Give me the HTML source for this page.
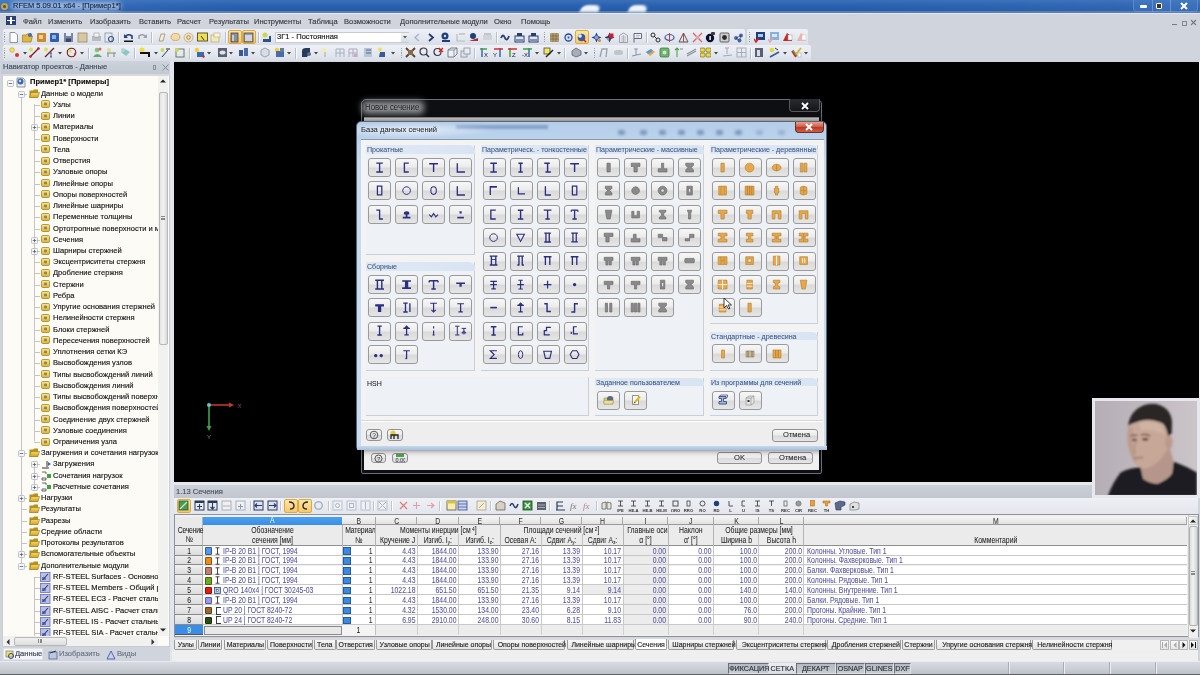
<!DOCTYPE html><html><head><meta charset="utf-8"><style>
*{margin:0;padding:0;box-sizing:border-box}
html,body{width:1200px;height:675px;overflow:hidden;background:#d0d4dd;font-family:"Liberation Sans",sans-serif;font-size:7.35px;color:#000}
div,span,svg{position:absolute}
.t{white-space:nowrap;line-height:1}
.btn{border:1px solid #8f9296;border-radius:3px;background:linear-gradient(#f7f7f7 0%,#ececec 45%,#dadada 55%,#e6e6e6 100%)}
.grp{background:#edf1f7;border-right:1px solid #c9d3e2;border-bottom:1px solid #c9d3e2}
.gh{background:linear-gradient(90deg,#dfe8f5,#d7e2f2);border-top-right-radius:5px;color:#3a4f7a}
</style></head><body><div style="left:0;top:0;width:1200px;height:675px;overflow:hidden;will-change:transform">
<svg style="left:0;top:0" width="0" height="0"><defs><linearGradient id="fg" x1="0" y1="0" x2="0" y2="1"><stop offset="0" stop-color="#f4d86a"/><stop offset="1" stop-color="#d0a42a"/></linearGradient><linearGradient id="fg2" x1="0" y1="0" x2="0" y2="1"><stop offset="0" stop-color="#fbe890"/><stop offset="1" stop-color="#dcb43c"/></linearGradient></defs></svg>
<div style="left:0px;top:0px;width:1200px;height:12px;background:linear-gradient(180deg,#3b70b8 0%,#2a62b0 45%,#2158a8 100%)"></div>
<div style="left:0px;top:0px;width:1200px;height:12px;background:linear-gradient(90deg,rgba(90,140,210,.35) 0%,rgba(0,0,0,0) 20%,rgba(0,0,0,0) 70%,rgba(80,130,200,.25) 100%)"></div>
<div style="left:0px;top:11px;width:1200px;height:2px;background:#5d7fb0"></div>
<div style="left:581px;top:5px;width:19px;height:7px;background:#eef4fb;filter:blur(1px);border-radius:5px 6px 0 0;transform:skewX(-25deg)"></div>
<div style="left:629px;top:5px;width:18px;height:7px;background:#eef4fb;filter:blur(1px);border-radius:5px 6px 0 0;transform:skewX(-20deg)"></div>
<svg style="left:0px;top:2px;" width="9" height="9" viewBox="0 0 9 9"><circle cx="4.5" cy="4.5" r="3.5" fill="#c9a14a"/><circle cx="4.5" cy="4.5" r="1.5" fill="#4c5a2a"/></svg>
<div style="left:11px;top:2px;width:110px;height:8px;background:rgba(175,200,235,.85);filter:blur(2.5px);border-radius:4px"></div>
<span class="t" style="left:13px;top:2.31px;color:#1c2436;font-size:7.95px;transform:scaleX(0.945);transform-origin:0 0;-webkit-text-stroke:.14px">RFEM 5.09.01 x64 - [Пример1*]</span>
<div style="left:1133px;top:0px;width:65px;height:12px;border:1px solid rgba(120,160,215,.5);border-top:none;border-radius:0 0 4px 4px;background:rgba(80,130,200,.3)"></div>
<div style="left:1152px;top:0px;width:1px;height:12px;background:rgba(150,180,220,.5)"></div>
<div style="left:1170px;top:0px;width:1px;height:12px;background:rgba(150,180,220,.5)"></div>
<div style="left:1140px;top:5px;width:7px;height:2.5px;background:#fff;border-radius:1px"></div>
<div style="left:1156px;top:2.5px;width:6px;height:6px;border:1.6px solid #fff;background:#333;border-radius:1px"></div>
<svg style="left:1180px;top:2px;" width="8" height="8" viewBox="0 0 8 8"><path d="M1 1L7 7M7 1L1 7" stroke="#fff" stroke-width="2"/></svg>
<div style="left:0px;top:13px;width:1200px;height:48px;background:#d0d4dd"></div>
<div style="left:0px;top:13px;width:1200px;height:1px;background:#e4e7ec"></div>
<svg style="left:6px;top:16px;" width="10" height="9" viewBox="0 0 10 9"><rect x="0" y="0" width="10" height="9" fill="#2a3f78"/><rect x="1" y="4" width="8" height="1" fill="#fff"/><rect x="4" y="1" width="2" height="7" fill="#fff"/></svg>
<span class="t" style="left:23px;top:18.28px;color:#383838;font-size:8.00px;transform:scaleX(0.945);transform-origin:0 0;-webkit-text-stroke:.14px">Файл</span>
<span class="t" style="left:48px;top:18.28px;color:#383838;font-size:8.00px;transform:scaleX(0.945);transform-origin:0 0;-webkit-text-stroke:.14px">Изменить</span>
<span class="t" style="left:90px;top:18.28px;color:#383838;font-size:8.00px;transform:scaleX(0.945);transform-origin:0 0;-webkit-text-stroke:.14px">Изобразить</span>
<span class="t" style="left:139px;top:18.28px;color:#383838;font-size:8.00px;transform:scaleX(0.945);transform-origin:0 0;-webkit-text-stroke:.14px">Вставить</span>
<span class="t" style="left:177px;top:18.28px;color:#383838;font-size:8.00px;transform:scaleX(0.945);transform-origin:0 0;-webkit-text-stroke:.14px">Расчет</span>
<span class="t" style="left:209px;top:18.28px;color:#383838;font-size:8.00px;transform:scaleX(0.945);transform-origin:0 0;-webkit-text-stroke:.14px">Результаты</span>
<span class="t" style="left:254px;top:18.28px;color:#383838;font-size:8.00px;transform:scaleX(0.945);transform-origin:0 0;-webkit-text-stroke:.14px">Инструменты</span>
<span class="t" style="left:308px;top:18.28px;color:#383838;font-size:8.00px;transform:scaleX(0.945);transform-origin:0 0;-webkit-text-stroke:.14px">Таблица</span>
<span class="t" style="left:344px;top:18.28px;color:#383838;font-size:8.00px;transform:scaleX(0.945);transform-origin:0 0;-webkit-text-stroke:.14px">Возможности</span>
<span class="t" style="left:400px;top:18.28px;color:#383838;font-size:8.00px;transform:scaleX(0.945);transform-origin:0 0;-webkit-text-stroke:.14px">Дополнительные модули</span>
<span class="t" style="left:494px;top:18.28px;color:#383838;font-size:8.00px;transform:scaleX(0.945);transform-origin:0 0;-webkit-text-stroke:.14px">Окно</span>
<span class="t" style="left:521px;top:18.28px;color:#383838;font-size:8.00px;transform:scaleX(0.945);transform-origin:0 0;-webkit-text-stroke:.14px">Помощь</span>
<div style="left:1172px;top:24px;width:4.5px;height:1.3px;background:#7a7a7a"></div>
<div style="left:1181.5px;top:21px;width:5.5px;height:4.5px;border:1px solid #888;border-top-width:1.6px"></div>
<svg style="left:1190px;top:19px;" width="7" height="7" viewBox="0 0 7 7"><path d="M1 1L6 6M6 1L1 6" stroke="#7a7a7a" stroke-width="1.1"/></svg>
<div style="left:3px;top:29px;width:742px;height:16px;background:linear-gradient(#eef0f5,#e3e7ee 60%,#d9dde6);border-radius:2px"></div>
<div style="left:747px;top:29px;width:61px;height:16px;background:linear-gradient(#eef0f5,#e3e7ee 60%,#d9dde6);border-radius:2px"></div>
<div style="left:3px;top:45px;width:808px;height:16px;background:linear-gradient(#eef0f5,#e3e7ee 60%,#d9dde6);border-radius:2px"></div>
<div style="left:4px;top:32.0px;width:1.2px;height:1.2px;background:#9aa3b3"></div>
<div style="left:4px;top:34.2px;width:1.2px;height:1.2px;background:#9aa3b3"></div>
<div style="left:4px;top:36.4px;width:1.2px;height:1.2px;background:#9aa3b3"></div>
<div style="left:4px;top:38.6px;width:1.2px;height:1.2px;background:#9aa3b3"></div>
<div style="left:4px;top:40.8px;width:1.2px;height:1.2px;background:#9aa3b3"></div>
<div style="left:4px;top:48.0px;width:1.2px;height:1.2px;background:#9aa3b3"></div>
<div style="left:4px;top:50.2px;width:1.2px;height:1.2px;background:#9aa3b3"></div>
<div style="left:4px;top:52.4px;width:1.2px;height:1.2px;background:#9aa3b3"></div>
<div style="left:4px;top:54.6px;width:1.2px;height:1.2px;background:#9aa3b3"></div>
<div style="left:4px;top:56.8px;width:1.2px;height:1.2px;background:#9aa3b3"></div>
<div style="left:749px;top:32.0px;width:1.2px;height:1.2px;background:#9aa3b3"></div>
<div style="left:749px;top:34.2px;width:1.2px;height:1.2px;background:#9aa3b3"></div>
<div style="left:749px;top:36.4px;width:1.2px;height:1.2px;background:#9aa3b3"></div>
<div style="left:749px;top:38.6px;width:1.2px;height:1.2px;background:#9aa3b3"></div>
<div style="left:749px;top:40.8px;width:1.2px;height:1.2px;background:#9aa3b3"></div>
<svg style="left:8px;top:31.5px;" width="11" height="11" viewBox="0 0 11 11"><path d="M2 .5H7L9.5 3V10.5H2Z" fill="#fdfdfd" stroke="#8b95a3"/></svg>
<svg style="left:22px;top:31.5px;" width="11" height="11" viewBox="0 0 11 11"><path d="M.5 3H4L5 2H9V4H10.5L9 10H.5Z" fill="#e0b540" stroke="#9b7b20" stroke-width=".7"/><circle cx="8" cy="3" r="2" fill="#3d6db5"/></svg>
<svg style="left:35.5px;top:31.5px;" width="11" height="11" viewBox="0 0 11 11"><rect x="1" y="1" width="9" height="9" rx="1" fill="#c88b2f"/><rect x="3" y="3" width="4" height="4" fill="#f4d08a"/></svg>
<svg style="left:49px;top:31.5px;" width="11" height="11" viewBox="0 0 11 11"><rect x="1" y="1" width="9" height="9" rx="1" fill="#2f5fae"/><rect x="3" y="3" width="4" height="4" fill="#8fb2e6"/></svg>
<svg style="left:62.5px;top:31.5px;" width="11" height="11" viewBox="0 0 11 11"><rect x="1" y="1" width="9" height="9" fill="#7a86a8"/><rect x="3" y="1" width="5" height="3" fill="#e8ecf2"/><rect x="3" y="6.5" width="5" height="3.5" fill="#3b4668"/></svg>
<svg style="left:76.5px;top:31.5px;" width="11" height="11" viewBox="0 0 11 11"><rect x="1" y="1" width="9" height="9" fill="#d8c7a0" stroke="#9a8a68" stroke-width=".8"/></svg>
<svg style="left:90.5px;top:31.5px;" width="11" height="11" viewBox="0 0 11 11"><rect x="1" y="4" width="9" height="5" fill="#b8bcc4"/><rect x="3" y="1" width="5" height="4" fill="#f4f4f4" stroke="#888" stroke-width=".5"/></svg>
<svg style="left:104px;top:31.5px;" width="11" height="11" viewBox="0 0 11 11"><rect x="1" y="1" width="7" height="9" fill="#e6e9ee" stroke="#8a93a3" stroke-width=".8"/><circle cx="7" cy="7" r="2.5" fill="none" stroke="#3a5a8a" stroke-width="1.2"/></svg>
<svg style="left:122.5px;top:31.5px;" width="11" height="11" viewBox="0 0 11 11"><path d="M2 5Q5 1 9 4V7" fill="none" stroke="#1e3f80" stroke-width="1.6"/><path d="M1 2V6H5Z" fill="#1e3f80"/><rect x="1" y="8.5" width="9" height="1.5" fill="#111"/></svg>
<svg style="left:136.5px;top:31.5px;" width="11" height="11" viewBox="0 0 11 11"><path d="M9 5Q6 1 2 4V7" fill="none" stroke="#9aa2b0" stroke-width="1.6"/><path d="M10 2V6H6Z" fill="#9aa2b0"/></svg>
<svg style="left:155.5px;top:31.5px;" width="11" height="11" viewBox="0 0 11 11"><path d="M3 9L5 2H9L7 9Z" fill="#f2ecd8" stroke="#9c8f70" stroke-width=".8"/></svg>
<svg style="left:169.5px;top:31.5px;" width="11" height="11" viewBox="0 0 11 11"><ellipse cx="5.5" cy="5" rx="4.5" ry="3.5" fill="#f3d9a8" stroke="#d49a50" stroke-width=".8"/></svg>
<svg style="left:183px;top:31.5px;" width="11" height="11" viewBox="0 0 11 11"><circle cx="5.5" cy="5.5" r="4.5" fill="#efe2c4" stroke="#c9a870" stroke-width=".8"/><circle cx="5.5" cy="5.5" r="1.8" fill="none" stroke="#b08850"/></svg>
<svg style="left:197px;top:31.5px;" width="11" height="11" viewBox="0 0 11 11"><rect x=".5" y="1" width="10" height="8" fill="#f0e04a" stroke="#4a4a2a" stroke-width=".9"/><path d="M4 4L7 8" stroke="#333"/></svg>
<svg style="left:210px;top:31.5px;" width="11" height="11" viewBox="0 0 11 11"><rect x="1" y="3" width="8" height="7" fill="#f2e8b8" stroke="#b8a878" stroke-width=".7"/><rect x="4" y="1" width="6" height="4" fill="#f8f4e0" stroke="#b8a878" stroke-width=".6"/></svg>
<div style="left:227.5px;top:30.0px;width:14px;height:14px;background:linear-gradient(#fde6a8,#f7c86a);border:1px solid #e0a840;border-radius:2px"></div>
<svg style="left:229px;top:31.5px;" width="11" height="11" viewBox="0 0 11 11"><rect x="2" y="1" width="7" height="9" fill="#8a8f98" stroke="#444" stroke-width=".8"/><rect x="3" y="3" width="2" height="6" fill="#c8ccd2"/></svg>
<div style="left:241.5px;top:30.0px;width:14px;height:14px;background:linear-gradient(#fde6a8,#f7c86a);border:1px solid #e0a840;border-radius:2px"></div>
<svg style="left:243px;top:31.5px;" width="11" height="11" viewBox="0 0 11 11"><rect x="1" y="1" width="9" height="9" fill="#9a9fa8" stroke="#444" stroke-width=".8"/><rect x="2" y="3" width="7" height="6" fill="#d2d5da"/></svg>
<svg style="left:261px;top:31.5px;" width="11" height="11" viewBox="0 0 11 11"><circle cx="4" cy="3" r="2.5" fill="#c8d848"/><rect x="2" y="7" width="8" height="3" fill="#2e4f8a"/><rect x="8" y="4" width="2" height="4" fill="#2e4f8a"/></svg>
<svg style="left:412px;top:31.5px;" width="11" height="11" viewBox="0 0 11 11"><path d="M7 2L3 5.5L7 9" fill="none" stroke="#a9b4c8" stroke-width="1.5"/></svg>
<svg style="left:426px;top:31.5px;" width="11" height="11" viewBox="0 0 11 11"><path d="M3 2L7 5.5L3 9" fill="none" stroke="#223a7a" stroke-width="1.8"/></svg>
<svg style="left:440px;top:31.5px;" width="11" height="11" viewBox="0 0 11 11"><circle cx="5" cy="4" r="3.5" fill="#1f3f7a"/><rect x="2" y="8" width="8" height="2" fill="#1f3f7a"/><circle cx="5" cy="4" r="1.2" fill="#d8e4f0"/></svg>
<svg style="left:454.5px;top:31.5px;" width="11" height="11" viewBox="0 0 11 11"><path d="M2 2V9H10" fill="none" stroke="#b8bcc4" stroke-width="1.2"/><rect x="4" y="1" width="6" height="2" fill="#c8ccd2"/></svg>
<svg style="left:468px;top:31.5px;" width="11" height="11" viewBox="0 0 11 11"><circle cx="5" cy="4" r="3" fill="#1f3f7a"/><path d="M1 9L10 6V9Z" fill="#b03030"/></svg>
<svg style="left:482px;top:31.5px;" width="11" height="11" viewBox="0 0 11 11"><rect x="1" y="3" width="9" height="5" fill="#d0d3d9"/><rect x="2" y="1" width="7" height="2" fill="#c0c4cc"/></svg>
<svg style="left:500px;top:31.5px;" width="11" height="11" viewBox="0 0 11 11"><path d="M1 6Q3 1 5 6Q7 10 9 4" fill="none" stroke="#2a3f70" stroke-width="1.8"/></svg>
<svg style="left:514px;top:31.5px;" width="11" height="11" viewBox="0 0 11 11"><rect x="1" y="4" width="9" height="6" fill="#dfe4ee" stroke="#2a3f70" stroke-width="1"/><rect x="3" y="1" width="5" height="3" fill="#2a3f70"/><path d="M2 8H9" stroke="#2a3f70"/></svg>
<svg style="left:528px;top:31.5px;" width="11" height="11" viewBox="0 0 11 11"><rect x="1" y="4" width="9" height="6" fill="#dfe4ee" stroke="#2a3f70" stroke-width="1"/><rect x="3" y="1" width="5" height="3" fill="#2a3f70"/><path d="M2 8H9" stroke="#2a3f70"/></svg>
<svg style="left:549px;top:31.5px;" width="11" height="11" viewBox="0 0 11 11"><rect x="1" y="1" width="9" height="9" fill="#b89f70"/><path d="M1 4H10M1 7H10M4 1V10M7 1V10" stroke="#6a5a40" stroke-width=".6"/></svg>
<svg style="left:562.5px;top:31.5px;" width="11" height="11" viewBox="0 0 11 11"><circle cx="5.5" cy="5.5" r="3.5" fill="#d8e0f0" stroke="#2a4a9a" stroke-width="1.3"/><circle cx="5.5" cy="5.5" r="1" fill="#2a4a9a"/></svg>
<div style="left:574.5px;top:30.0px;width:14px;height:14px;background:linear-gradient(#fde6a8,#f7c86a);border:1px solid #e0a840;border-radius:2px"></div>
<svg style="left:576px;top:31.5px;" width="11" height="11" viewBox="0 0 11 11"><circle cx="5.5" cy="5.5" r="3.8" fill="#3a5aa0"/><circle cx="4" cy="4" r="1.8" fill="#e8f0ff"/><path d="M7 7L10 10" stroke="#b03030" stroke-width="1.5"/></svg>
<svg style="left:590.5px;top:31.5px;" width="11" height="11" viewBox="0 0 11 11"><path d="M5.5 .5L7 4L10.5 5.5L7 7L5.5 10.5L4 7L.5 5.5L4 4Z" fill="#1f3a7a"/><circle cx="5.5" cy="5.5" r="2" fill="#7aa0e0"/><circle cx="8.5" cy="8.5" r="1.5" fill="#e08030"/></svg>
<svg style="left:604px;top:31.5px;" width="11" height="11" viewBox="0 0 11 11"><path d="M5.5 .5L7 4L10.5 5.5L7 7L5.5 10.5L4 7L.5 5.5L4 4Z" fill="#2a2f5a"/><rect x="5" y="1.5" width="4.5" height="4.5" fill="#c81e2e"/><circle cx="4" cy="7" r="1.3" fill="#8aa0d0"/></svg>
<svg style="left:617.5px;top:31.5px;" width="11" height="11" viewBox="0 0 11 11"><path d="M1.5 10.5V3.5L5.5 1L9.5 3.5V10.5Z" fill="#e8eaee" stroke="#8a909a" stroke-width=".8"/><path d="M3 5H8M3 7H8M3 9H8M5.5 3V10" stroke="#9aa0aa" stroke-width=".6"/></svg>
<svg style="left:631.5px;top:31.5px;" width="11" height="11" viewBox="0 0 11 11"><path d="M2 10.5V1.5H9.5V6.5H2" fill="#eef0f2" stroke="#606a78" stroke-width="1"/><path d="M4 3.5H8M4 5H7" stroke="#9aa0aa" stroke-width=".6"/></svg>
<svg style="left:650px;top:31.5px;" width="11" height="11" viewBox="0 0 11 11"><circle cx="3" cy="3" r="2" fill="none" stroke="#2a2a2a"/><circle cx="8" cy="8" r="2" fill="none" stroke="#2a2a2a"/><path d="M4 4L7 7" stroke="#2a2a2a"/></svg>
<svg style="left:663.5px;top:31.5px;" width="11" height="11" viewBox="0 0 11 11"><ellipse cx="5.5" cy="5.5" rx="4.5" ry="3" fill="none" stroke="#3a5aa0" stroke-width="1.2"/><path d="M5.5 1V10" stroke="#c04040"/></svg>
<svg style="left:677.5px;top:31.5px;" width="11" height="11" viewBox="0 0 11 11"><path d="M5.5 1L10 10H1Z" fill="none" stroke="#555" stroke-width="1"/><path d="M5.5 1V10" stroke="#c04040"/></svg>
<svg style="left:691.5px;top:31.5px;" width="11" height="11" viewBox="0 0 11 11"><path d="M1 1L10 10M10 1L1 10" stroke="#e06060" stroke-width="1.3"/><rect x="4" y="4" width="3" height="3" fill="#e8a0a0"/></svg>
<svg style="left:705px;top:31.5px;" width="11" height="11" viewBox="0 0 11 11"><circle cx="5" cy="6" r="4.2" fill="#0a1030"/><rect x="4.4" y="4" width="1.4" height="4" fill="#fff"/><rect x="6" y="0" width="4" height="3" rx="1" fill="#3a3a3a"/></svg>
<svg style="left:719px;top:31.5px;" width="11" height="11" viewBox="0 0 11 11"><rect x="1" y="1" width="9" height="9" rx="1" fill="#d0d0d0" stroke="#606060"/><circle cx="5.5" cy="5.5" r="2.4" fill="#2a2a2a"/></svg>
<svg style="left:733px;top:31.5px;" width="11" height="11" viewBox="0 0 11 11"><circle cx="3" cy="6" r="2" fill="#4a6aa8"/><circle cx="8" cy="3.5" r="2" fill="#4a6aa8"/><circle cx="6.5" cy="8.5" r="2" fill="#4a6aa8"/><path d="M3 6L8 3.5L6.5 8.5Z" stroke="#2a3a6a" fill="none" stroke-width=".6"/></svg>
<svg style="left:754px;top:31.5px;" width="11" height="11" viewBox="0 0 11 11"><rect x="2" y="0" width="9" height="8" fill="#1d3f80"/><rect x="4" y="2" width="5" height="3" fill="#a8c8f0"/><path d="M0 7L2 10L5 6" stroke="#d02020" fill="none" stroke-width="1.5"/></svg>
<svg style="left:768px;top:31.5px;" width="11" height="11" viewBox="0 0 11 11"><rect x="2" y="0" width="9" height="8" fill="#8ab0e0"/><rect x="4" y="2" width="5" height="3" fill="#d8e8f8"/><path d="M0 7L2 10L5 6" stroke="#e8a0a0" fill="none" stroke-width="1.3"/></svg>
<svg style="left:782px;top:31.5px;" width="11" height="11" viewBox="0 0 11 11"><path d="M1 9L5 1L10 5V9Z" fill="#c82828"/><rect x="6" y="3" width="4" height="5" fill="#fff" stroke="#999" stroke-width=".5"/></svg>
<svg style="left:795.5px;top:31.5px;" width="11" height="11" viewBox="0 0 11 11"><path d="M1 9L5 1L10 5V9Z" fill="#f0b0b0"/><rect x="6" y="3" width="4" height="5" fill="#fafafa" stroke="#ccc" stroke-width=".5"/></svg>
<div style="left:118px;top:32px;width:1px;height:11px;background:#b9c0cc;border-right:1px solid #fafbfd;width:2px"></div>
<div style="left:150.5px;top:32px;width:1px;height:11px;background:#b9c0cc;border-right:1px solid #fafbfd;width:2px"></div>
<div style="left:225px;top:32px;width:1px;height:11px;background:#b9c0cc;border-right:1px solid #fafbfd;width:2px"></div>
<div style="left:257.5px;top:32px;width:1px;height:11px;background:#b9c0cc;border-right:1px solid #fafbfd;width:2px"></div>
<div style="left:495.5px;top:32px;width:1px;height:11px;background:#b9c0cc;border-right:1px solid #fafbfd;width:2px"></div>
<div style="left:645.5px;top:32px;width:1px;height:11px;background:#b9c0cc;border-right:1px solid #fafbfd;width:2px"></div>
<div style="left:544px;top:32.0px;width:1.2px;height:1.2px;background:#9aa3b3"></div>
<div style="left:544px;top:34.2px;width:1.2px;height:1.2px;background:#9aa3b3"></div>
<div style="left:544px;top:36.4px;width:1.2px;height:1.2px;background:#9aa3b3"></div>
<div style="left:544px;top:38.6px;width:1.2px;height:1.2px;background:#9aa3b3"></div>
<div style="left:544px;top:40.8px;width:1.2px;height:1.2px;background:#9aa3b3"></div>
<div style="left:275px;top:31.5px;width:134px;height:11px;background:#fff;border:1px solid #c5cad3"></div>
<div style="left:401px;top:32.5px;width:7.5px;height:9px;background:linear-gradient(#eef0f4,#d8dce4)"></div>
<svg style="left:403px;top:36px;" width="5" height="3" viewBox="0 0 5 3"><path d="M0 0H4L2 2.5Z" fill="#555"/></svg>
<span class="t" style="left:277px;top:33.18px;color:#111;font-size:8.00px;transform:scaleX(0.945);transform-origin:0 0;-webkit-text-stroke:.14px">3Г1 - Постоянная</span>
<svg style="left:9px;top:47px;" width="11" height="11" viewBox="0 0 11 11"><circle cx="3" cy="3" r="2.3" fill="#f0e060" stroke="#c0a020" stroke-width=".6"/><circle cx="8" cy="8" r="2" fill="#e03030"/></svg>
<svg style="left:29px;top:47px;" width="11" height="11" viewBox="0 0 11 11"><path d="M1 10L10 1" stroke="#7a1a1a" stroke-width="1.2"/><circle cx="2" cy="2.5" r="2" fill="#d8e060"/><circle cx="1.5" cy="9.5" r="1.3" fill="#d02020"/><circle cx="9.5" cy="1.5" r="1.3" fill="#d02020"/></svg>
<svg style="left:44px;top:47px;" width="11" height="11" viewBox="0 0 11 11"><path d="M1 10L10 1" stroke="#7a1a1a" stroke-width="1.2"/><circle cx="2" cy="2.5" r="2" fill="#d8e060"/><path d="M7 6V10M6 6H8M6 10H8" stroke="#223a7a" stroke-width=".8"/></svg>
<svg style="left:66px;top:47px;" width="11" height="11" viewBox="0 0 11 11"><circle cx="5.5" cy="5.5" r="4.3" fill="none" stroke="#7a1a1a" stroke-width="1.1"/><circle cx="4" cy="4" r="1.8" fill="#d8e060"/><circle cx="9" cy="7" r="1" fill="#d02020"/></svg>
<svg style="left:92px;top:47px;" width="11" height="11" viewBox="0 0 11 11"><circle cx="5" cy="3" r="2.3" fill="#80c080"/><path d="M1 10Q5 4 10 10Z" fill="#60a870"/><circle cx="8" cy="2" r="1.5" fill="#e06060"/></svg>
<svg style="left:105.5px;top:47px;" width="11" height="11" viewBox="0 0 11 11"><circle cx="3" cy="3" r="2" fill="#d8e090"/><path d="M1 6H10M2 6V10M8 6V10" stroke="#7a8a7a" stroke-width="1"/></svg>
<svg style="left:120px;top:47px;" width="11" height="11" viewBox="0 0 11 11"><path d="M1 5L5 2L10 5L6 9Z" fill="#8cc8c0"/><circle cx="3" cy="3" r="2" fill="#a8d8d0"/></svg>
<svg style="left:139px;top:47px;" width="11" height="11" viewBox="0 0 11 11"><circle cx="3" cy="3" r="2.5" fill="#e8e040"/><path d="M1 6H10V10" fill="none" stroke="#111" stroke-width="2"/></svg>
<svg style="left:160px;top:47px;" width="11" height="11" viewBox="0 0 11 11"><circle cx="2.5" cy="3" r="2" fill="#c8d860"/><path d="M2 10L8 3" stroke="#223a5a" stroke-width="1"/><rect x="6" y="1" width="4" height="2" fill="#888"/></svg>
<svg style="left:174px;top:47px;" width="11" height="11" viewBox="0 0 11 11"><rect x="2" y="2" width="8" height="8" fill="none" stroke="#6a7a5a" stroke-width="1"/><circle cx="3" cy="3" r="2" fill="#c8d860"/></svg>
<svg style="left:194px;top:47px;" width="11" height="11" viewBox="0 0 11 11"><circle cx="3" cy="3" r="2.3" fill="#f0d040"/><rect x="3" y="5" width="7" height="5" fill="#3a6ab0"/><circle cx="9.5" cy="9.5" r="1.2" fill="#d02020"/></svg>
<svg style="left:216.5px;top:47px;" width="11" height="11" viewBox="0 0 11 11"><rect x="1" y="1" width="9" height="9" fill="#5a6070"/><ellipse cx="5.5" cy="5.5" rx="3" ry="2" fill="#e0e4ea"/></svg>
<svg style="left:238px;top:47px;" width="11" height="11" viewBox="0 0 11 11"><rect x="1" y="3" width="4" height="6" fill="#3a5a90"/><rect x="6" y="1" width="4" height="8" fill="#4a6aa8"/></svg>
<svg style="left:259px;top:47px;" width="11" height="11" viewBox="0 0 11 11"><path d="M2 3L6 1L10 3V8L6 10L2 8Z" fill="#d8dce4" stroke="#8a909a" stroke-width=".8"/></svg>
<svg style="left:274px;top:47px;" width="11" height="11" viewBox="0 0 11 11"><circle cx="3" cy="3" r="2.3" fill="#f0d040"/><rect x="2" y="4" width="8" height="6" fill="#4a6aa8"/><rect x="6" y="1" width="4" height="4" fill="#6a7a9a"/></svg>
<svg style="left:300.5px;top:47px;" width="11" height="11" viewBox="0 0 11 11"><path d="M1 4Q1 1 5 1H9V5L6 10H1Z" fill="#2a3a5a"/><circle cx="8" cy="7" r="2" fill="#5a6a8a"/></svg>
<svg style="left:320px;top:47px;" width="11" height="11" viewBox="0 0 11 11"><circle cx="4" cy="3" r="2" fill="#f0f0a0"/><path d="M5 5V10" stroke="#c8a8a8" stroke-width="1.2"/></svg>
<svg style="left:335px;top:47px;" width="11" height="11" viewBox="0 0 11 11"><path d="M1 10V2H9V10M1 6H9M5 2V10" fill="none" stroke="#a8b0c0" stroke-width="1"/></svg>
<svg style="left:348px;top:47px;" width="11" height="11" viewBox="0 0 11 11"><path d="M1 10V2H9V10M1 6H9M5 2V10" fill="none" stroke="#b0a8c0" stroke-width="1"/><rect x="6" y="7" width="3" height="3" fill="#c8a8d0"/></svg>
<svg style="left:363px;top:47px;" width="11" height="11" viewBox="0 0 11 11"><rect x="1" y="1" width="8" height="9" fill="#b8c4d8"/><path d="M3 3H8M3 6H8" stroke="#5a6a8a"/></svg>
<svg style="left:377px;top:47px;" width="11" height="11" viewBox="0 0 11 11"><circle cx="3" cy="2.5" r="2" fill="#e8e060"/><path d="M3 5H8V10H2Z" fill="#3a5a9a"/></svg>
<svg style="left:405px;top:47px;" width="11" height="11" viewBox="0 0 11 11"><path d="M1 1L10 10M10 1L1 10" stroke="#5a4030" stroke-width="1.8"/><rect x="3" y="3" width="5" height="5" fill="#8a6a4a"/></svg>
<svg style="left:419px;top:47px;" width="11" height="11" viewBox="0 0 11 11"><circle cx="4.5" cy="4.5" r="3.5" fill="#e8eaf0" stroke="#3a3a4a" stroke-width="1.2"/><path d="M7 7L10 10" stroke="#3a3a4a" stroke-width="1.6"/></svg>
<svg style="left:433px;top:47px;" width="11" height="11" viewBox="0 0 11 11"><circle cx="4.5" cy="5" r="3.5" fill="#e8eaf0" stroke="#3a3a4a" stroke-width="1.2"/><path d="M6 1L10 5M10 1L6 5" stroke="#d02020" stroke-width="1.2"/></svg>
<svg style="left:447px;top:47px;" width="11" height="11" viewBox="0 0 11 11"><path d="M1 3L4 1H10V7L7 10H1Z" fill="#eef0f4" stroke="#6a7080" stroke-width=".9"/><path d="M1 3H7V10M7 3L10 1" fill="none" stroke="#6a7080" stroke-width=".7"/></svg>
<svg style="left:460px;top:47px;" width="11" height="11" viewBox="0 0 11 11"><rect x="1" y="4" width="6" height="6" fill="#e0e4ea" stroke="#8a909a" stroke-width=".8"/><rect x="4" y="1" width="6" height="6" fill="#e8ecf2" stroke="#8a909a" stroke-width=".8"/></svg>
<svg style="left:479px;top:47px;" width="11" height="11" viewBox="0 0 11 11"><path d="M3 1V10" stroke="#3a6ab0" stroke-width="1.5"/><path d="M1 2H8" stroke="#40a040" stroke-width="1.5"/><text x="5" y="10" font-size="6" fill="#223">X</text></svg>
<svg style="left:493px;top:47px;" width="11" height="11" viewBox="0 0 11 11"><path d="M7 1V10" stroke="#3a6ab0" stroke-width="1.5"/><path d="M1 2H10" stroke="#d03030" stroke-width="1.5"/><text x="0" y="10" font-size="6" fill="#223">Y</text></svg>
<svg style="left:507px;top:47px;" width="11" height="11" viewBox="0 0 11 11"><path d="M3 1V10" stroke="#40a040" stroke-width="1.5"/><path d="M1 2H10" stroke="#d03030" stroke-width="1.5"/><text x="5" y="10" font-size="6" fill="#223">Z</text></svg>
<svg style="left:522px;top:47px;" width="11" height="11" viewBox="0 0 11 11"><path d="M7 1V10" stroke="#3a6ab0" stroke-width="1.5"/><path d="M1 2H10" stroke="#40a040" stroke-width="1.5"/><text x="0" y="10" font-size="6" fill="#223">-X</text></svg>
<svg style="left:543px;top:47px;" width="11" height="11" viewBox="0 0 11 11"><rect x="1" y="1" width="6" height="6" fill="#f0e860" stroke="#333" stroke-width=".7"/><path d="M3 10L10 3" stroke="#222" stroke-width="1.5"/></svg>
<svg style="left:570.5px;top:47px;" width="11" height="11" viewBox="0 0 11 11"><path d="M1 4L5 1L10 4V8L5 10L1 8Z" fill="#a8aeb8" stroke="#5a606a" stroke-width=".8"/></svg>
<svg style="left:599px;top:47px;" width="11" height="11" viewBox="0 0 11 11"><path d="M1 10L3 2H8L7 10" fill="none" stroke="#9aa0aa" stroke-width="1.3"/></svg>
<svg style="left:612.5px;top:47px;" width="11" height="11" viewBox="0 0 11 11"><rect x="1" y="3" width="9" height="5" rx="2.5" fill="#c0c4cc"/></svg>
<svg style="left:630.5px;top:47px;" width="11" height="11" viewBox="0 0 11 11"><path d="M1 9L10 7M5 2V8M3 2H7" stroke="#8a9ab0" stroke-width="1.1" fill="none"/></svg>
<svg style="left:644.5px;top:47px;" width="11" height="11" viewBox="0 0 11 11"><path d="M1 5L6 2L10 5L5 9Z" fill="#f0a040"/><path d="M1 5L6 2L8 4L3 7Z" fill="#40a0e0"/></svg>
<svg style="left:659px;top:47px;" width="11" height="11" viewBox="0 0 11 11"><rect x="1" y="1" width="9" height="9" rx="1.5" fill="#70b070" stroke="#3a7a3a" stroke-width=".8"/><circle cx="5.5" cy="5.5" r="2" fill="#c8e8c8"/></svg>
<svg style="left:672.5px;top:47px;" width="11" height="11" viewBox="0 0 11 11"><path d="M4 1V10M2 3L4 1L6 3" stroke="#50a050" fill="none" stroke-width="1.1"/><path d="M7 2L10 2" stroke="#888"/></svg>
<svg style="left:686px;top:47px;" width="11" height="11" viewBox="0 0 11 11"><path d="M1 9L10 4M1 7L10 2" stroke="#8a9098" stroke-width="1.1"/></svg>
<svg style="left:700px;top:47px;" width="11" height="11" viewBox="0 0 11 11"><rect x="0" y="1" width="5" height="4" rx="1" fill="#e8d850" stroke="#6a6020" stroke-width=".6"/><rect x="6" y="1" width="5" height="4" rx="1" fill="#e8d850" stroke="#6a6020" stroke-width=".6"/><rect x="0" y="6" width="5" height="4" rx="1" fill="#e8d850" stroke="#6a6020" stroke-width=".6"/><rect x="6" y="6" width="5" height="4" rx="1" fill="#e8d850" stroke="#6a6020" stroke-width=".6"/></svg>
<svg style="left:722px;top:47px;" width="11" height="11" viewBox="0 0 11 11"><path d="M5 1V7M3 1H7M1 9L10 8" stroke="#a0a8b8" stroke-width="1" fill="none"/></svg>
<svg style="left:735.5px;top:47px;" width="11" height="11" viewBox="0 0 11 11"><rect x="1" y="1" width="9" height="9" fill="none" stroke="#a8aeb8"/><path d="M1 5.5H10M5.5 1V10" stroke="#a8aeb8"/></svg>
<svg style="left:754px;top:47px;" width="11" height="11" viewBox="0 0 11 11"><rect x="1" y="1" width="8" height="9" fill="#5a6070"/><rect x="3" y="3" width="3" height="6" fill="#d8dce4"/></svg>
<svg style="left:769px;top:47px;" width="11" height="11" viewBox="0 0 11 11"><circle cx="3" cy="3" r="2.3" fill="#e0d840"/><path d="M1 10L10 5" stroke="#3a5aa0" stroke-width="1.8"/><path d="M6 1L9 3" stroke="#333"/></svg>
<svg style="left:791px;top:47px;" width="11" height="11" viewBox="0 0 11 11"><path d="M1 4L5 10" stroke="#d03030" stroke-width="2"/><path d="M2 3L6 9" stroke="#40a040" stroke-width="1.2"/><path d="M5 7L10 1" stroke="#d8b020" stroke-width="1.6"/><rect x="7" y="6" width="3" height="4" fill="#fff" stroke="#999" stroke-width=".5"/></svg>
<svg style="left:23px;top:52px;" width="5" height="3" viewBox="0 0 5 3"><path d="M0 0H4L2 2.5Z" fill="#444"/></svg>
<svg style="left:58px;top:52px;" width="5" height="3" viewBox="0 0 5 3"><path d="M0 0H4L2 2.5Z" fill="#444"/></svg>
<svg style="left:80px;top:52px;" width="5" height="3" viewBox="0 0 5 3"><path d="M0 0H4L2 2.5Z" fill="#444"/></svg>
<svg style="left:153.6px;top:52px;" width="5" height="3" viewBox="0 0 5 3"><path d="M0 0H4L2 2.5Z" fill="#444"/></svg>
<svg style="left:207px;top:52px;" width="5" height="3" viewBox="0 0 5 3"><path d="M0 0H4L2 2.5Z" fill="#444"/></svg>
<svg style="left:229px;top:52px;" width="5" height="3" viewBox="0 0 5 3"><path d="M0 0H4L2 2.5Z" fill="#444"/></svg>
<svg style="left:251px;top:52px;" width="5" height="3" viewBox="0 0 5 3"><path d="M0 0H4L2 2.5Z" fill="#444"/></svg>
<svg style="left:287px;top:52px;" width="5" height="3" viewBox="0 0 5 3"><path d="M0 0H4L2 2.5Z" fill="#444"/></svg>
<svg style="left:313.6px;top:52px;" width="5" height="3" viewBox="0 0 5 3"><path d="M0 0H4L2 2.5Z" fill="#444"/></svg>
<svg style="left:390.5px;top:52px;" width="5" height="3" viewBox="0 0 5 3"><path d="M0 0H4L2 2.5Z" fill="#444"/></svg>
<svg style="left:535px;top:52px;" width="5" height="3" viewBox="0 0 5 3"><path d="M0 0H4L2 2.5Z" fill="#444"/></svg>
<svg style="left:557px;top:52px;" width="5" height="3" viewBox="0 0 5 3"><path d="M0 0H4L2 2.5Z" fill="#444"/></svg>
<svg style="left:583.6px;top:52px;" width="5" height="3" viewBox="0 0 5 3"><path d="M0 0H4L2 2.5Z" fill="#444"/></svg>
<svg style="left:714px;top:52px;" width="5" height="3" viewBox="0 0 5 3"><path d="M0 0H4L2 2.5Z" fill="#444"/></svg>
<svg style="left:783px;top:52px;" width="5" height="3" viewBox="0 0 5 3"><path d="M0 0H4L2 2.5Z" fill="#444"/></svg>
<svg style="left:804px;top:52px;" width="5" height="3" viewBox="0 0 5 3"><path d="M0 0H4L2 2.5Z" fill="#444"/></svg>
<div style="left:87.5px;top:47.5px;width:1px;height:11px;background:#b9c0cc;border-right:1px solid #fafbfd;width:2px"></div>
<div style="left:134px;top:47.5px;width:1px;height:11px;background:#b9c0cc;border-right:1px solid #fafbfd;width:2px"></div>
<div style="left:189px;top:47.5px;width:1px;height:11px;background:#b9c0cc;border-right:1px solid #fafbfd;width:2px"></div>
<div style="left:295px;top:47.5px;width:1px;height:11px;background:#b9c0cc;border-right:1px solid #fafbfd;width:2px"></div>
<div style="left:474px;top:47.5px;width:1px;height:11px;background:#b9c0cc;border-right:1px solid #fafbfd;width:2px"></div>
<div style="left:564px;top:47.5px;width:1px;height:11px;background:#b9c0cc;border-right:1px solid #fafbfd;width:2px"></div>
<div style="left:627px;top:47.5px;width:1px;height:11px;background:#b9c0cc;border-right:1px solid #fafbfd;width:2px"></div>
<div style="left:750px;top:47.5px;width:1px;height:11px;background:#b9c0cc;border-right:1px solid #fafbfd;width:2px"></div>
<div style="left:400.6px;top:48.0px;width:1.2px;height:1.2px;background:#9aa3b3"></div>
<div style="left:400.6px;top:50.2px;width:1.2px;height:1.2px;background:#9aa3b3"></div>
<div style="left:400.6px;top:52.4px;width:1.2px;height:1.2px;background:#9aa3b3"></div>
<div style="left:400.6px;top:54.6px;width:1.2px;height:1.2px;background:#9aa3b3"></div>
<div style="left:400.6px;top:56.8px;width:1.2px;height:1.2px;background:#9aa3b3"></div>
<div style="left:594px;top:48.0px;width:1.2px;height:1.2px;background:#9aa3b3"></div>
<div style="left:594px;top:50.2px;width:1.2px;height:1.2px;background:#9aa3b3"></div>
<div style="left:594px;top:52.4px;width:1.2px;height:1.2px;background:#9aa3b3"></div>
<div style="left:594px;top:54.6px;width:1.2px;height:1.2px;background:#9aa3b3"></div>
<div style="left:594px;top:56.8px;width:1.2px;height:1.2px;background:#9aa3b3"></div>
<div style="left:0px;top:61px;width:172px;height:600px;background:#d0d4dd"></div>
<div style="left:1px;top:61px;width:168px;height:12.5px;background:linear-gradient(#cdd3dc,#c2c9d3)"></div>
<span class="t" style="left:3px;top:63.28px;color:#3b4658;font-size:8.00px;transform:scaleX(0.945);transform-origin:0 0;-webkit-text-stroke:.14px">Навигатор проектов - Данные</span>
<div style="left:152.5px;top:65px;width:3.5px;height:4.5px;border:1px solid #8a929e;border-bottom-width:1.5px"></div>
<svg style="left:161.5px;top:63.5px;" width="7" height="7" viewBox="0 0 7 7"><path d="M.5 .5L6.5 6.5M6.5 .5L.5 6.5" stroke="#7a828e" stroke-width=".9"/></svg>
<div style="left:2px;top:74px;width:168px;height:573px;background:#fcfbf6;border:1px solid #c9ccd2;border-top:2px solid #d8d9dc"></div>
<div style="left:158px;top:76px;width:10px;height:560px;background:#f1f1ef"></div>
<svg style="left:160px;top:79px;" width="6" height="4" viewBox="0 0 6 4"><path d="M0 3.5L3 .5L6 3.5Z" fill="#222"/></svg>
<div style="left:158.5px;top:92px;width:9.5px;height:253px;background:linear-gradient(90deg,#e4e4e4,#f2f2f2 50%,#d8d8d8);border:1px solid #b8b8b8;border-radius:2px"></div>
<div style="left:161px;top:216.0px;width:4px;height:0.8px;background:#8a8a8a"></div>
<div style="left:161px;top:217.6px;width:4px;height:0.8px;background:#8a8a8a"></div>
<div style="left:161px;top:219.2px;width:4px;height:0.8px;background:#8a8a8a"></div>
<svg style="left:160px;top:628px;" width="6" height="4" viewBox="0 0 6 4"><path d="M0 .5L3 3.5L6 .5Z" fill="#222"/></svg>
<div style="left:3px;top:636px;width:155px;height:10px;background:#f1f1ef"></div>
<svg style="left:6px;top:638.5px;" width="4" height="6" viewBox="0 0 4 6"><path d="M3.5 0L.5 3L3.5 6Z" fill="#333"/></svg>
<div style="left:14px;top:636.5px;width:53px;height:9px;background:linear-gradient(#f2f2f2,#dcdcdc);border:1px solid #b8b8b8;border-radius:2px"></div>
<div style="left:38.0px;top:639px;width:0.8px;height:4px;background:#8a8a8a"></div>
<div style="left:39.6px;top:639px;width:0.8px;height:4px;background:#8a8a8a"></div>
<div style="left:41.2px;top:639px;width:0.8px;height:4px;background:#8a8a8a"></div>
<svg style="left:151px;top:638.5px;" width="4" height="6" viewBox="0 0 4 6"><path d="M.5 0L3.5 3L.5 6Z" fill="#333"/></svg>
<div style="left:3px;top:76px;width:155px;height:560px;overflow:hidden">
<div style="left:18px;top:17px;width:1px;height:472px;background:#c4c4c4"></div>
<div style="left:30.5px;top:28px;width:1px;height:337px;background:#c4c4c4"></div>
<div style="left:30.5px;top:388px;width:1px;height:23px;background:#c4c4c4"></div>
<div style="left:30.5px;top:501px;width:1px;height:70px;background:#c4c4c4"></div>
<svg style="left:3.5px;top:3.5px" width="7" height="7" viewBox="0 0 7 7"><rect x=".5" y=".5" width="6" height="6" rx="1" fill="#f4f5f8" stroke="#b0b6c0" stroke-width=".8"/><path d="M1.8 3.5H5.2" stroke="#5a5a5a" stroke-width=".8"/></svg>
<svg style="left:13px;top:1.0px" width="10" height="11" viewBox="0 0 10 11"><path d="M1 1H7L9 3V10H1Z" fill="#e8ecf2" stroke="#7a8290" stroke-width=".8"/><circle cx="4.5" cy="4.5" r="3" fill="#3a6ab0"/><circle cx="4" cy="4" r="1.2" fill="#c8d8f0"/></svg>
<span class="t" style="left:26.5px;top:2.48px;color:#111;font-weight:bold;font-size:8.00px;transform:scaleX(0.945);transform-origin:0 0;-webkit-text-stroke:.14px">Пример1* [Примеры]</span>
<div style="left:18.3px;top:17.735px;width:6.199999999999999px;height:1px;background:#c4c4c4"></div>
<svg style="left:15.3px;top:14.735px" width="7" height="7" viewBox="0 0 7 7"><rect x=".5" y=".5" width="6" height="6" rx="1" fill="#f4f5f8" stroke="#b0b6c0" stroke-width=".8"/><path d="M1.8 3.5H5.2" stroke="#5a5a5a" stroke-width=".8"/></svg>
<svg style="left:25.5px;top:12.735px" width="11" height="9" viewBox="0 0 11 9"><path d="M.5 1.5H4L5 .5H9V8.5H.5Z" fill="#b8901c"/><path d="M2 3.5H10.5L9 8.5H.5Z" fill="url(#fg)" stroke="#9a7410" stroke-width=".6"/></svg>
<span class="t" style="left:38.2px;top:13.71px;color:#111;font-size:8.00px;transform:scaleX(0.945);transform-origin:0 0;-webkit-text-stroke:.14px">Данные о модели</span>
<div style="left:30.5px;top:28.97px;width:6.5px;height:1px;background:#c4c4c4"></div>
<svg style="left:38px;top:24.47px" width="9" height="8" viewBox="0 0 9 8"><rect x=".5" y=".5" width="8" height="7" rx="1.2" fill="url(#fg2)" stroke="#a88420" stroke-width=".8"/><rect x="3" y="2.6" width="3" height="2.6" fill="#4a4a4a" opacity=".55"/></svg>
<span class="t" style="left:50px;top:24.95px;color:#111;font-size:8.00px;transform:scaleX(0.945);transform-origin:0 0;-webkit-text-stroke:.14px">Узлы</span>
<div style="left:30.5px;top:40.205px;width:6.5px;height:1px;background:#c4c4c4"></div>
<svg style="left:38px;top:35.705px" width="9" height="8" viewBox="0 0 9 8"><rect x=".5" y=".5" width="8" height="7" rx="1.2" fill="url(#fg2)" stroke="#a88420" stroke-width=".8"/><rect x="3" y="2.6" width="3" height="2.6" fill="#4a4a4a" opacity=".55"/></svg>
<span class="t" style="left:50px;top:36.18px;color:#111;font-size:8.00px;transform:scaleX(0.945);transform-origin:0 0;-webkit-text-stroke:.14px">Линии</span>
<div style="left:30.5px;top:51.44px;width:6.5px;height:1px;background:#c4c4c4"></div>
<svg style="left:27.5px;top:48.44px" width="7" height="7" viewBox="0 0 7 7"><rect x=".5" y=".5" width="6" height="6" rx="1" fill="#f4f5f8" stroke="#b0b6c0" stroke-width=".8"/><path d="M1.8 3.5H5.2" stroke="#5a5a5a" stroke-width=".8"/><path d="M3.5 1.8V5.2" stroke="#5a5a5a" stroke-width=".8"/></svg>
<svg style="left:38px;top:46.94px" width="9" height="8" viewBox="0 0 9 8"><rect x=".5" y=".5" width="8" height="7" rx="1.2" fill="url(#fg2)" stroke="#a88420" stroke-width=".8"/><rect x="3" y="2.6" width="3" height="2.6" fill="#4a4a4a" opacity=".55"/></svg>
<span class="t" style="left:50px;top:47.42px;color:#111;font-size:8.00px;transform:scaleX(0.945);transform-origin:0 0;-webkit-text-stroke:.14px">Материалы</span>
<div style="left:30.5px;top:62.67500000000001px;width:6.5px;height:1px;background:#c4c4c4"></div>
<svg style="left:38px;top:58.17500000000001px" width="9" height="8" viewBox="0 0 9 8"><rect x=".5" y=".5" width="8" height="7" rx="1.2" fill="url(#fg2)" stroke="#a88420" stroke-width=".8"/><rect x="3" y="2.6" width="3" height="2.6" fill="#4a4a4a" opacity=".55"/></svg>
<span class="t" style="left:50px;top:58.65px;color:#111;font-size:8.00px;transform:scaleX(0.945);transform-origin:0 0;-webkit-text-stroke:.14px">Поверхности</span>
<div style="left:30.5px;top:73.91px;width:6.5px;height:1px;background:#c4c4c4"></div>
<svg style="left:38px;top:69.41px" width="9" height="8" viewBox="0 0 9 8"><rect x=".5" y=".5" width="8" height="7" rx="1.2" fill="url(#fg2)" stroke="#a88420" stroke-width=".8"/><rect x="3" y="2.6" width="3" height="2.6" fill="#4a4a4a" opacity=".55"/></svg>
<span class="t" style="left:50px;top:69.89px;color:#111;font-size:8.00px;transform:scaleX(0.945);transform-origin:0 0;-webkit-text-stroke:.14px">Тела</span>
<div style="left:30.5px;top:85.14499999999998px;width:6.5px;height:1px;background:#c4c4c4"></div>
<svg style="left:38px;top:80.64499999999998px" width="9" height="8" viewBox="0 0 9 8"><rect x=".5" y=".5" width="8" height="7" rx="1.2" fill="url(#fg2)" stroke="#a88420" stroke-width=".8"/><rect x="3" y="2.6" width="3" height="2.6" fill="#4a4a4a" opacity=".55"/></svg>
<span class="t" style="left:50px;top:81.12px;color:#111;font-size:8.00px;transform:scaleX(0.945);transform-origin:0 0;-webkit-text-stroke:.14px">Отверстия</span>
<div style="left:30.5px;top:96.38px;width:6.5px;height:1px;background:#c4c4c4"></div>
<svg style="left:38px;top:91.88px" width="9" height="8" viewBox="0 0 9 8"><rect x=".5" y=".5" width="8" height="7" rx="1.2" fill="url(#fg2)" stroke="#a88420" stroke-width=".8"/><rect x="3" y="2.6" width="3" height="2.6" fill="#4a4a4a" opacity=".55"/></svg>
<span class="t" style="left:50px;top:92.36px;color:#111;font-size:8.00px;transform:scaleX(0.945);transform-origin:0 0;-webkit-text-stroke:.14px">Узловые опоры</span>
<div style="left:30.5px;top:107.61500000000001px;width:6.5px;height:1px;background:#c4c4c4"></div>
<svg style="left:38px;top:103.11500000000001px" width="9" height="8" viewBox="0 0 9 8"><rect x=".5" y=".5" width="8" height="7" rx="1.2" fill="url(#fg2)" stroke="#a88420" stroke-width=".8"/><rect x="3" y="2.6" width="3" height="2.6" fill="#4a4a4a" opacity=".55"/></svg>
<span class="t" style="left:50px;top:103.59px;color:#111;font-size:8.00px;transform:scaleX(0.945);transform-origin:0 0;-webkit-text-stroke:.14px">Линейные опоры</span>
<div style="left:30.5px;top:118.85px;width:6.5px;height:1px;background:#c4c4c4"></div>
<svg style="left:38px;top:114.35px" width="9" height="8" viewBox="0 0 9 8"><rect x=".5" y=".5" width="8" height="7" rx="1.2" fill="url(#fg2)" stroke="#a88420" stroke-width=".8"/><rect x="3" y="2.6" width="3" height="2.6" fill="#4a4a4a" opacity=".55"/></svg>
<span class="t" style="left:50px;top:114.83px;color:#111;font-size:8.00px;transform:scaleX(0.945);transform-origin:0 0;-webkit-text-stroke:.14px">Опоры поверхностей</span>
<div style="left:30.5px;top:130.08499999999998px;width:6.5px;height:1px;background:#c4c4c4"></div>
<svg style="left:38px;top:125.58499999999998px" width="9" height="8" viewBox="0 0 9 8"><rect x=".5" y=".5" width="8" height="7" rx="1.2" fill="url(#fg2)" stroke="#a88420" stroke-width=".8"/><rect x="3" y="2.6" width="3" height="2.6" fill="#4a4a4a" opacity=".55"/></svg>
<span class="t" style="left:50px;top:126.06px;color:#111;font-size:8.00px;transform:scaleX(0.945);transform-origin:0 0;-webkit-text-stroke:.14px">Линейные шарниры</span>
<div style="left:30.5px;top:141.32px;width:6.5px;height:1px;background:#c4c4c4"></div>
<svg style="left:38px;top:136.82px" width="9" height="8" viewBox="0 0 9 8"><rect x=".5" y=".5" width="8" height="7" rx="1.2" fill="url(#fg2)" stroke="#a88420" stroke-width=".8"/><rect x="3" y="2.6" width="3" height="2.6" fill="#4a4a4a" opacity=".55"/></svg>
<span class="t" style="left:50px;top:137.30px;color:#111;font-size:8.00px;transform:scaleX(0.945);transform-origin:0 0;-webkit-text-stroke:.14px">Переменные толщины</span>
<div style="left:30.5px;top:152.555px;width:6.5px;height:1px;background:#c4c4c4"></div>
<svg style="left:38px;top:148.055px" width="9" height="8" viewBox="0 0 9 8"><rect x=".5" y=".5" width="8" height="7" rx="1.2" fill="url(#fg2)" stroke="#a88420" stroke-width=".8"/><rect x="3" y="2.6" width="3" height="2.6" fill="#4a4a4a" opacity=".55"/></svg>
<span class="t" style="left:50px;top:148.53px;color:#111;font-size:8.00px;transform:scaleX(0.945);transform-origin:0 0;-webkit-text-stroke:.14px">Ортотропные поверхности и м</span>
<div style="left:30.5px;top:163.79px;width:6.5px;height:1px;background:#c4c4c4"></div>
<svg style="left:27.5px;top:160.79px" width="7" height="7" viewBox="0 0 7 7"><rect x=".5" y=".5" width="6" height="6" rx="1" fill="#f4f5f8" stroke="#b0b6c0" stroke-width=".8"/><path d="M1.8 3.5H5.2" stroke="#5a5a5a" stroke-width=".8"/><path d="M3.5 1.8V5.2" stroke="#5a5a5a" stroke-width=".8"/></svg>
<svg style="left:38px;top:159.29px" width="9" height="8" viewBox="0 0 9 8"><rect x=".5" y=".5" width="8" height="7" rx="1.2" fill="url(#fg2)" stroke="#a88420" stroke-width=".8"/><rect x="3" y="2.6" width="3" height="2.6" fill="#4a4a4a" opacity=".55"/></svg>
<span class="t" style="left:50px;top:159.77px;color:#111;font-size:8.00px;transform:scaleX(0.945);transform-origin:0 0;-webkit-text-stroke:.14px">Сечения</span>
<div style="left:30.5px;top:175.02499999999998px;width:6.5px;height:1px;background:#c4c4c4"></div>
<svg style="left:27.5px;top:172.02499999999998px" width="7" height="7" viewBox="0 0 7 7"><rect x=".5" y=".5" width="6" height="6" rx="1" fill="#f4f5f8" stroke="#b0b6c0" stroke-width=".8"/><path d="M1.8 3.5H5.2" stroke="#5a5a5a" stroke-width=".8"/><path d="M3.5 1.8V5.2" stroke="#5a5a5a" stroke-width=".8"/></svg>
<svg style="left:38px;top:170.52499999999998px" width="9" height="8" viewBox="0 0 9 8"><rect x=".5" y=".5" width="8" height="7" rx="1.2" fill="url(#fg2)" stroke="#a88420" stroke-width=".8"/><rect x="3" y="2.6" width="3" height="2.6" fill="#4a4a4a" opacity=".55"/></svg>
<span class="t" style="left:50px;top:171.00px;color:#111;font-size:8.00px;transform:scaleX(0.945);transform-origin:0 0;-webkit-text-stroke:.14px">Шарниры стержней</span>
<div style="left:30.5px;top:186.26px;width:6.5px;height:1px;background:#c4c4c4"></div>
<svg style="left:38px;top:181.76px" width="9" height="8" viewBox="0 0 9 8"><rect x=".5" y=".5" width="8" height="7" rx="1.2" fill="url(#fg2)" stroke="#a88420" stroke-width=".8"/><rect x="3" y="2.6" width="3" height="2.6" fill="#4a4a4a" opacity=".55"/></svg>
<span class="t" style="left:50px;top:182.24px;color:#111;font-size:8.00px;transform:scaleX(0.945);transform-origin:0 0;-webkit-text-stroke:.14px">Эксцентриситеты стержня</span>
<div style="left:30.5px;top:197.495px;width:6.5px;height:1px;background:#c4c4c4"></div>
<svg style="left:38px;top:192.995px" width="9" height="8" viewBox="0 0 9 8"><rect x=".5" y=".5" width="8" height="7" rx="1.2" fill="url(#fg2)" stroke="#a88420" stroke-width=".8"/><rect x="3" y="2.6" width="3" height="2.6" fill="#4a4a4a" opacity=".55"/></svg>
<span class="t" style="left:50px;top:193.47px;color:#111;font-size:8.00px;transform:scaleX(0.945);transform-origin:0 0;-webkit-text-stroke:.14px">Дробление стержня</span>
<div style="left:30.5px;top:208.73000000000002px;width:6.5px;height:1px;background:#c4c4c4"></div>
<svg style="left:38px;top:204.23000000000002px" width="9" height="8" viewBox="0 0 9 8"><rect x=".5" y=".5" width="8" height="7" rx="1.2" fill="url(#fg2)" stroke="#a88420" stroke-width=".8"/><rect x="3" y="2.6" width="3" height="2.6" fill="#4a4a4a" opacity=".55"/></svg>
<span class="t" style="left:50px;top:204.71px;color:#111;font-size:8.00px;transform:scaleX(0.945);transform-origin:0 0;-webkit-text-stroke:.14px">Стержни</span>
<div style="left:30.5px;top:219.96499999999997px;width:6.5px;height:1px;background:#c4c4c4"></div>
<svg style="left:38px;top:215.46499999999997px" width="9" height="8" viewBox="0 0 9 8"><rect x=".5" y=".5" width="8" height="7" rx="1.2" fill="url(#fg2)" stroke="#a88420" stroke-width=".8"/><rect x="3" y="2.6" width="3" height="2.6" fill="#4a4a4a" opacity=".55"/></svg>
<span class="t" style="left:50px;top:215.94px;color:#111;font-size:8.00px;transform:scaleX(0.945);transform-origin:0 0;-webkit-text-stroke:.14px">Ребра</span>
<div style="left:30.5px;top:231.2px;width:6.5px;height:1px;background:#c4c4c4"></div>
<svg style="left:38px;top:226.7px" width="9" height="8" viewBox="0 0 9 8"><rect x=".5" y=".5" width="8" height="7" rx="1.2" fill="url(#fg2)" stroke="#a88420" stroke-width=".8"/><rect x="3" y="2.6" width="3" height="2.6" fill="#4a4a4a" opacity=".55"/></svg>
<span class="t" style="left:50px;top:227.18px;color:#111;font-size:8.00px;transform:scaleX(0.945);transform-origin:0 0;-webkit-text-stroke:.14px">Упругие основания стержней</span>
<div style="left:30.5px;top:242.435px;width:6.5px;height:1px;background:#c4c4c4"></div>
<svg style="left:38px;top:237.935px" width="9" height="8" viewBox="0 0 9 8"><rect x=".5" y=".5" width="8" height="7" rx="1.2" fill="url(#fg2)" stroke="#a88420" stroke-width=".8"/><rect x="3" y="2.6" width="3" height="2.6" fill="#4a4a4a" opacity=".55"/></svg>
<span class="t" style="left:50px;top:238.41px;color:#111;font-size:8.00px;transform:scaleX(0.945);transform-origin:0 0;-webkit-text-stroke:.14px">Нелинейности стержня</span>
<div style="left:30.5px;top:253.66999999999996px;width:6.5px;height:1px;background:#c4c4c4"></div>
<svg style="left:38px;top:249.16999999999996px" width="9" height="8" viewBox="0 0 9 8"><rect x=".5" y=".5" width="8" height="7" rx="1.2" fill="url(#fg2)" stroke="#a88420" stroke-width=".8"/><rect x="3" y="2.6" width="3" height="2.6" fill="#4a4a4a" opacity=".55"/></svg>
<span class="t" style="left:50px;top:249.65px;color:#111;font-size:8.00px;transform:scaleX(0.945);transform-origin:0 0;-webkit-text-stroke:.14px">Блоки стержней</span>
<div style="left:30.5px;top:264.905px;width:6.5px;height:1px;background:#c4c4c4"></div>
<svg style="left:38px;top:260.405px" width="9" height="8" viewBox="0 0 9 8"><rect x=".5" y=".5" width="8" height="7" rx="1.2" fill="url(#fg2)" stroke="#a88420" stroke-width=".8"/><rect x="3" y="2.6" width="3" height="2.6" fill="#4a4a4a" opacity=".55"/></svg>
<span class="t" style="left:50px;top:260.88px;color:#111;font-size:8.00px;transform:scaleX(0.945);transform-origin:0 0;-webkit-text-stroke:.14px">Пересечения поверхностей</span>
<div style="left:30.5px;top:276.14px;width:6.5px;height:1px;background:#c4c4c4"></div>
<svg style="left:38px;top:271.64px" width="9" height="8" viewBox="0 0 9 8"><rect x=".5" y=".5" width="8" height="7" rx="1.2" fill="url(#fg2)" stroke="#a88420" stroke-width=".8"/><rect x="3" y="2.6" width="3" height="2.6" fill="#4a4a4a" opacity=".55"/></svg>
<span class="t" style="left:50px;top:272.12px;color:#111;font-size:8.00px;transform:scaleX(0.945);transform-origin:0 0;-webkit-text-stroke:.14px">Уплотнения сетки КЭ</span>
<div style="left:30.5px;top:287.375px;width:6.5px;height:1px;background:#c4c4c4"></div>
<svg style="left:38px;top:282.875px" width="9" height="8" viewBox="0 0 9 8"><rect x=".5" y=".5" width="8" height="7" rx="1.2" fill="url(#fg2)" stroke="#a88420" stroke-width=".8"/><rect x="3" y="2.6" width="3" height="2.6" fill="#4a4a4a" opacity=".55"/></svg>
<span class="t" style="left:50px;top:283.35px;color:#111;font-size:8.00px;transform:scaleX(0.945);transform-origin:0 0;-webkit-text-stroke:.14px">Высвобождения узлов</span>
<div style="left:30.5px;top:298.61px;width:6.5px;height:1px;background:#c4c4c4"></div>
<svg style="left:38px;top:294.11px" width="9" height="8" viewBox="0 0 9 8"><rect x=".5" y=".5" width="8" height="7" rx="1.2" fill="url(#fg2)" stroke="#a88420" stroke-width=".8"/><rect x="3" y="2.6" width="3" height="2.6" fill="#4a4a4a" opacity=".55"/></svg>
<span class="t" style="left:50px;top:294.59px;color:#111;font-size:8.00px;transform:scaleX(0.945);transform-origin:0 0;-webkit-text-stroke:.14px">Типы высвобождений линий</span>
<div style="left:30.5px;top:309.84499999999997px;width:6.5px;height:1px;background:#c4c4c4"></div>
<svg style="left:38px;top:305.34499999999997px" width="9" height="8" viewBox="0 0 9 8"><rect x=".5" y=".5" width="8" height="7" rx="1.2" fill="url(#fg2)" stroke="#a88420" stroke-width=".8"/><rect x="3" y="2.6" width="3" height="2.6" fill="#4a4a4a" opacity=".55"/></svg>
<span class="t" style="left:50px;top:305.82px;color:#111;font-size:8.00px;transform:scaleX(0.945);transform-origin:0 0;-webkit-text-stroke:.14px">Высвобождения линий</span>
<div style="left:30.5px;top:321.08px;width:6.5px;height:1px;background:#c4c4c4"></div>
<svg style="left:38px;top:316.58px" width="9" height="8" viewBox="0 0 9 8"><rect x=".5" y=".5" width="8" height="7" rx="1.2" fill="url(#fg2)" stroke="#a88420" stroke-width=".8"/><rect x="3" y="2.6" width="3" height="2.6" fill="#4a4a4a" opacity=".55"/></svg>
<span class="t" style="left:50px;top:317.06px;color:#111;font-size:8.00px;transform:scaleX(0.945);transform-origin:0 0;-webkit-text-stroke:.14px">Типы высвобождений поверхн</span>
<div style="left:30.5px;top:332.315px;width:6.5px;height:1px;background:#c4c4c4"></div>
<svg style="left:38px;top:327.815px" width="9" height="8" viewBox="0 0 9 8"><rect x=".5" y=".5" width="8" height="7" rx="1.2" fill="url(#fg2)" stroke="#a88420" stroke-width=".8"/><rect x="3" y="2.6" width="3" height="2.6" fill="#4a4a4a" opacity=".55"/></svg>
<span class="t" style="left:50px;top:328.29px;color:#111;font-size:8.00px;transform:scaleX(0.945);transform-origin:0 0;-webkit-text-stroke:.14px">Высвобождения поверхностей</span>
<div style="left:30.5px;top:343.54999999999995px;width:6.5px;height:1px;background:#c4c4c4"></div>
<svg style="left:38px;top:339.04999999999995px" width="9" height="8" viewBox="0 0 9 8"><rect x=".5" y=".5" width="8" height="7" rx="1.2" fill="url(#fg2)" stroke="#a88420" stroke-width=".8"/><rect x="3" y="2.6" width="3" height="2.6" fill="#4a4a4a" opacity=".55"/></svg>
<span class="t" style="left:50px;top:339.53px;color:#111;font-size:8.00px;transform:scaleX(0.945);transform-origin:0 0;-webkit-text-stroke:.14px">Соединение двух стержней</span>
<div style="left:30.5px;top:354.78499999999997px;width:6.5px;height:1px;background:#c4c4c4"></div>
<svg style="left:38px;top:350.28499999999997px" width="9" height="8" viewBox="0 0 9 8"><rect x=".5" y=".5" width="8" height="7" rx="1.2" fill="url(#fg2)" stroke="#a88420" stroke-width=".8"/><rect x="3" y="2.6" width="3" height="2.6" fill="#4a4a4a" opacity=".55"/></svg>
<span class="t" style="left:50px;top:350.76px;color:#111;font-size:8.00px;transform:scaleX(0.945);transform-origin:0 0;-webkit-text-stroke:.14px">Узловые соединения</span>
<div style="left:30.5px;top:366.02px;width:6.5px;height:1px;background:#c4c4c4"></div>
<svg style="left:38px;top:361.52px" width="9" height="8" viewBox="0 0 9 8"><rect x=".5" y=".5" width="8" height="7" rx="1.2" fill="url(#fg2)" stroke="#a88420" stroke-width=".8"/><rect x="3" y="2.6" width="3" height="2.6" fill="#4a4a4a" opacity=".55"/></svg>
<span class="t" style="left:50px;top:362.00px;color:#111;font-size:8.00px;transform:scaleX(0.945);transform-origin:0 0;-webkit-text-stroke:.14px">Ограничения узла</span>
<div style="left:18.3px;top:377.255px;width:6.199999999999999px;height:1px;background:#c4c4c4"></div>
<svg style="left:15.3px;top:374.255px" width="7" height="7" viewBox="0 0 7 7"><rect x=".5" y=".5" width="6" height="6" rx="1" fill="#f4f5f8" stroke="#b0b6c0" stroke-width=".8"/><path d="M1.8 3.5H5.2" stroke="#5a5a5a" stroke-width=".8"/></svg>
<svg style="left:25.5px;top:372.255px" width="11" height="9" viewBox="0 0 11 9"><path d="M.5 1.5H4L5 .5H9V8.5H.5Z" fill="#b8901c"/><path d="M2 3.5H10.5L9 8.5H.5Z" fill="url(#fg)" stroke="#9a7410" stroke-width=".6"/></svg>
<span class="t" style="left:38.2px;top:373.23px;color:#111;font-size:8.00px;transform:scaleX(0.945);transform-origin:0 0;-webkit-text-stroke:.14px">Загружения и сочетания нагрузок</span>
<div style="left:30.5px;top:388.49px;width:6.5px;height:1px;background:#c4c4c4"></div>
<svg style="left:27.5px;top:385.49px" width="7" height="7" viewBox="0 0 7 7"><rect x=".5" y=".5" width="6" height="6" rx="1" fill="#f4f5f8" stroke="#b0b6c0" stroke-width=".8"/><path d="M1.8 3.5H5.2" stroke="#5a5a5a" stroke-width=".8"/><path d="M3.5 1.8V5.2" stroke="#5a5a5a" stroke-width=".8"/></svg>
<svg style="left:38px;top:383.49px" width="12" height="10" viewBox="0 0 12 10"><path d="M1 9H8M6 2V8" stroke="#333" stroke-width="1"/><path d="M7 3L10 5L7 7" fill="#3a6ab0"/></svg>
<span class="t" style="left:50px;top:384.47px;color:#111;font-size:8.00px;transform:scaleX(0.945);transform-origin:0 0;-webkit-text-stroke:.14px">Загружения</span>
<div style="left:30.5px;top:399.72499999999997px;width:6.5px;height:1px;background:#c4c4c4"></div>
<svg style="left:27.5px;top:396.72499999999997px" width="7" height="7" viewBox="0 0 7 7"><rect x=".5" y=".5" width="6" height="6" rx="1" fill="#f4f5f8" stroke="#b0b6c0" stroke-width=".8"/><path d="M1.8 3.5H5.2" stroke="#5a5a5a" stroke-width=".8"/><path d="M3.5 1.8V5.2" stroke="#5a5a5a" stroke-width=".8"/></svg>
<svg style="left:38px;top:394.72499999999997px" width="12" height="10" viewBox="0 0 12 10"><path d="M1 1H5V3M1 7H5V9H1Z" fill="none" stroke="#444" stroke-width=".8"/><rect x="6" y="3" width="4" height="4" fill="#40a040"/></svg>
<span class="t" style="left:50px;top:395.70px;color:#111;font-size:8.00px;transform:scaleX(0.945);transform-origin:0 0;-webkit-text-stroke:.14px">Сочетания нагрузок</span>
<div style="left:30.5px;top:410.96px;width:6.5px;height:1px;background:#c4c4c4"></div>
<svg style="left:27.5px;top:407.96px" width="7" height="7" viewBox="0 0 7 7"><rect x=".5" y=".5" width="6" height="6" rx="1" fill="#f4f5f8" stroke="#b0b6c0" stroke-width=".8"/><path d="M1.8 3.5H5.2" stroke="#5a5a5a" stroke-width=".8"/><path d="M3.5 1.8V5.2" stroke="#5a5a5a" stroke-width=".8"/></svg>
<svg style="left:38px;top:405.96px" width="12" height="10" viewBox="0 0 12 10"><path d="M1 1H5V3M1 7H5V9H1Z" fill="none" stroke="#444" stroke-width=".8"/><rect x="6" y="3" width="4" height="4" fill="#40a040"/></svg>
<span class="t" style="left:50px;top:406.94px;color:#111;font-size:8.00px;transform:scaleX(0.945);transform-origin:0 0;-webkit-text-stroke:.14px">Расчетные сочетания</span>
<div style="left:18.3px;top:422.195px;width:6.199999999999999px;height:1px;background:#c4c4c4"></div>
<svg style="left:15.3px;top:419.195px" width="7" height="7" viewBox="0 0 7 7"><rect x=".5" y=".5" width="6" height="6" rx="1" fill="#f4f5f8" stroke="#b0b6c0" stroke-width=".8"/><path d="M1.8 3.5H5.2" stroke="#5a5a5a" stroke-width=".8"/><path d="M3.5 1.8V5.2" stroke="#5a5a5a" stroke-width=".8"/></svg>
<svg style="left:25.5px;top:417.195px" width="11" height="9" viewBox="0 0 11 9"><path d="M.5 1.5H4L5 .5H9V8.5H.5Z" fill="#b8901c"/><path d="M2 3.5H10.5L9 8.5H.5Z" fill="url(#fg)" stroke="#9a7410" stroke-width=".6"/></svg>
<span class="t" style="left:38.2px;top:418.17px;color:#111;font-size:8.00px;transform:scaleX(0.945);transform-origin:0 0;-webkit-text-stroke:.14px">Нагрузки</span>
<div style="left:18.3px;top:433.42999999999995px;width:6.199999999999999px;height:1px;background:#c4c4c4"></div>
<svg style="left:25.5px;top:428.42999999999995px" width="11" height="9" viewBox="0 0 11 9"><path d="M.5 1.5H4L5 .5H9V8.5H.5Z" fill="#b8901c"/><path d="M2 3.5H10.5L9 8.5H.5Z" fill="url(#fg)" stroke="#9a7410" stroke-width=".6"/></svg>
<span class="t" style="left:38.2px;top:429.41px;color:#111;font-size:8.00px;transform:scaleX(0.945);transform-origin:0 0;-webkit-text-stroke:.14px">Результаты</span>
<div style="left:18.3px;top:444.66499999999996px;width:6.199999999999999px;height:1px;background:#c4c4c4"></div>
<svg style="left:25.5px;top:439.66499999999996px" width="11" height="9" viewBox="0 0 11 9"><path d="M.5 1.5H4L5 .5H9V8.5H.5Z" fill="#b8901c"/><path d="M2 3.5H10.5L9 8.5H.5Z" fill="url(#fg)" stroke="#9a7410" stroke-width=".6"/></svg>
<span class="t" style="left:38.2px;top:440.64px;color:#111;font-size:8.00px;transform:scaleX(0.945);transform-origin:0 0;-webkit-text-stroke:.14px">Разрезы</span>
<div style="left:18.3px;top:455.9px;width:6.199999999999999px;height:1px;background:#c4c4c4"></div>
<svg style="left:25.5px;top:450.9px" width="11" height="9" viewBox="0 0 11 9"><path d="M.5 1.5H4L5 .5H9V8.5H.5Z" fill="#b8901c"/><path d="M2 3.5H10.5L9 8.5H.5Z" fill="url(#fg)" stroke="#9a7410" stroke-width=".6"/></svg>
<span class="t" style="left:38.2px;top:451.88px;color:#111;font-size:8.00px;transform:scaleX(0.945);transform-origin:0 0;-webkit-text-stroke:.14px">Средние области</span>
<div style="left:18.3px;top:467.135px;width:6.199999999999999px;height:1px;background:#c4c4c4"></div>
<svg style="left:25.5px;top:462.135px" width="11" height="9" viewBox="0 0 11 9"><path d="M.5 1.5H4L5 .5H9V8.5H.5Z" fill="#b8901c"/><path d="M2 3.5H10.5L9 8.5H.5Z" fill="url(#fg)" stroke="#9a7410" stroke-width=".6"/></svg>
<span class="t" style="left:38.2px;top:463.11px;color:#111;font-size:8.00px;transform:scaleX(0.945);transform-origin:0 0;-webkit-text-stroke:.14px">Протоколы результатов</span>
<div style="left:18.3px;top:478.37px;width:6.199999999999999px;height:1px;background:#c4c4c4"></div>
<svg style="left:15.3px;top:475.37px" width="7" height="7" viewBox="0 0 7 7"><rect x=".5" y=".5" width="6" height="6" rx="1" fill="#f4f5f8" stroke="#b0b6c0" stroke-width=".8"/><path d="M1.8 3.5H5.2" stroke="#5a5a5a" stroke-width=".8"/><path d="M3.5 1.8V5.2" stroke="#5a5a5a" stroke-width=".8"/></svg>
<svg style="left:25.5px;top:473.37px" width="11" height="9" viewBox="0 0 11 9"><path d="M.5 1.5H4L5 .5H9V8.5H.5Z" fill="#b8901c"/><path d="M2 3.5H10.5L9 8.5H.5Z" fill="url(#fg)" stroke="#9a7410" stroke-width=".6"/></svg>
<span class="t" style="left:38.2px;top:474.35px;color:#111;font-size:8.00px;transform:scaleX(0.945);transform-origin:0 0;-webkit-text-stroke:.14px">Вспомогательные объекты</span>
<div style="left:18.3px;top:489.605px;width:6.199999999999999px;height:1px;background:#c4c4c4"></div>
<svg style="left:15.3px;top:486.605px" width="7" height="7" viewBox="0 0 7 7"><rect x=".5" y=".5" width="6" height="6" rx="1" fill="#f4f5f8" stroke="#b0b6c0" stroke-width=".8"/><path d="M1.8 3.5H5.2" stroke="#5a5a5a" stroke-width=".8"/></svg>
<svg style="left:25.5px;top:484.605px" width="11" height="9" viewBox="0 0 11 9"><path d="M.5 1.5H4L5 .5H9V8.5H.5Z" fill="#b8901c"/><path d="M2 3.5H10.5L9 8.5H.5Z" fill="url(#fg)" stroke="#9a7410" stroke-width=".6"/></svg>
<span class="t" style="left:38.2px;top:485.58px;color:#111;font-size:8.00px;transform:scaleX(0.945);transform-origin:0 0;-webkit-text-stroke:.14px">Дополнительные модули</span>
<div style="left:30.5px;top:500.8399999999999px;width:6.5px;height:1px;background:#c4c4c4"></div>
<svg style="left:37px;top:495.8399999999999px" width="11" height="10" viewBox="0 0 11 10"><rect x=".5" y=".5" width="9.5" height="9" fill="#b8c0e8" stroke="#6a70a8" stroke-width=".8"/><path d="M2.5 8L8 2" stroke="#2a3a7a" stroke-width="1.1"/><rect x="2" y="5" width="4" height="3" fill="#3a4a8a" opacity=".6"/></svg>
<span class="t" style="left:50px;top:496.82px;color:#111;font-size:8.00px;transform:scaleX(0.945);transform-origin:0 0;-webkit-text-stroke:.14px">RF-STEEL Surfaces - Основной</span>
<div style="left:30.5px;top:512.075px;width:6.5px;height:1px;background:#c4c4c4"></div>
<svg style="left:37px;top:507.07500000000005px" width="11" height="10" viewBox="0 0 11 10"><rect x=".5" y=".5" width="9.5" height="9" fill="#b8c0e8" stroke="#6a70a8" stroke-width=".8"/><path d="M2.5 8L8 2" stroke="#2a3a7a" stroke-width="1.1"/><rect x="2" y="5" width="4" height="3" fill="#3a4a8a" opacity=".6"/></svg>
<span class="t" style="left:50px;top:508.05px;color:#111;font-size:8.00px;transform:scaleX(0.945);transform-origin:0 0;-webkit-text-stroke:.14px">RF-STEEL Members - Общий ра</span>
<div style="left:30.5px;top:523.31px;width:6.5px;height:1px;background:#c4c4c4"></div>
<svg style="left:37px;top:518.31px" width="11" height="10" viewBox="0 0 11 10"><rect x=".5" y=".5" width="9.5" height="9" fill="#b8c0e8" stroke="#6a70a8" stroke-width=".8"/><path d="M2.5 8L8 2" stroke="#2a3a7a" stroke-width="1.1"/><rect x="2" y="5" width="4" height="3" fill="#3a4a8a" opacity=".6"/></svg>
<span class="t" style="left:50px;top:519.29px;color:#111;font-size:8.00px;transform:scaleX(0.945);transform-origin:0 0;-webkit-text-stroke:.14px">RF-STEEL EC3 - Расчет стальнь</span>
<div style="left:30.5px;top:534.545px;width:6.5px;height:1px;background:#c4c4c4"></div>
<svg style="left:37px;top:529.545px" width="11" height="10" viewBox="0 0 11 10"><rect x=".5" y=".5" width="9.5" height="9" fill="#b8c0e8" stroke="#6a70a8" stroke-width=".8"/><path d="M2.5 8L8 2" stroke="#2a3a7a" stroke-width="1.1"/><rect x="2" y="5" width="4" height="3" fill="#3a4a8a" opacity=".6"/></svg>
<span class="t" style="left:50px;top:530.52px;color:#111;font-size:8.00px;transform:scaleX(0.945);transform-origin:0 0;-webkit-text-stroke:.14px">RF-STEEL AISC - Расчет стальн</span>
<div style="left:30.5px;top:545.78px;width:6.5px;height:1px;background:#c4c4c4"></div>
<svg style="left:37px;top:540.78px" width="11" height="10" viewBox="0 0 11 10"><rect x=".5" y=".5" width="9.5" height="9" fill="#b8c0e8" stroke="#6a70a8" stroke-width=".8"/><path d="M2.5 8L8 2" stroke="#2a3a7a" stroke-width="1.1"/><rect x="2" y="5" width="4" height="3" fill="#3a4a8a" opacity=".6"/></svg>
<span class="t" style="left:50px;top:541.76px;color:#111;font-size:8.00px;transform:scaleX(0.945);transform-origin:0 0;-webkit-text-stroke:.14px">RF-STEEL IS - Расчет стальных</span>
<div style="left:30.5px;top:557.015px;width:6.5px;height:1px;background:#c4c4c4"></div>
<svg style="left:37px;top:552.015px" width="11" height="10" viewBox="0 0 11 10"><rect x=".5" y=".5" width="9.5" height="9" fill="#b8c0e8" stroke="#6a70a8" stroke-width=".8"/><path d="M2.5 8L8 2" stroke="#2a3a7a" stroke-width="1.1"/><rect x="2" y="5" width="4" height="3" fill="#3a4a8a" opacity=".6"/></svg>
<span class="t" style="left:50px;top:552.99px;color:#111;font-size:8.00px;transform:scaleX(0.945);transform-origin:0 0;-webkit-text-stroke:.14px">RF-STEEL SIA - Расчет стальны</span>
</div>
<div style="left:0px;top:647px;width:172px;height:14px;background:#d0d4dd"></div>
<div style="left:3px;top:648px;width:40px;height:12px;background:#f4f6f9;border:1px solid #dfe3ea;border-radius:1px"></div>
<svg style="left:5px;top:649.5px;" width="10" height="10" viewBox="0 0 10 10"><rect x="1" y="1" width="7" height="6" fill="#f0e070" stroke="#666" stroke-width=".6"/><circle cx="6" cy="6" r="2.5" fill="none" stroke="#2a4a8a" stroke-width="1"/></svg>
<span class="t" style="left:15px;top:650.48px;color:#3a3f50;font-size:8.00px;transform:scaleX(0.945);transform-origin:0 0;-webkit-text-stroke:.14px">Данные</span>
<svg style="left:48px;top:649.5px;" width="10" height="10" viewBox="0 0 10 10"><rect x="1" y="2" width="8" height="7" fill="#b8c8e0" stroke="#4a5a8a" stroke-width=".7"/><path d="M2 3L8 1" stroke="#333"/></svg>
<span class="t" style="left:59px;top:650.48px;color:#6a7080;font-size:8.00px;transform:scaleX(0.945);transform-origin:0 0;-webkit-text-stroke:.14px">Изобразить</span>
<svg style="left:106px;top:649.5px;" width="10" height="10" viewBox="0 0 10 10"><path d="M1 9L5 1L9 9Z" fill="#c8d0f0" stroke="#3a4aa0" stroke-width=".8"/></svg>
<span class="t" style="left:117px;top:650.48px;color:#6a7080;font-size:8.00px;transform:scaleX(0.945);transform-origin:0 0;-webkit-text-stroke:.14px">Виды</span>
<div style="left:170px;top:61px;width:4px;height:600px;background:#e2e5eb"></div>
<div style="left:174px;top:62px;width:1025px;height:420px;background:#000"></div>
<div style="left:1199px;top:61px;width:1px;height:421px;background:#f4f5f8"></div>
<svg style="left:200px;top:397px;" width="50" height="45" viewBox="0 0 50 45"><path d="M9 8H32" stroke="#c0392b" stroke-width="1.6"/><path d="M29 5.5L34 8L29 10.5Z" fill="#c0392b"/><path d="M9 8V32" stroke="#3fa34d" stroke-width="1.6"/><path d="M6.5 29L9 34L11.5 29Z" fill="#3fa34d"/><circle cx="9" cy="8" r="2" fill="#5cc8c8"/><text x="37.5" y="11" font-size="6" fill="#a04060" font-family="Liberation Sans">X</text><text x="7" y="42" font-size="6" fill="#889" font-family="Liberation Sans">Y</text></svg>
<div style="left:361px;top:98.5px;width:461px;height:375px;background:#0d0f13;border:1px solid #6a6e76;border-radius:5px 5px 2px 2px"></div>
<div style="left:362px;top:101px;width:62px;height:13px;background:#8c8e90;filter:blur(3px);border-radius:4px"></div>
<span class="t" style="left:365px;top:103.65px;color:#1e1e1e;font-size:8.27px;text-shadow:0 0 2px #b0b0b0;transform:scaleX(0.945);transform-origin:0 0;-webkit-text-stroke:.06px">Новое сечение</span>
<div style="left:789px;top:99px;width:31px;height:12.5px;background:linear-gradient(#2a2c32,#14161a);border:1px solid #55585e;border-top:none;border-radius:0 0 4px 4px"></div>
<svg style="left:801px;top:101.5px;" width="8" height="8" viewBox="0 0 8 8"><path d="M1 1L7 7M7 1L1 7" stroke="#fff" stroke-width="1.8"/></svg>
<div style="left:364px;top:116.5px;width:455px;height:4px;background:#d4d4d4;border-top:1px solid #888"></div>
<div style="left:364px;top:450px;width:455px;height:19.5px;background:#f0f0f0"></div>
<div class="btn" style="left:370.5px;top:452.5px;width:15.5px;height:10.5px"></div>
<div class="btn" style="left:392px;top:452.5px;width:16px;height:10.5px"></div>
<svg style="left:374px;top:453.5px;" width="9" height="9" viewBox="0 0 9 9"><circle cx="4.5" cy="4.5" r="3.5" fill="none" stroke="#555" stroke-width="1"/><text x="3" y="7" font-size="6" fill="#333" font-family="Liberation Sans">?</text></svg>
<svg style="left:395px;top:453.5px;" width="10" height="9" viewBox="0 0 10 9"><rect x="1" y="0" width="8" height="3" fill="#50a050"/><text x="0.5" y="8" font-size="5.5" fill="#223" font-family="Liberation Sans">0.00</text></svg>
<div class="btn" style="left:716.5px;top:452px;width:45px;height:11.5px"></div>
<div class="btn" style="left:768px;top:452px;width:45px;height:11.5px"></div>
<span class="t" style="left:734px;top:453.78px;color:#222;font-size:8.00px;transform:scaleX(0.945);transform-origin:0 0;-webkit-text-stroke:.06px">OK</span>
<span class="t" style="left:779px;top:453.78px;color:#222;font-size:8.00px;transform:scaleX(0.945);transform-origin:0 0;-webkit-text-stroke:.06px">Отмена</span>
<div style="left:356px;top:121px;width:471px;height:329px;background:linear-gradient(#b4cdea,#c6daf0 12%,#c9dcf1);border:1px solid #5c6670;border-radius:5px 5px 3px 3px;box-shadow:0 0 6px rgba(0,0,0,.6)"></div>
<div style="left:456px;top:125px;width:92px;height:3.5px;background:#7a98c0;filter:blur(1.2px);opacity:.8"></div>
<div style="left:618px;top:129.5px;width:7px;height:5px;background:#6a84a8;filter:blur(1.5px);border-radius:2px;opacity:0.75"></div>
<div style="left:640px;top:129.5px;width:7px;height:5px;background:#6a84a8;filter:blur(1.5px);border-radius:2px;opacity:0.75"></div>
<div style="left:659px;top:129.5px;width:7px;height:5px;background:#6a84a8;filter:blur(1.5px);border-radius:2px;opacity:0.75"></div>
<div style="left:678px;top:129.5px;width:7px;height:5px;background:#6a84a8;filter:blur(1.5px);border-radius:2px;opacity:0.75"></div>
<div style="left:697px;top:129.5px;width:7px;height:5px;background:#6a84a8;filter:blur(1.5px);border-radius:2px;opacity:0.75"></div>
<div style="left:716px;top:129.5px;width:7px;height:5px;background:#6a84a8;filter:blur(1.5px);border-radius:2px;opacity:0.75"></div>
<div style="left:735px;top:129.5px;width:7px;height:5px;background:#6a84a8;filter:blur(1.5px);border-radius:2px;opacity:0.75"></div>
<div style="left:756px;top:129.5px;width:7px;height:5px;background:#6a84a8;filter:blur(1.5px);border-radius:2px;opacity:0.4"></div>
<div style="left:778px;top:129.5px;width:7px;height:5px;background:#6a84a8;filter:blur(1.5px);border-radius:2px;opacity:0.4"></div>
<div style="left:357px;top:122px;width:140px;height:16px;background:radial-gradient(ellipse at 40% 50%,rgba(255,255,255,.6),rgba(255,255,255,0) 70%)"></div>
<span class="t" style="left:361px;top:126.16px;color:#1b1b1b;font-size:8.05px;text-shadow:0 0 2px #fff;transform:scaleX(0.945);transform-origin:0 0;-webkit-text-stroke:.06px">База данных сечений</span>
<div style="left:794.5px;top:121.5px;width:29px;height:11px;background:linear-gradient(#e8a090 0%,#d0604a 45%,#b83a28 55%,#d06040 100%);border:1px solid #6a3030;border-top:none;border-radius:0 0 4px 4px"></div>
<svg style="left:805px;top:123px;" width="8" height="8" viewBox="0 0 8 8"><path d="M1 1L7 7M7 1L1 7" stroke="#fff" stroke-width="1.9"/></svg>
<div style="left:360.5px;top:138.5px;width:463px;height:308px;background:#f3f3f3;border-top:1px solid #8a98a8"></div>
<div style="left:361px;top:420px;width:462px;height:1px;background:#d6d6d6;border-bottom:1px solid #fff;height:2px"></div>
<div style="left:361px;top:422px;width:462px;height:24.5px;background:#eeeeee"></div>
<div style="left:356.5px;top:446px;width:470px;height:4px;background:linear-gradient(#c6d8ee,#a8c0de)"></div>
<div class="btn" style="left:366px;top:428.5px;width:16px;height:12.5px"></div>
<div class="btn" style="left:387.3px;top:428.5px;width:15.5px;height:12.5px"></div>
<svg style="left:369px;top:430px;" width="10" height="10" viewBox="0 0 10 10"><circle cx="5" cy="5" r="3.8" fill="none" stroke="#555" stroke-width="1"/><text x="3.2" y="7.6" font-size="6.5" fill="#333" font-family="Liberation Sans">?</text></svg>
<svg style="left:389px;top:430px;" width="11" height="10" viewBox="0 0 11 10"><circle cx="4" cy="3" r="2.5" fill="#e8c840"/><path d="M2 9V5H9V9M5 5V9" stroke="#222" stroke-width="1.3" fill="none"/></svg>
<div class="btn" style="left:772px;top:429px;width:45.5px;height:12.5px"></div>
<span class="t" style="left:782.5px;top:431.28px;color:#222;font-size:8.00px;transform:scaleX(0.945);transform-origin:0 0;-webkit-text-stroke:.06px">Отмена</span>
<div style="left:366px;top:145px;width:108.5px;height:109.5px;background:#eef1f6;border-right:1px solid #c8d0dc;border-bottom:1px solid #c8d0dc"></div>
<div style="left:366px;top:145px;width:108.5px;height:8.5px;background:linear-gradient(90deg,#dfe8f5,#d9e4f3);border-top-right-radius:6px"></div>
<span class="t" style="left:367px;top:146.23px;color:#3d5580;font-size:7.51px;transform:scaleX(0.945);transform-origin:0 0;-webkit-text-stroke:.06px">Прокатные</span>
<div style="left:366px;top:262px;width:108.5px;height:109px;background:#eef1f6;border-right:1px solid #c8d0dc;border-bottom:1px solid #c8d0dc"></div>
<div style="left:366px;top:262px;width:108.5px;height:8.5px;background:linear-gradient(90deg,#dfe8f5,#d9e4f3);border-top-right-radius:6px"></div>
<span class="t" style="left:367px;top:263.23px;color:#3d5580;font-size:7.51px;transform:scaleX(0.945);transform-origin:0 0;-webkit-text-stroke:.06px">Сборные</span>
<div style="left:480.5px;top:145px;width:108.5px;height:226px;background:#eef1f6;border-right:1px solid #c8d0dc;border-bottom:1px solid #c8d0dc"></div>
<div style="left:480.5px;top:145px;width:108.5px;height:8.5px;background:linear-gradient(90deg,#dfe8f5,#d9e4f3);border-top-right-radius:6px"></div>
<span class="t" style="left:481.5px;top:146.23px;color:#3d5580;font-size:7.51px;transform:scaleX(0.945);transform-origin:0 0;-webkit-text-stroke:.06px">Параметрическ. - тонкостенные</span>
<div style="left:595px;top:145px;width:108.5px;height:226px;background:#eef1f6;border-right:1px solid #c8d0dc;border-bottom:1px solid #c8d0dc"></div>
<div style="left:595px;top:145px;width:108.5px;height:8.5px;background:linear-gradient(90deg,#dfe8f5,#d9e4f3);border-top-right-radius:6px"></div>
<span class="t" style="left:596px;top:146.23px;color:#3d5580;font-size:7.51px;transform:scaleX(0.945);transform-origin:0 0;-webkit-text-stroke:.06px">Параметрические - массивные</span>
<div style="left:709.5px;top:145px;width:108.5px;height:179px;background:#eef1f6;border-right:1px solid #c8d0dc;border-bottom:1px solid #c8d0dc"></div>
<div style="left:709.5px;top:145px;width:108.5px;height:8.5px;background:linear-gradient(90deg,#dfe8f5,#d9e4f3);border-top-right-radius:6px"></div>
<span class="t" style="left:710.5px;top:146.23px;color:#3d5580;font-size:7.51px;transform:scaleX(0.945);transform-origin:0 0;-webkit-text-stroke:.06px">Параметрические - деревянные</span>
<div style="left:709.5px;top:331.5px;width:108.5px;height:39.5px;background:#eef1f6;border-right:1px solid #c8d0dc;border-bottom:1px solid #c8d0dc"></div>
<div style="left:709.5px;top:331.5px;width:108.5px;height:8.5px;background:linear-gradient(90deg,#dfe8f5,#d9e4f3);border-top-right-radius:6px"></div>
<span class="t" style="left:710.5px;top:332.73px;color:#3d5580;font-size:7.51px;transform:scaleX(0.945);transform-origin:0 0;-webkit-text-stroke:.06px">Стандартные - древесина</span>
<div style="left:366px;top:377px;width:222.5px;height:39px;background:#eef1f6;border-right:1px solid #c8d0dc;border-bottom:1px solid #c8d0dc"></div>
<span class="t" style="left:367px;top:379.98px;color:#222;font-size:7.40px;transform:scaleX(0.945);transform-origin:0 0;-webkit-text-stroke:.06px">HSH</span>
<div style="left:595px;top:377.5px;width:108.5px;height:38.5px;background:#eef1f6;border-right:1px solid #c8d0dc;border-bottom:1px solid #c8d0dc"></div>
<div style="left:595px;top:377.5px;width:108.5px;height:8.5px;background:linear-gradient(90deg,#dfe8f5,#d9e4f3);border-top-right-radius:6px"></div>
<span class="t" style="left:596px;top:378.73px;color:#3d5580;font-size:7.51px;transform:scaleX(0.945);transform-origin:0 0;-webkit-text-stroke:.06px">Заданное пользователем</span>
<div style="left:709.5px;top:377.5px;width:108.5px;height:38.5px;background:#eef1f6;border-right:1px solid #c8d0dc;border-bottom:1px solid #c8d0dc"></div>
<div style="left:709.5px;top:377.5px;width:108.5px;height:8.5px;background:linear-gradient(90deg,#dfe8f5,#d9e4f3);border-top-right-radius:6px"></div>
<span class="t" style="left:710.5px;top:378.73px;color:#3d5580;font-size:7.51px;transform:scaleX(0.945);transform-origin:0 0;-webkit-text-stroke:.06px">Из программы для сечений</span>
<div class="btn" style="left:368px;top:158.0px;width:23px;height:19px;border-color:#9a9a9a"></div>
<svg style="left:372.90px;top:160.80px" width="13.2" height="13.2" viewBox="0 0 12 12"><path d="M3 2H9M6 2V10M3 10H9" fill="none" stroke="#2a2e80" stroke-width="1.20"/></svg>
<div class="btn" style="left:395px;top:158.0px;width:23px;height:19px;border-color:#9a9a9a"></div>
<svg style="left:399.90px;top:160.80px" width="13.2" height="13.2" viewBox="0 0 12 12"><path d="M8 2H4V10H8" fill="none" stroke="#2a2e80" stroke-width="1.20"/></svg>
<div class="btn" style="left:422px;top:158.0px;width:23px;height:19px;border-color:#9a9a9a"></div>
<svg style="left:426.90px;top:160.80px" width="13.2" height="13.2" viewBox="0 0 12 12"><path d="M2 2.5H10M6 2.5V10" fill="none" stroke="#2a2e80" stroke-width="1.28"/></svg>
<div class="btn" style="left:449px;top:158.0px;width:23px;height:19px;border-color:#9a9a9a"></div>
<svg style="left:453.90px;top:160.80px" width="13.2" height="13.2" viewBox="0 0 12 12"><path d="M3 2V10H10" fill="none" stroke="#2a2e80" stroke-width="1.20"/></svg>
<div class="btn" style="left:368px;top:181.375px;width:23px;height:19px;border-color:#9a9a9a"></div>
<svg style="left:372.90px;top:184.18px" width="13.2" height="13.2" viewBox="0 0 12 12"><path d="M4 2H8V10H4Z" fill="none" stroke="#2a2e80" stroke-width="1.12"/></svg>
<div class="btn" style="left:395px;top:181.375px;width:23px;height:19px;border-color:#9a9a9a"></div>
<svg style="left:399.90px;top:184.18px" width="13.2" height="13.2" viewBox="0 0 12 12"><path d="M6 2.5A3.5 3.5 0 1 1 5.99 2.5Z" fill="none" stroke="#2a2e80" stroke-width="0.88"/></svg>
<div class="btn" style="left:422px;top:181.375px;width:23px;height:19px;border-color:#9a9a9a"></div>
<svg style="left:426.90px;top:184.18px" width="13.2" height="13.2" viewBox="0 0 12 12"><path d="M6 2.5Q8.5 2.5 8.5 6Q8.5 9.5 6 9.5Q3.5 9.5 3.5 6Q3.5 2.5 6 2.5Z" fill="none" stroke="#2a2e80" stroke-width="0.96"/></svg>
<div class="btn" style="left:449px;top:181.375px;width:23px;height:19px;border-color:#9a9a9a"></div>
<svg style="left:453.90px;top:184.18px" width="13.2" height="13.2" viewBox="0 0 12 12"><path d="M3 2V10H10" fill="none" stroke="#2a2e80" stroke-width="1.20"/></svg>
<div class="btn" style="left:368px;top:204.75px;width:23px;height:19px;border-color:#9a9a9a"></div>
<svg style="left:372.90px;top:207.55px" width="13.2" height="13.2" viewBox="0 0 12 12"><path d="M3 2H6V10H9" fill="none" stroke="#2a2e80" stroke-width="1.20"/></svg>
<div class="btn" style="left:395px;top:204.75px;width:23px;height:19px;border-color:#9a9a9a"></div>
<svg style="left:399.90px;top:207.55px" width="13.2" height="13.2" viewBox="0 0 12 12"><path d="M3.5 5Q3.5 3 6 3Q8.5 3 8.5 5V6H6.8V8H9.5V9.5H2.5V8H5.2V6H3.5Z" fill="#2a2e80"/></svg>
<div class="btn" style="left:422px;top:204.75px;width:23px;height:19px;border-color:#9a9a9a"></div>
<svg style="left:426.90px;top:207.55px" width="13.2" height="13.2" viewBox="0 0 12 12"><path d="M2 6L4 8L6 5L8 8L10 6" fill="none" stroke="#2a2e80" stroke-width="1.04"/></svg>
<div class="btn" style="left:449px;top:204.75px;width:23px;height:19px;border-color:#9a9a9a"></div>
<svg style="left:453.90px;top:207.55px" width="13.2" height="13.2" viewBox="0 0 12 12"><path d="M5 3H7V5H5Z" fill="#2a2e80"/><path d="M3 8H9V9.5H3Z" fill="#2a2e80"/></svg>
<div class="btn" style="left:368px;top:274.875px;width:23px;height:19px;border-color:#9a9a9a"></div>
<svg style="left:372.90px;top:277.68px" width="13.2" height="13.2" viewBox="0 0 12 12"><path d="M2 2H10M4 2V10M8 2V10M2 10H10" fill="none" stroke="#2a2e80" stroke-width="1.28"/></svg>
<div class="btn" style="left:395px;top:274.875px;width:23px;height:19px;border-color:#9a9a9a"></div>
<svg style="left:399.90px;top:277.68px" width="13.2" height="13.2" viewBox="0 0 12 12"><path d="M2 2H10V3.5H7.5V8.5H10V10H2V8.5H4.5V3.5H2Z" fill="#2a2e80"/></svg>
<div class="btn" style="left:422px;top:274.875px;width:23px;height:19px;border-color:#9a9a9a"></div>
<svg style="left:426.90px;top:277.68px" width="13.2" height="13.2" viewBox="0 0 12 12"><path d="M2 2.5H10M2 2.5V4M10 2.5V4M6 2.5V10M4 10H8" fill="none" stroke="#2a2e80" stroke-width="1.28"/></svg>
<div class="btn" style="left:449px;top:274.875px;width:23px;height:19px;border-color:#9a9a9a"></div>
<svg style="left:453.90px;top:277.68px" width="13.2" height="13.2" viewBox="0 0 12 12"><path d="M2 4H10V5.5H7V8H5V5.5H2Z" fill="#2a2e80"/></svg>
<div class="btn" style="left:368px;top:298.25px;width:23px;height:19px;border-color:#9a9a9a"></div>
<svg style="left:372.90px;top:301.05px" width="13.2" height="13.2" viewBox="0 0 12 12"><path d="M2 3H10V5H7.5V10H4.5V5H2Z" fill="#2a2e80"/></svg>
<div class="btn" style="left:395px;top:298.25px;width:23px;height:19px;border-color:#9a9a9a"></div>
<svg style="left:399.90px;top:301.05px" width="13.2" height="13.2" viewBox="0 0 12 12"><path d="M3 2H7M5 2V10M3 10H7M9 2V10" fill="none" stroke="#2a2e80" stroke-width="1.20"/></svg>
<div class="btn" style="left:422px;top:298.25px;width:23px;height:19px;border-color:#9a9a9a"></div>
<svg style="left:426.90px;top:301.05px" width="13.2" height="13.2" viewBox="0 0 12 12"><path d="M3 2H9M6 2V10M4 8L6 10L8 8" fill="none" stroke="#2a2e80" stroke-width="1.04"/></svg>
<div class="btn" style="left:449px;top:298.25px;width:23px;height:19px;border-color:#9a9a9a"></div>
<svg style="left:453.90px;top:301.05px" width="13.2" height="13.2" viewBox="0 0 12 12"><path d="M3 2.5H9M6 2.5V10M4 10H8" fill="none" stroke="#2a2e80" stroke-width="1.12"/></svg>
<div class="btn" style="left:368px;top:321.625px;width:23px;height:19px;border-color:#9a9a9a"></div>
<svg style="left:372.90px;top:324.43px" width="13.2" height="13.2" viewBox="0 0 12 12"><path d="M4 2H8M6 2V10M4 10H8" fill="none" stroke="#2a2e80" stroke-width="1.20"/></svg>
<div class="btn" style="left:395px;top:321.625px;width:23px;height:19px;border-color:#9a9a9a"></div>
<svg style="left:399.90px;top:324.43px" width="13.2" height="13.2" viewBox="0 0 12 12"><path d="M3 4H9M6 2V10M4 10H8M4 4L6 2L8 4" fill="none" stroke="#2a2e80" stroke-width="1.12"/></svg>
<div class="btn" style="left:422px;top:321.625px;width:23px;height:19px;border-color:#9a9a9a"></div>
<svg style="left:426.90px;top:324.43px" width="13.2" height="13.2" viewBox="0 0 12 12"><path d="M6 2V4M6 6V10M5 10H7" fill="none" stroke="#2a2e80" stroke-width="1.04"/></svg>
<div class="btn" style="left:449px;top:321.625px;width:23px;height:19px;border-color:#9a9a9a"></div>
<svg style="left:453.90px;top:324.43px" width="13.2" height="13.2" viewBox="0 0 12 12"><path d="M1 2H5M3 2V10M1 10H5M7 4H11M9 4V8M7 8H11" fill="none" stroke="#2a2e80" stroke-width="0.88"/><path d="M9 6.5A1.3 1.3 0 1 1 8.99 6.5" fill="none" stroke="#2a2e80" stroke-width="0.72"/></svg>
<div class="btn" style="left:368px;top:345.0px;width:23px;height:19px;border-color:#9a9a9a"></div>
<svg style="left:372.90px;top:347.80px" width="13.2" height="13.2" viewBox="0 0 12 12"><path d="M2.5 5.5A1.5 1.5 0 1 1 2.49 5.5Z" fill="#2a2e80"/><path d="M7.5 5.5A1.5 1.5 0 1 1 7.49 5.5Z" fill="#2a2e80"/></svg>
<div class="btn" style="left:395px;top:345.0px;width:23px;height:19px;border-color:#9a9a9a"></div>
<svg style="left:399.90px;top:347.80px" width="13.2" height="13.2" viewBox="0 0 12 12"><path d="M3 2.5H9M6 2.5V10M5 9L6 10" fill="none" stroke="#2a2e80" stroke-width="1.12"/></svg>
<div class="btn" style="left:482.5px;top:158.0px;width:23px;height:19px;border-color:#9a9a9a"></div>
<svg style="left:487.40px;top:160.80px" width="13.2" height="13.2" viewBox="0 0 12 12"><path d="M3 2H9M6 2V10M3 10H9" fill="none" stroke="#2a2e80" stroke-width="1.28"/></svg>
<div class="btn" style="left:509.5px;top:158.0px;width:23px;height:19px;border-color:#9a9a9a"></div>
<svg style="left:514.40px;top:160.80px" width="13.2" height="13.2" viewBox="0 0 12 12"><path d="M4 2H8M6 2V10M4 10H8" fill="none" stroke="#2a2e80" stroke-width="1.28"/></svg>
<div class="btn" style="left:536.5px;top:158.0px;width:23px;height:19px;border-color:#9a9a9a"></div>
<svg style="left:541.40px;top:160.80px" width="13.2" height="13.2" viewBox="0 0 12 12"><path d="M3 2H8M6 2V10M4 10H9" fill="none" stroke="#2a2e80" stroke-width="1.28"/></svg>
<div class="btn" style="left:563.5px;top:158.0px;width:23px;height:19px;border-color:#9a9a9a"></div>
<svg style="left:568.40px;top:160.80px" width="13.2" height="13.2" viewBox="0 0 12 12"><path d="M2 2.5H10M6 2.5V10" fill="none" stroke="#2a2e80" stroke-width="1.28"/></svg>
<div class="btn" style="left:482.5px;top:181.375px;width:23px;height:19px;border-color:#9a9a9a"></div>
<svg style="left:487.40px;top:184.18px" width="13.2" height="13.2" viewBox="0 0 12 12"><path d="M3 10V2.5H9" fill="none" stroke="#2a2e80" stroke-width="1.20"/><path d="M3 2.5H9" fill="none" stroke="#2a2e80" stroke-width="1.20"/></svg>
<div class="btn" style="left:509.5px;top:181.375px;width:23px;height:19px;border-color:#9a9a9a"></div>
<svg style="left:514.40px;top:184.18px" width="13.2" height="13.2" viewBox="0 0 12 12"><path d="M4 3V9H10" fill="none" stroke="#2a2e80" stroke-width="1.12"/></svg>
<div class="btn" style="left:536.5px;top:181.375px;width:23px;height:19px;border-color:#9a9a9a"></div>
<svg style="left:541.40px;top:184.18px" width="13.2" height="13.2" viewBox="0 0 12 12"><path d="M4 2V10H9" fill="none" stroke="#2a2e80" stroke-width="1.20"/></svg>
<div class="btn" style="left:563.5px;top:181.375px;width:23px;height:19px;border-color:#9a9a9a"></div>
<svg style="left:568.40px;top:184.18px" width="13.2" height="13.2" viewBox="0 0 12 12"><path d="M4 2H8V10H4Z" fill="none" stroke="#2a2e80" stroke-width="1.12"/></svg>
<div class="btn" style="left:482.5px;top:204.75px;width:23px;height:19px;border-color:#9a9a9a"></div>
<svg style="left:487.40px;top:207.55px" width="13.2" height="13.2" viewBox="0 0 12 12"><path d="M8 2H3.5V10H8" fill="none" stroke="#2a2e80" stroke-width="1.20"/></svg>
<div class="btn" style="left:509.5px;top:204.75px;width:23px;height:19px;border-color:#9a9a9a"></div>
<svg style="left:514.40px;top:207.55px" width="13.2" height="13.2" viewBox="0 0 12 12"><path d="M3.5 2H8.5M6 2V10M3.5 10H8.5" fill="none" stroke="#2a2e80" stroke-width="1.28"/></svg>
<div class="btn" style="left:536.5px;top:204.75px;width:23px;height:19px;border-color:#9a9a9a"></div>
<svg style="left:541.40px;top:207.55px" width="13.2" height="13.2" viewBox="0 0 12 12"><path d="M2.5 2H9.5M6 2V10M4 10H8" fill="none" stroke="#2a2e80" stroke-width="1.20"/></svg>
<div class="btn" style="left:563.5px;top:204.75px;width:23px;height:19px;border-color:#9a9a9a"></div>
<svg style="left:568.40px;top:207.55px" width="13.2" height="13.2" viewBox="0 0 12 12"><path d="M3 2H9M6 2V10M4 10H8M3 2V3.5M9 2V3.5" fill="none" stroke="#2a2e80" stroke-width="1.20"/></svg>
<div class="btn" style="left:482.5px;top:228.125px;width:23px;height:19px;border-color:#9a9a9a"></div>
<svg style="left:487.40px;top:230.93px" width="13.2" height="13.2" viewBox="0 0 12 12"><path d="M6 2.5A3.5 3.5 0 1 1 5.99 2.5Z" fill="none" stroke="#2a2e80" stroke-width="0.88"/></svg>
<div class="btn" style="left:509.5px;top:228.125px;width:23px;height:19px;border-color:#9a9a9a"></div>
<svg style="left:514.40px;top:230.93px" width="13.2" height="13.2" viewBox="0 0 12 12"><path d="M2.5 3H9.5L6 9.5Z" fill="none" stroke="#2a2e80" stroke-width="0.96"/></svg>
<div class="btn" style="left:536.5px;top:228.125px;width:23px;height:19px;border-color:#9a9a9a"></div>
<svg style="left:541.40px;top:230.93px" width="13.2" height="13.2" viewBox="0 0 12 12"><path d="M3 2H9M3 10H9M4.5 2V10M7.5 2V10" fill="none" stroke="#2a2e80" stroke-width="1.20"/></svg>
<div class="btn" style="left:563.5px;top:228.125px;width:23px;height:19px;border-color:#9a9a9a"></div>
<svg style="left:568.40px;top:230.93px" width="13.2" height="13.2" viewBox="0 0 12 12"><path d="M3 2H9M3 10H9M4.5 2V10M7.5 2V10" fill="none" stroke="#2a2e80" stroke-width="1.12"/></svg>
<div class="btn" style="left:482.5px;top:251.5px;width:23px;height:19px;border-color:#9a9a9a"></div>
<svg style="left:487.40px;top:254.30px" width="13.2" height="13.2" viewBox="0 0 12 12"><path d="M2.5 2H9.5M2.5 10H9.5M4 2V10M8 2V10" fill="none" stroke="#2a2e80" stroke-width="1.20"/><path d="M4 5H8" fill="none" stroke="#2a2e80" stroke-width="0.80"/></svg>
<div class="btn" style="left:509.5px;top:251.5px;width:23px;height:19px;border-color:#9a9a9a"></div>
<svg style="left:514.40px;top:254.30px" width="13.2" height="13.2" viewBox="0 0 12 12"><path d="M3 2H9M4.5 2V10M7.5 2V10M3 10H5M7 10H9" fill="none" stroke="#2a2e80" stroke-width="1.20"/></svg>
<div class="btn" style="left:536.5px;top:251.5px;width:23px;height:19px;border-color:#9a9a9a"></div>
<svg style="left:541.40px;top:254.30px" width="13.2" height="13.2" viewBox="0 0 12 12"><path d="M2.5 2.5H9.5M4 2.5V10M8 2.5V10" fill="none" stroke="#2a2e80" stroke-width="1.20"/></svg>
<div class="btn" style="left:563.5px;top:251.5px;width:23px;height:19px;border-color:#9a9a9a"></div>
<svg style="left:568.40px;top:254.30px" width="13.2" height="13.2" viewBox="0 0 12 12"><path d="M2.5 2.5H9.5M4 2.5V10M8 2.5V10" fill="none" stroke="#2a2e80" stroke-width="1.20"/></svg>
<div class="btn" style="left:482.5px;top:274.875px;width:23px;height:19px;border-color:#9a9a9a"></div>
<svg style="left:487.40px;top:277.68px" width="13.2" height="13.2" viewBox="0 0 12 12"><path d="M3 3H9M6 3V10M3 6H9M4 10H8" fill="none" stroke="#2a2e80" stroke-width="1.12"/></svg>
<div class="btn" style="left:509.5px;top:274.875px;width:23px;height:19px;border-color:#9a9a9a"></div>
<svg style="left:514.40px;top:277.68px" width="13.2" height="13.2" viewBox="0 0 12 12"><path d="M3 6H9M6 2V10M4 2H8M4 10H8" fill="none" stroke="#2a2e80" stroke-width="1.04"/></svg>
<div class="btn" style="left:536.5px;top:274.875px;width:23px;height:19px;border-color:#9a9a9a"></div>
<svg style="left:541.40px;top:277.68px" width="13.2" height="13.2" viewBox="0 0 12 12"><path d="M2.5 6H9.5M6 2.5V9.5" fill="none" stroke="#2a2e80" stroke-width="1.12"/></svg>
<div class="btn" style="left:563.5px;top:274.875px;width:23px;height:19px;border-color:#9a9a9a"></div>
<svg style="left:568.40px;top:277.68px" width="13.2" height="13.2" viewBox="0 0 12 12"><path d="M6 4.5A1.5 1.5 0 1 1 5.99 4.5Z" fill="#2a2e80"/></svg>
<div class="btn" style="left:482.5px;top:298.25px;width:23px;height:19px;border-color:#9a9a9a"></div>
<svg style="left:487.40px;top:301.05px" width="13.2" height="13.2" viewBox="0 0 12 12"><path d="M3 6H9" fill="none" stroke="#2a2e80" stroke-width="1.44"/></svg>
<div class="btn" style="left:509.5px;top:298.25px;width:23px;height:19px;border-color:#9a9a9a"></div>
<svg style="left:514.40px;top:301.05px" width="13.2" height="13.2" viewBox="0 0 12 12"><path d="M3 4H9M6 2V10M4 10H8M4 4L6 2L8 4" fill="none" stroke="#2a2e80" stroke-width="1.12"/></svg>
<div class="btn" style="left:536.5px;top:298.25px;width:23px;height:19px;border-color:#9a9a9a"></div>
<svg style="left:541.40px;top:301.05px" width="13.2" height="13.2" viewBox="0 0 12 12"><path d="M3 2.5H5.5V9.5H9" fill="none" stroke="#2a2e80" stroke-width="1.28"/></svg>
<div class="btn" style="left:563.5px;top:298.25px;width:23px;height:19px;border-color:#9a9a9a"></div>
<svg style="left:568.40px;top:301.05px" width="13.2" height="13.2" viewBox="0 0 12 12"><path d="M3 10H6V2.5H9" fill="none" stroke="#2a2e80" stroke-width="1.28"/></svg>
<div class="btn" style="left:482.5px;top:321.625px;width:23px;height:19px;border-color:#9a9a9a"></div>
<svg style="left:487.40px;top:324.43px" width="13.2" height="13.2" viewBox="0 0 12 12"><path d="M3.5 2.5H8.5M6 2.5V10M4 10H8" fill="none" stroke="#2a2e80" stroke-width="1.28"/></svg>
<div class="btn" style="left:509.5px;top:321.625px;width:23px;height:19px;border-color:#9a9a9a"></div>
<svg style="left:514.40px;top:324.43px" width="13.2" height="13.2" viewBox="0 0 12 12"><path d="M8 2.5H4V10H8V8" fill="none" stroke="#2a2e80" stroke-width="1.12"/></svg>
<div class="btn" style="left:536.5px;top:321.625px;width:23px;height:19px;border-color:#9a9a9a"></div>
<svg style="left:541.40px;top:324.43px" width="13.2" height="13.2" viewBox="0 0 12 12"><path d="M9 3H5V6H3V10H8" fill="none" stroke="#2a2e80" stroke-width="1.12"/></svg>
<div class="btn" style="left:563.5px;top:321.625px;width:23px;height:19px;border-color:#9a9a9a"></div>
<svg style="left:568.40px;top:324.43px" width="13.2" height="13.2" viewBox="0 0 12 12"><path d="M8 2.5H5V9H9M3 7V9" fill="none" stroke="#2a2e80" stroke-width="1.12"/></svg>
<div class="btn" style="left:482.5px;top:345.0px;width:23px;height:19px;border-color:#9a9a9a"></div>
<svg style="left:487.40px;top:347.80px" width="13.2" height="13.2" viewBox="0 0 12 12"><path d="M9 2.5H3L6.5 6L3 9.5H9" fill="none" stroke="#2a2e80" stroke-width="1.04"/></svg>
<div class="btn" style="left:509.5px;top:345.0px;width:23px;height:19px;border-color:#9a9a9a"></div>
<svg style="left:514.40px;top:347.80px" width="13.2" height="13.2" viewBox="0 0 12 12"><path d="M6 2.5Q8 2.5 8 6Q8 9.5 6 9.5Q4 9.5 4 6Q4 2.5 6 2.5Z" fill="none" stroke="#2a2e80" stroke-width="0.88"/></svg>
<div class="btn" style="left:536.5px;top:345.0px;width:23px;height:19px;border-color:#9a9a9a"></div>
<svg style="left:541.40px;top:347.80px" width="13.2" height="13.2" viewBox="0 0 12 12"><path d="M2.5 3H9.5L8 9.5H4Z" fill="none" stroke="#2a2e80" stroke-width="1.04"/></svg>
<div class="btn" style="left:563.5px;top:345.0px;width:23px;height:19px;border-color:#9a9a9a"></div>
<svg style="left:568.40px;top:347.80px" width="13.2" height="13.2" viewBox="0 0 12 12"><path d="M4 2.5H8L10 6L8 9.5H4L2 6Z" fill="none" stroke="#2a2e80" stroke-width="0.96"/></svg>
<div class="btn" style="left:597px;top:158.0px;width:23px;height:19px;border-color:#9a9a9a"></div>
<svg style="left:601.90px;top:160.80px" width="13.2" height="13.2" viewBox="0 0 12 12"><path d="M4.5 2H7.5V10H4.5Z" fill="#8a8a8a" stroke="#6a6a6a" stroke-width=".6"/></svg>
<div class="btn" style="left:624px;top:158.0px;width:23px;height:19px;border-color:#9a9a9a"></div>
<svg style="left:628.90px;top:160.80px" width="13.2" height="13.2" viewBox="0 0 12 12"><path d="M2 2H10V5H7.5V10H4.5V5H2Z" fill="#8a8a8a" stroke="#6a6a6a" stroke-width=".6"/></svg>
<div class="btn" style="left:651px;top:158.0px;width:23px;height:19px;border-color:#9a9a9a"></div>
<svg style="left:655.90px;top:160.80px" width="13.2" height="13.2" viewBox="0 0 12 12"><path d="M5 2H7V7H10V10H2V7H5Z" fill="#8a8a8a" stroke="#6a6a6a" stroke-width=".6"/></svg>
<div class="btn" style="left:678px;top:158.0px;width:23px;height:19px;border-color:#9a9a9a"></div>
<svg style="left:682.90px;top:160.80px" width="13.2" height="13.2" viewBox="0 0 12 12"><path d="M2.5 2H9.5V4L7.5 6L9.5 8V10H2.5V8L4.5 6L2.5 4Z" fill="#8a8a8a" stroke="#6a6a6a" stroke-width=".6"/></svg>
<div class="btn" style="left:597px;top:181.375px;width:23px;height:19px;border-color:#9a9a9a"></div>
<svg style="left:601.90px;top:184.18px" width="13.2" height="13.2" viewBox="0 0 12 12"><path d="M3 2H9V4L7 6L9 8V10H3V8L5 6L3 4Z" fill="#8a8a8a" stroke="#6a6a6a" stroke-width=".6"/></svg>
<div class="btn" style="left:624px;top:181.375px;width:23px;height:19px;border-color:#9a9a9a"></div>
<svg style="left:628.90px;top:184.18px" width="13.2" height="13.2" viewBox="0 0 12 12"><path d="M6 2.5A3.5 3.5 0 1 1 5.99 2.5Z" fill="#8a8a8a" stroke="#6a6a6a" stroke-width=".6"/></svg>
<div class="btn" style="left:651px;top:181.375px;width:23px;height:19px;border-color:#9a9a9a"></div>
<svg style="left:655.90px;top:184.18px" width="13.2" height="13.2" viewBox="0 0 12 12"><path d="M6 2A4 4 0 1 1 5.99 2ZM6 4.5A1.5 1.5 0 1 0 6.01 4.5Z" fill="#8a8a8a" stroke="#6a6a6a" stroke-width=".6"/></svg>
<div class="btn" style="left:678px;top:181.375px;width:23px;height:19px;border-color:#9a9a9a"></div>
<svg style="left:682.90px;top:184.18px" width="13.2" height="13.2" viewBox="0 0 12 12"><path d="M3.5 2H8.5V10H3.5ZM5 4V8H7V4Z" fill="#8a8a8a" stroke="#6a6a6a" stroke-width=".6"/></svg>
<div class="btn" style="left:597px;top:204.75px;width:23px;height:19px;border-color:#9a9a9a"></div>
<svg style="left:601.90px;top:207.55px" width="13.2" height="13.2" viewBox="0 0 12 12"><path d="M3 2H9L7.5 10H4.5Z" fill="#8a8a8a" stroke="#6a6a6a" stroke-width=".6"/></svg>
<div class="btn" style="left:624px;top:204.75px;width:23px;height:19px;border-color:#9a9a9a"></div>
<svg style="left:628.90px;top:207.55px" width="13.2" height="13.2" viewBox="0 0 12 12"><path d="M2.5 3H4.5V7H7.5V3H9.5V9H2.5Z" fill="#8a8a8a" stroke="#6a6a6a" stroke-width=".6"/></svg>
<div class="btn" style="left:651px;top:204.75px;width:23px;height:19px;border-color:#9a9a9a"></div>
<svg style="left:655.90px;top:207.55px" width="13.2" height="13.2" viewBox="0 0 12 12"><path d="M3 2H9V3.5L7 5V7L9 8.5V10H3V8.5L5 7V5L3 3.5Z" fill="#8a8a8a" stroke="#6a6a6a" stroke-width=".6"/></svg>
<div class="btn" style="left:678px;top:204.75px;width:23px;height:19px;border-color:#9a9a9a"></div>
<svg style="left:682.90px;top:207.55px" width="13.2" height="13.2" viewBox="0 0 12 12"><path d="M4 2H8L7 5V10H5V5Z" fill="#8a8a8a" stroke="#6a6a6a" stroke-width=".6"/></svg>
<div class="btn" style="left:597px;top:228.125px;width:23px;height:19px;border-color:#9a9a9a"></div>
<svg style="left:601.90px;top:230.93px" width="13.2" height="13.2" viewBox="0 0 12 12"><path d="M2 2H10V5H6.5V10H3.5V5H2Z" fill="#8a8a8a" stroke="#6a6a6a" stroke-width=".6"/></svg>
<div class="btn" style="left:624px;top:228.125px;width:23px;height:19px;border-color:#9a9a9a"></div>
<svg style="left:628.90px;top:230.93px" width="13.2" height="13.2" viewBox="0 0 12 12"><path d="M4 3H6.5V7H10V10H2V7H4Z" fill="#8a8a8a" stroke="#6a6a6a" stroke-width=".6"/></svg>
<div class="btn" style="left:651px;top:228.125px;width:23px;height:19px;border-color:#9a9a9a"></div>
<svg style="left:655.90px;top:230.93px" width="13.2" height="13.2" viewBox="0 0 12 12"><path d="M2 3H6V6H10V9H6V6H2Z" fill="#8a8a8a" stroke="#6a6a6a" stroke-width=".6"/></svg>
<div class="btn" style="left:678px;top:228.125px;width:23px;height:19px;border-color:#9a9a9a"></div>
<svg style="left:682.90px;top:230.93px" width="13.2" height="13.2" viewBox="0 0 12 12"><path d="M2 7H6V3H10V6H6V9H2Z" fill="#8a8a8a" stroke="#6a6a6a" stroke-width=".6"/></svg>
<div class="btn" style="left:597px;top:251.5px;width:23px;height:19px;border-color:#9a9a9a"></div>
<svg style="left:601.90px;top:254.30px" width="13.2" height="13.2" viewBox="0 0 12 12"><path d="M2 3H10V6H8.5V10H6.5V6H5.5V10H3.5V6H2Z" fill="#8a8a8a" stroke="#6a6a6a" stroke-width=".6"/></svg>
<div class="btn" style="left:624px;top:251.5px;width:23px;height:19px;border-color:#9a9a9a"></div>
<svg style="left:628.90px;top:254.30px" width="13.2" height="13.2" viewBox="0 0 12 12"><path d="M2 3H10V6H8.5V10H6.5V6H5.5V10H3.5V6H2Z" fill="#8a8a8a" stroke="#6a6a6a" stroke-width=".6"/></svg>
<div class="btn" style="left:651px;top:251.5px;width:23px;height:19px;border-color:#9a9a9a"></div>
<svg style="left:655.90px;top:254.30px" width="13.2" height="13.2" viewBox="0 0 12 12"><path d="M2 3H10V6H8.5V10H6.5V6H5.5V10H3.5V6H2Z" fill="#8a8a8a" stroke="#6a6a6a" stroke-width=".6"/></svg>
<div class="btn" style="left:678px;top:251.5px;width:23px;height:19px;border-color:#9a9a9a"></div>
<svg style="left:682.90px;top:254.30px" width="13.2" height="13.2" viewBox="0 0 12 12"><path d="M2 4H10Q11 6 10 8H2Q1 6 2 4Z" fill="#8a8a8a" stroke="#6a6a6a" stroke-width=".6"/></svg>
<div class="btn" style="left:597px;top:274.875px;width:23px;height:19px;border-color:#9a9a9a"></div>
<svg style="left:601.90px;top:277.68px" width="13.2" height="13.2" viewBox="0 0 12 12"><path d="M2 3H10V6H7V10H5V6H2Z" fill="#8a8a8a" stroke="#6a6a6a" stroke-width=".6"/></svg>
<div class="btn" style="left:624px;top:274.875px;width:23px;height:19px;border-color:#9a9a9a"></div>
<svg style="left:628.90px;top:277.68px" width="13.2" height="13.2" viewBox="0 0 12 12"><path d="M2 3H10V6H7V10H5V6H2Z" fill="#8a8a8a" stroke="#6a6a6a" stroke-width=".6"/></svg>
<div class="btn" style="left:651px;top:274.875px;width:23px;height:19px;border-color:#9a9a9a"></div>
<svg style="left:655.90px;top:277.68px" width="13.2" height="13.2" viewBox="0 0 12 12"><path d="M4 2H8V10H4ZM5 4V8H7V4Z" fill="#8a8a8a" stroke="#6a6a6a" stroke-width=".6"/></svg>
<div class="btn" style="left:678px;top:274.875px;width:23px;height:19px;border-color:#9a9a9a"></div>
<svg style="left:682.90px;top:277.68px" width="13.2" height="13.2" viewBox="0 0 12 12"><path d="M2.5 2H9.5V4L7.5 6L9.5 8V10H2.5V8L4.5 6L2.5 4Z" fill="#8a8a8a" stroke="#6a6a6a" stroke-width=".6"/></svg>
<div class="btn" style="left:597px;top:298.25px;width:23px;height:19px;border-color:#9a9a9a"></div>
<svg style="left:601.90px;top:301.05px" width="13.2" height="13.2" viewBox="0 0 12 12"><path d="M3 2H5V10H3ZM7 2H9V10H7Z" fill="#8a8a8a" stroke="#6a6a6a" stroke-width=".6"/></svg>
<div class="btn" style="left:624px;top:298.25px;width:23px;height:19px;border-color:#9a9a9a"></div>
<svg style="left:628.90px;top:301.05px" width="13.2" height="13.2" viewBox="0 0 12 12"><path d="M2 2H4V10H2ZM5 2H7V10H5ZM8 2H10V10H8Z" fill="#8a8a8a" stroke="#6a6a6a" stroke-width=".6"/></svg>
<div class="btn" style="left:651px;top:298.25px;width:23px;height:19px;border-color:#9a9a9a"></div>
<svg style="left:655.90px;top:301.05px" width="13.2" height="13.2" viewBox="0 0 12 12"><path d="M2.5 2H9.5V4L7.5 6L9.5 8V10H2.5V8L4.5 6L2.5 4Z" fill="#8a8a8a" stroke="#6a6a6a" stroke-width=".6"/></svg>
<div class="btn" style="left:711.5px;top:158.0px;width:23px;height:19px;border-color:#9a9a9a"></div>
<svg style="left:716.40px;top:160.80px" width="13.2" height="13.2" viewBox="0 0 12 12"><path d="M4.5 2H7.5V10H4.5Z" fill="#eaa64a" stroke="#b0822e" stroke-width=".6"/></svg>
<div class="btn" style="left:738.5px;top:158.0px;width:23px;height:19px;border-color:#9a9a9a"></div>
<svg style="left:743.40px;top:160.80px" width="13.2" height="13.2" viewBox="0 0 12 12"><path d="M6 2A4 4 0 1 1 5.99 2Z" fill="#eaa64a" stroke="#b0822e" stroke-width=".6"/></svg>
<div class="btn" style="left:765.5px;top:158.0px;width:23px;height:19px;border-color:#9a9a9a"></div>
<svg style="left:770.40px;top:160.80px" width="13.2" height="13.2" viewBox="0 0 12 12"><path d="M6 3A4 3 0 1 1 5.99 3Z" fill="#eaa64a" stroke="#b0822e" stroke-width=".6"/><path d="M6 3V9" fill="none" stroke="#b0822e" stroke-width="0.64"/></svg>
<div class="btn" style="left:792.5px;top:158.0px;width:23px;height:19px;border-color:#9a9a9a"></div>
<svg style="left:797.40px;top:160.80px" width="13.2" height="13.2" viewBox="0 0 12 12"><path d="M3 2H5.5V10H3ZM6.5 2H9V10H6.5Z" fill="#eaa64a" stroke="#b0822e" stroke-width=".6"/></svg>
<div class="btn" style="left:711.5px;top:181.375px;width:23px;height:19px;border-color:#9a9a9a"></div>
<svg style="left:716.40px;top:184.18px" width="13.2" height="13.2" viewBox="0 0 12 12"><path d="M2.5 2H9.5V10H2.5Z" fill="#eaa64a" stroke="#b0822e" stroke-width=".6"/><path d="M4.5 2V10M7.5 2V10" fill="none" stroke="#b0822e" stroke-width="0.48"/></svg>
<div class="btn" style="left:738.5px;top:181.375px;width:23px;height:19px;border-color:#9a9a9a"></div>
<svg style="left:743.40px;top:184.18px" width="13.2" height="13.2" viewBox="0 0 12 12"><path d="M2 2H10V10H2Z" fill="#eaa64a" stroke="#b0822e" stroke-width=".6"/><path d="M4 2V10M6 2V10M8 2V10" fill="none" stroke="#a87020" stroke-width="0.64"/></svg>
<div class="btn" style="left:765.5px;top:181.375px;width:23px;height:19px;border-color:#9a9a9a"></div>
<svg style="left:770.40px;top:184.18px" width="13.2" height="13.2" viewBox="0 0 12 12"><path d="M4 4H5V2H7V4H8V8H7V10H5V8H4Z" fill="#eaa64a" stroke="#b0822e" stroke-width=".6"/></svg>
<div class="btn" style="left:792.5px;top:181.375px;width:23px;height:19px;border-color:#9a9a9a"></div>
<svg style="left:797.40px;top:184.18px" width="13.2" height="13.2" viewBox="0 0 12 12"><path d="M3 3Q6 1 9 3V9Q6 11 3 9Z" fill="#eaa64a" stroke="#b0822e" stroke-width=".6"/><path d="M6 2V10M3 6H9" fill="none" stroke="#b0822e" stroke-width="0.56"/></svg>
<div class="btn" style="left:711.5px;top:204.75px;width:23px;height:19px;border-color:#9a9a9a"></div>
<svg style="left:716.40px;top:207.55px" width="13.2" height="13.2" viewBox="0 0 12 12"><path d="M2 2H10V5H7.5V10H4.5V5H2Z" fill="#eaa64a" stroke="#b0822e" stroke-width=".6"/></svg>
<div class="btn" style="left:738.5px;top:204.75px;width:23px;height:19px;border-color:#9a9a9a"></div>
<svg style="left:743.40px;top:207.55px" width="13.2" height="13.2" viewBox="0 0 12 12"><path d="M3 2H9V5H7.5V10H4.5V5H3Z" fill="#eaa64a" stroke="#b0822e" stroke-width=".6"/></svg>
<div class="btn" style="left:765.5px;top:204.75px;width:23px;height:19px;border-color:#9a9a9a"></div>
<svg style="left:770.40px;top:207.55px" width="13.2" height="13.2" viewBox="0 0 12 12"><path d="M2 2.5H10V10H7.5V5H4.5V10H2Z" fill="#eaa64a" stroke="#b0822e" stroke-width=".6"/></svg>
<div class="btn" style="left:792.5px;top:204.75px;width:23px;height:19px;border-color:#9a9a9a"></div>
<svg style="left:797.40px;top:207.55px" width="13.2" height="13.2" viewBox="0 0 12 12"><path d="M2 2.5H10V10H7.5V5H4.5V10H2Z" fill="#eaa64a" stroke="#b0822e" stroke-width=".6"/></svg>
<div class="btn" style="left:711.5px;top:228.125px;width:23px;height:19px;border-color:#9a9a9a"></div>
<svg style="left:716.40px;top:230.93px" width="13.2" height="13.2" viewBox="0 0 12 12"><path d="M2 2H10V4.5H7.5V7.5H10V10H2V7.5H4.5V4.5H2Z" fill="#eaa64a" stroke="#b0822e" stroke-width=".6"/></svg>
<div class="btn" style="left:738.5px;top:228.125px;width:23px;height:19px;border-color:#9a9a9a"></div>
<svg style="left:743.40px;top:230.93px" width="13.2" height="13.2" viewBox="0 0 12 12"><path d="M3 2H9V4.5H7V7.5H9V10H3V7.5H5V4.5H3Z" fill="#eaa64a" stroke="#b0822e" stroke-width=".6"/></svg>
<div class="btn" style="left:765.5px;top:228.125px;width:23px;height:19px;border-color:#9a9a9a"></div>
<svg style="left:770.40px;top:230.93px" width="13.2" height="13.2" viewBox="0 0 12 12"><path d="M2 2H10V4.5H7.5V7.5H10V10H2V7.5H4.5V4.5H2Z" fill="#eaa64a" stroke="#b0822e" stroke-width=".6"/><path d="M6 4.5V7.5" fill="none" stroke="#b0822e" stroke-width="0.56"/></svg>
<div class="btn" style="left:792.5px;top:228.125px;width:23px;height:19px;border-color:#9a9a9a"></div>
<svg style="left:797.40px;top:230.93px" width="13.2" height="13.2" viewBox="0 0 12 12"><path d="M2 2H10V4.5H7.5V7.5H10V10H2V7.5H4.5V4.5H2Z" fill="#eaa64a" stroke="#b0822e" stroke-width=".6"/><path d="M6 2V10" fill="none" stroke="#b0822e" stroke-width="0.56"/></svg>
<div class="btn" style="left:711.5px;top:251.5px;width:23px;height:19px;border-color:#9a9a9a"></div>
<svg style="left:716.40px;top:254.30px" width="13.2" height="13.2" viewBox="0 0 12 12"><path d="M2 2.5H10V9.5H2Z" fill="#eaa64a" stroke="#b0822e" stroke-width=".6"/><path d="M4.5 2.5V9.5M7.5 2.5V9.5M4.5 6H7.5" fill="none" stroke="#b0822e" stroke-width="0.56"/></svg>
<div class="btn" style="left:738.5px;top:251.5px;width:23px;height:19px;border-color:#9a9a9a"></div>
<svg style="left:743.40px;top:254.30px" width="13.2" height="13.2" viewBox="0 0 12 12"><path d="M2.5 2.5H9.5V9.5H2.5ZM4.5 4.5V7.5H7.5V4.5Z" fill="#eaa64a" stroke="#b0822e" stroke-width=".6"/></svg>
<div class="btn" style="left:765.5px;top:251.5px;width:23px;height:19px;border-color:#9a9a9a"></div>
<svg style="left:770.40px;top:254.30px" width="13.2" height="13.2" viewBox="0 0 12 12"><path d="M3 2H9V10H3Z" fill="#eaa64a" stroke="#b0822e" stroke-width=".6"/><path d="M6 2V10" fill="none" stroke="#fff" stroke-width="0.96"/></svg>
<div class="btn" style="left:792.5px;top:251.5px;width:23px;height:19px;border-color:#9a9a9a"></div>
<svg style="left:797.40px;top:254.30px" width="13.2" height="13.2" viewBox="0 0 12 12"><path d="M2.5 2.5H9.5V9.5H2.5Z" fill="#eaa64a" stroke="#b0822e" stroke-width=".6"/><path d="M5 4V8M7 4V8" fill="none" stroke="#fff" stroke-width="0.80"/></svg>
<div class="btn" style="left:711.5px;top:274.875px;width:23px;height:19px;border-color:#9a9a9a"></div>
<svg style="left:716.40px;top:277.68px" width="13.2" height="13.2" viewBox="0 0 12 12"><path d="M2 2H10V10H2Z" fill="#eaa64a" stroke="#b0822e" stroke-width=".6"/><path d="M6 2V10M2 6H10" fill="none" stroke="#fff" stroke-width="0.80"/></svg>
<div class="btn" style="left:738.5px;top:274.875px;width:23px;height:19px;border-color:#9a9a9a"></div>
<svg style="left:743.40px;top:277.68px" width="13.2" height="13.2" viewBox="0 0 12 12"><path d="M3.5 2H8.5V10H3.5Z" fill="#eaa64a" stroke="#b0822e" stroke-width=".6"/><path d="M3.5 5H8.5M3.5 7.5H8.5" fill="none" stroke="#fff" stroke-width="0.72"/></svg>
<div class="btn" style="left:765.5px;top:274.875px;width:23px;height:19px;border-color:#9a9a9a"></div>
<svg style="left:770.40px;top:277.68px" width="13.2" height="13.2" viewBox="0 0 12 12"><path d="M3 2H9V4L7 5V7L9 8V10H3V8L5 7V5L3 4Z" fill="#eaa64a" stroke="#b0822e" stroke-width=".6"/></svg>
<div class="btn" style="left:792.5px;top:274.875px;width:23px;height:19px;border-color:#9a9a9a"></div>
<svg style="left:797.40px;top:277.68px" width="13.2" height="13.2" viewBox="0 0 12 12"><path d="M3 2H9L7.5 10H4.5Z" fill="#eaa64a" stroke="#b0822e" stroke-width=".6"/></svg>
<div class="btn" style="left:711.5px;top:298.25px;width:23px;height:19px;border-color:#9a9a9a"></div>
<svg style="left:716.40px;top:301.05px" width="13.2" height="13.2" viewBox="0 0 12 12"><path d="M3 3H9V10H3Z" fill="#eaa64a" stroke="#b0822e" stroke-width=".6"/><path d="M3 5.5H9M3 8H9" fill="none" stroke="#fff" stroke-width="0.64"/></svg>
<div class="btn" style="left:738.5px;top:298.25px;width:23px;height:19px;border-color:#9a9a9a"></div>
<svg style="left:743.40px;top:301.05px" width="13.2" height="13.2" viewBox="0 0 12 12"><path d="M4.5 2H7.5V10H4.5Z" fill="#eaa64a" stroke="#b0822e" stroke-width=".6"/></svg>
<svg style="left:723px;top:297px;" width="9" height="13" viewBox="0 0 9 13"><path d="M1 1V11L3.5 8.5L5.5 12L7 11.3L5 8H8.5Z" fill="#fff" stroke="#111" stroke-width=".8"/></svg>
<div class="btn" style="left:711.5px;top:344.4px;width:23px;height:18.5px;border-color:#9a9a9a"></div>
<svg style="left:717.0px;top:347.5px;" width="12" height="12" viewBox="0 0 12 12"><path d="M4.5 2H7.5V10H4.5Z" fill="#eaa64a" stroke="#b0822e" stroke-width=".6"/></svg>
<div class="btn" style="left:738.5px;top:344.4px;width:23px;height:18.5px;border-color:#9a9a9a"></div>
<svg style="left:744.0px;top:347.5px;" width="12" height="12" viewBox="0 0 12 12"><path d="M2 3H10V9H2Z" fill="#c8b898" stroke="#8a7a5a" stroke-width=".6"/><path d="M4 3V9M8 3V9" fill="none" stroke="#6a5a3a" stroke-width="0.72"/></svg>
<div class="btn" style="left:765.5px;top:344.4px;width:23px;height:18.5px;border-color:#9a9a9a"></div>
<svg style="left:771.0px;top:347.5px;" width="12" height="12" viewBox="0 0 12 12"><path d="M2 2H10V10H2Z" fill="#eaa64a" stroke="#b0822e" stroke-width=".6"/><path d="M4.7 2V10M7.3 2V10" fill="none" stroke="#a87020" stroke-width="0.64"/></svg>
<div class="btn" style="left:597px;top:390.5px;width:23px;height:19px;border-color:#9a9a9a"></div>
<svg style="left:602.5px;top:394px;" width="12" height="12" viewBox="0 0 12 12"><path d="M1 4H4.5L5.5 3H10V10H1Z" fill="#d8c880" stroke="#a09048" stroke-width=".6"/><circle cx="7" cy="5" r="3" fill="#5a6a7c"/><path d="M1 6.5H10.5L9.5 10H1Z" fill="#ece0a0" stroke="#a09048" stroke-width=".5"/></svg>
<div class="btn" style="left:624px;top:390.5px;width:23px;height:19px;border-color:#9a9a9a"></div>
<svg style="left:629.5px;top:394px;" width="12" height="12" viewBox="0 0 12 12"><path d="M2.5 1.5H8.5V10.5H2.5Z" fill="#f8f8f2" stroke="#6a6a6a" stroke-width=".7"/><path d="M4.5 8.5L10 2.5" stroke="#e0b818" stroke-width="2"/><path d="M4 9.5L5 8" stroke="#333" stroke-width=".8"/></svg>
<div class="btn" style="left:711.5px;top:390.5px;width:23px;height:19px;border-color:#9a9a9a"></div>
<svg style="left:717.0px;top:394px;" width="12" height="12" viewBox="0 0 12 12"><path d="M2 2.5H9V4.5H6.5V7.5H9.5V10H2V7.5H4.5V4.5H2Z" fill="#a8b6d8" stroke="#2a3a7a" stroke-width=".8"/><path d="M2 2.5L4 1H10.5V3L9 4.5" stroke="#2a3a7a" fill="none" stroke-width=".7"/></svg>
<div class="btn" style="left:738.5px;top:390.5px;width:23px;height:19px;border-color:#9a9a9a"></div>
<svg style="left:744.0px;top:394px;" width="12" height="12" viewBox="0 0 12 12"><path d="M2 4L5 2H10V9L7 11H2Z" fill="#e4e4e4" stroke="#8a8a8a" stroke-width=".6"/><path d="M7 4V11M2 4H7L10 2" stroke="#8a8a8a" fill="none" stroke-width=".6"/><rect x="3.5" y="6" width="2" height="2" fill="#333"/></svg>
<div style="left:174px;top:482px;width:1022px;height:3px;background:#e4e7ec"></div>
<div style="left:174px;top:485px;width:918px;height:12.5px;background:linear-gradient(#cbd0d8,#c2c7cf)"></div>
<span class="t" style="left:176px;top:488.28px;color:#444c5a;font-size:8.00px;transform:scaleX(0.945);transform-origin:0 0;-webkit-text-stroke:.14px">1.13 Сечения</span>
<div style="left:174px;top:497.5px;width:1024px;height:16px;background:linear-gradient(#eef0f4,#e3e6ec)"></div>
<div style="left:176.75px;top:499px;width:14px;height:13.5px;background:linear-gradient(#fde6a8,#f7c86a);border:1px solid #e0a840;border-radius:2px"></div>
<svg style="left:178.25px;top:500px;" width="11" height="11" viewBox="0 0 11 11"><rect x="1" y="1" width="9" height="9" fill="#4a9a50" stroke="#2a5a30" stroke-width=".8"/><path d="M2 9L9 2" stroke="#c8e8c8" stroke-width="1.2"/></svg>
<svg style="left:194px;top:500px;" width="11" height="11" viewBox="0 0 11 11"><rect x="1" y="1" width="9" height="9" fill="#e8ecf2" stroke="#2a3a5a" stroke-width="1"/><rect x="1" y="1" width="9" height="2" fill="#2a3a5a"/><path d="M5.5 4V9M3 6.5H8" stroke="#2a3a5a" stroke-width="1"/></svg>
<svg style="left:207px;top:500px;" width="11" height="11" viewBox="0 0 11 11"><rect x="1" y="1" width="9" height="9" fill="#e8ecf2" stroke="#2a3a5a" stroke-width="1"/><rect x="1" y="1" width="9" height="2" fill="#2a3a5a"/><path d="M5.5 3V9M3.5 7L5.5 9L7.5 7" stroke="#2a3a5a" fill="none" stroke-width="1.1"/></svg>
<svg style="left:220.5px;top:500px;" width="11" height="11" viewBox="0 0 11 11"><rect x="1" y="1" width="9" height="9" fill="#eef0f4" stroke="#a8b0bc" stroke-width="1"/><path d="M2 6H9" stroke="#c8a8a8"/></svg>
<svg style="left:234.5px;top:500px;" width="11" height="11" viewBox="0 0 11 11"><rect x="1" y="1" width="9" height="9" fill="#eef0f4" stroke="#a8b0bc" stroke-width="1"/><path d="M5.5 4V9M3 6.5H8" stroke="#8a9aaa"/></svg>
<svg style="left:253.25px;top:500px;" width="11" height="11" viewBox="0 0 11 11"><rect x="1" y="1" width="9" height="9" fill="#dde3ec" stroke="#2a3a5a" stroke-width="1"/><path d="M9 5.5H2M4 3.5L2 5.5L4 7.5" stroke="#2a3a7a" fill="none" stroke-width="1.2"/></svg>
<svg style="left:267px;top:500px;" width="11" height="11" viewBox="0 0 11 11"><rect x="1" y="1" width="9" height="9" fill="#dde3ec" stroke="#2a3a5a" stroke-width="1"/><path d="M2 5.5H9M7 3.5L9 5.5L7 7.5" stroke="#2a3a7a" fill="none" stroke-width="1.2"/></svg>
<div style="left:284.0px;top:499px;width:14px;height:13.5px;background:linear-gradient(#fde6a8,#f7c86a);border:1px solid #e0a840;border-radius:2px"></div>
<svg style="left:285.5px;top:500px;" width="11" height="11" viewBox="0 0 11 11"><path d="M3 2Q8 2 8 6Q8 9 4 9" stroke="#2a2a2a" fill="none" stroke-width="1.4"/></svg>
<div style="left:298.0px;top:499px;width:14px;height:13.5px;background:linear-gradient(#fde6a8,#f7c86a);border:1px solid #e0a840;border-radius:2px"></div>
<svg style="left:299.5px;top:500px;" width="11" height="11" viewBox="0 0 11 11"><path d="M8 2Q3 2 3 6Q3 9 7 9" stroke="#2a2a2a" fill="none" stroke-width="1.4"/></svg>
<svg style="left:313.25px;top:500px;" width="11" height="11" viewBox="0 0 11 11"><circle cx="5.5" cy="5.5" r="3.8" fill="none" stroke="#a8b4c8" stroke-width="1.5"/></svg>
<svg style="left:332px;top:500px;" width="11" height="11" viewBox="0 0 11 11"><rect x="1" y="1" width="9" height="9" fill="#eef0f4" stroke="#b8c0cc"/><circle cx="5.5" cy="5.5" r="2" fill="none" stroke="#a8b4c8"/></svg>
<svg style="left:345.5px;top:500px;" width="11" height="11" viewBox="0 0 11 11"><rect x="1" y="1" width="9" height="9" fill="#eef0f4" stroke="#b8c0cc"/><rect x="3.5" y="3.5" width="4" height="4" fill="none" stroke="#a8b4c8"/></svg>
<svg style="left:359.5px;top:500px;" width="11" height="11" viewBox="0 0 11 11"><rect x="1" y="1" width="9" height="9" fill="#eef0f4" stroke="#b8c0cc"/><path d="M5.5 2V9" stroke="#a8b4c8"/></svg>
<svg style="left:377px;top:500px;" width="11" height="11" viewBox="0 0 11 11"><rect x="1" y="1" width="9" height="9" fill="#eef0f4" stroke="#b8c0cc"/><path d="M2 2L9 9M9 2L2 9" stroke="#b0b8c4"/></svg>
<svg style="left:398.25px;top:500px;" width="11" height="11" viewBox="0 0 11 11"><path d="M2 2L9 9M9 2L2 9" stroke="#e08080" stroke-width="1.3"/></svg>
<svg style="left:410.75px;top:500px;" width="11" height="11" viewBox="0 0 11 11"><path d="M2 5.5H9M5.5 2V9" stroke="#e0a0a0" stroke-width="1.1"/></svg>
<svg style="left:424.5px;top:500px;" width="11" height="11" viewBox="0 0 11 11"><path d="M2 5.5H9M6 3L9 5.5L6 8" stroke="#e0a0a0" fill="none" stroke-width="1.1"/></svg>
<svg style="left:445.75px;top:500px;" width="11" height="11" viewBox="0 0 11 11"><rect x="1" y="1" width="9" height="9" fill="#f8f0b0" stroke="#555" stroke-width=".8"/><rect x="1" y="1" width="9" height="2.5" fill="#e0c030"/></svg>
<svg style="left:457px;top:500px;" width="11" height="11" viewBox="0 0 11 11"><rect x="1" y="1" width="9" height="9" fill="#c8d4f0" stroke="#3a4a8a" stroke-width=".8"/><path d="M1 4H10M1 7H10" stroke="#3a4a8a" stroke-width=".7"/></svg>
<svg style="left:475.5px;top:500px;" width="11" height="11" viewBox="0 0 11 11"><rect x="1" y="1" width="9" height="9" fill="#f0ecd8" stroke="#a8a090" stroke-width=".8"/><path d="M3 8L8 3" stroke="#c8b060"/></svg>
<svg style="left:494.5px;top:500px;" width="11" height="11" viewBox="0 0 11 11"><path d="M1 4L5 1L10 3V10H1Z" fill="#d8d0c0" stroke="#555" stroke-width=".7"/></svg>
<svg style="left:508.5px;top:500px;" width="11" height="11" viewBox="0 0 11 11"><path d="M1 6Q3 1 5 6Q7 10 9 4" fill="none" stroke="#2a3f70" stroke-width="1.6"/></svg>
<svg style="left:522px;top:500px;" width="11" height="11" viewBox="0 0 11 11"><rect x="1" y="1" width="9" height="9" fill="#3a9a40" stroke="#1a4a20" stroke-width=".8"/><path d="M3 3L8 8M8 3L3 8" stroke="#fff" stroke-width="1.2"/></svg>
<svg style="left:535.5px;top:500px;" width="11" height="11" viewBox="0 0 11 11"><rect x="1" y="2" width="9" height="8" fill="#5a6070"/><path d="M2 5H9M2 7.5H9" stroke="#c8ccd4" stroke-width=".7"/></svg>
<svg style="left:554.5px;top:500px;" width="11" height="11" viewBox="0 0 11 11"><path d="M2 10V2H8M2 6H8M1 10H10" stroke="#2a3a5a" fill="none" stroke-width="1.2"/></svg>
<svg style="left:568.5px;top:500px;" width="11" height="11" viewBox="0 0 11 11"><text x="1" y="9" font-size="9" font-style="italic" fill="#777" font-family="Liberation Serif">fx</text></svg>
<svg style="left:582px;top:500px;" width="11" height="11" viewBox="0 0 11 11"><text x="1" y="9" font-size="9" font-style="italic" fill="#c08080" font-family="Liberation Serif">fx</text></svg>
<svg style="left:600.5px;top:500px;" width="11" height="11" viewBox="0 0 11 11"><path d="M1 9V3L5 2V9ZM6 2L10 3V9H6Z" fill="#e8e4d8" stroke="#555" stroke-width=".7"/></svg>
<svg style="left:614.5px;top:499.5px;" width="11" height="12" viewBox="0 0 11 12"><path d="M3 1H8M5.5 1V6M3 6H8" stroke="#444" stroke-width=".9" fill="none"/><text x="5.5" y="11.5" font-size="4.2" text-anchor="middle" fill="#333" font-family="Liberation Sans" font-weight="bold">IPE</text></svg>
<svg style="left:628.25px;top:499.5px;" width="11" height="12" viewBox="0 0 11 12"><path d="M3 1H8M5.5 1V6M3 6H8" stroke="#444" stroke-width=".9" fill="none"/><text x="5.5" y="11.5" font-size="4.2" text-anchor="middle" fill="#333" font-family="Liberation Sans" font-weight="bold">HE-A</text></svg>
<svg style="left:642.0px;top:499.5px;" width="11" height="12" viewBox="0 0 11 12"><path d="M3 1H8M5.5 1V6M3 6H8" stroke="#444" stroke-width=".9" fill="none"/><text x="5.5" y="11.5" font-size="4.2" text-anchor="middle" fill="#333" font-family="Liberation Sans" font-weight="bold">HE-B</text></svg>
<svg style="left:655.75px;top:499.5px;" width="11" height="12" viewBox="0 0 11 12"><path d="M3 1H8M5.5 1V6M3 6H8" stroke="#444" stroke-width=".9" fill="none"/><text x="5.5" y="11.5" font-size="4.2" text-anchor="middle" fill="#333" font-family="Liberation Sans" font-weight="bold">HE-M</text></svg>
<svg style="left:669.5px;top:499.5px;" width="11" height="12" viewBox="0 0 11 12"><rect x="3" y="1" width="5" height="5" fill="none" stroke="#444" stroke-width=".9"/><text x="5.5" y="11.5" font-size="4.2" text-anchor="middle" fill="#333" font-family="Liberation Sans" font-weight="bold">QRO</text></svg>
<svg style="left:683.25px;top:499.5px;" width="11" height="12" viewBox="0 0 11 12"><rect x="4" y="1" width="3" height="5" fill="none" stroke="#444" stroke-width=".8"/><text x="5.5" y="11.5" font-size="4.2" text-anchor="middle" fill="#333" font-family="Liberation Sans" font-weight="bold">RRO</text></svg>
<svg style="left:697.0px;top:499.5px;" width="11" height="12" viewBox="0 0 11 12"><circle cx="5.5" cy="3.5" r="2.5" fill="none" stroke="#444" stroke-width=".9"/><text x="5.5" y="11.5" font-size="4.2" text-anchor="middle" fill="#333" font-family="Liberation Sans" font-weight="bold">RO</text></svg>
<svg style="left:710.75px;top:499.5px;" width="11" height="12" viewBox="0 0 11 12"><circle cx="5.5" cy="3.5" r="2.7" fill="#223a80"/><text x="5.5" y="11.5" font-size="4.2" text-anchor="middle" fill="#333" font-family="Liberation Sans" font-weight="bold">RD</text></svg>
<svg style="left:724.5px;top:499.5px;" width="11" height="12" viewBox="0 0 11 12"><path d="M4 1V6H8" stroke="#444" stroke-width=".9" fill="none"/><text x="5.5" y="11.5" font-size="4.2" text-anchor="middle" fill="#333" font-family="Liberation Sans" font-weight="bold">L</text></svg>
<svg style="left:738.25px;top:499.5px;" width="11" height="12" viewBox="0 0 11 12"><path d="M7 1H4V6H7" stroke="#444" stroke-width=".9" fill="none"/><text x="5.5" y="11.5" font-size="4.2" text-anchor="middle" fill="#333" font-family="Liberation Sans" font-weight="bold">U</text></svg>
<svg style="left:752.0px;top:499.5px;" width="11" height="12" viewBox="0 0 11 12"><path d="M3 1H8M5.5 1V6M3 6H8" stroke="#444" stroke-width=".9" fill="none"/><text x="5.5" y="11.5" font-size="4.2" text-anchor="middle" fill="#333" font-family="Liberation Sans" font-weight="bold">IS</text></svg>
<svg style="left:765.75px;top:499.5px;" width="11" height="12" viewBox="0 0 11 12"><path d="M3 1H8M5.5 1V6" stroke="#444" stroke-width=".9" fill="none"/><text x="5.5" y="11.5" font-size="4.2" text-anchor="middle" fill="#333" font-family="Liberation Sans" font-weight="bold">TS</text></svg>
<svg style="left:779.5px;top:499.5px;" width="11" height="12" viewBox="0 0 11 12"><rect x="4" y="1" width="3" height="5" fill="none" stroke="#666" stroke-width=".8"/><text x="5.5" y="11.5" font-size="4.2" text-anchor="middle" fill="#333" font-family="Liberation Sans" font-weight="bold">REC</text></svg>
<svg style="left:793.25px;top:499.5px;" width="11" height="12" viewBox="0 0 11 12"><circle cx="5.5" cy="3.5" r="2.6" fill="#9a9a9a" stroke="#666" stroke-width=".6"/><text x="5.5" y="11.5" font-size="4.2" text-anchor="middle" fill="#333" font-family="Liberation Sans" font-weight="bold">CIR</text></svg>
<svg style="left:807.0px;top:499.5px;" width="11" height="12" viewBox="0 0 11 12"><rect x="3.5" y="0.5" width="4" height="5.5" fill="#f0a030" stroke="#b07020" stroke-width=".6"/><text x="5.5" y="11.5" font-size="4.2" text-anchor="middle" fill="#333" font-family="Liberation Sans" font-weight="bold">REC</text></svg>
<svg style="left:820.75px;top:499.5px;" width="11" height="12" viewBox="0 0 11 12"><path d="M2 1H9V3H6.5V6H4.5V3H2Z" fill="#f0a030" stroke="#b07020" stroke-width=".6"/><text x="5.5" y="11.5" font-size="4.2" text-anchor="middle" fill="#333" font-family="Liberation Sans" font-weight="bold">TH</text></svg>
<svg style="left:834px;top:500px;" width="12" height="11" viewBox="0 0 12 11"><path d="M1 3L6 1L11 2V5L7 7V10L2 10Z" fill="#5a6a8a" stroke="#2a3a5a" stroke-width=".6"/></svg>
<svg style="left:848px;top:500px;" width="12" height="11" viewBox="0 0 12 11"><path d="M2 4L6 2L11 3V9L7 10H2Z" fill="#e0e0e0" stroke="#7a7a7a" stroke-width=".7"/><rect x="4" y="6" width="2" height="2" fill="#444"/></svg>
<div style="left:249.5px;top:501px;width:1px;height:10px;background:#c0c6d0;border-right:1px solid #fff;width:2px"></div>
<div style="left:280px;top:501px;width:1px;height:10px;background:#c0c6d0;border-right:1px solid #fff;width:2px"></div>
<div style="left:327.5px;top:501px;width:1px;height:10px;background:#c0c6d0;border-right:1px solid #fff;width:2px"></div>
<div style="left:372.5px;top:501px;width:1px;height:10px;background:#c0c6d0;border-right:1px solid #fff;width:2px"></div>
<div style="left:391px;top:501px;width:1px;height:10px;background:#c0c6d0;border-right:1px solid #fff;width:2px"></div>
<div style="left:438.75px;top:501px;width:1px;height:10px;background:#c0c6d0;border-right:1px solid #fff;width:2px"></div>
<div style="left:490px;top:501px;width:1px;height:10px;background:#c0c6d0;border-right:1px solid #fff;width:2px"></div>
<div style="left:549px;top:501px;width:1px;height:10px;background:#c0c6d0;border-right:1px solid #fff;width:2px"></div>
<div style="left:596px;top:501px;width:1px;height:10px;background:#c0c6d0;border-right:1px solid #fff;width:2px"></div>
<div style="left:173.5px;top:514px;width:1025px;height:123px;background:#8f9398"></div>
<div style="left:174.5px;top:515px;width:1023px;height:121.3px;background:#f0f0f0"></div>
<div style="left:203px;top:516.5px;width:139px;height:8.0px;background:linear-gradient(#4aa0f0,#3a8ee6);"></div>
<span class="t" style="left:270.3px;top:516.24px;color:#e8f4ff;font-size:8.48px;transform:scaleX(0.81);transform-origin:0 0;-webkit-text-stroke:.05px">A</span>
<div style="left:342px;top:516.5px;width:33.5px;height:8.0px;background:linear-gradient(#f4f4f4,#e2e2e2);border-right:1px solid #a8a8a8;border-bottom:1px solid #9a9a9a"></div>
<span class="t" style="left:342px;width:33.5px;text-align:center;top:516.70px;color:#333;font-size:8.48px;transform:scaleX(0.81);transform-origin:50% 0;-webkit-text-stroke:.05px">B</span>
<div style="left:375.5px;top:516.5px;width:41.5px;height:8.0px;background:linear-gradient(#f4f4f4,#e2e2e2);border-right:1px solid #a8a8a8;border-bottom:1px solid #9a9a9a"></div>
<span class="t" style="left:375.5px;width:41.5px;text-align:center;top:516.70px;color:#333;font-size:8.48px;transform:scaleX(0.81);transform-origin:50% 0;-webkit-text-stroke:.05px">C</span>
<div style="left:417px;top:516.5px;width:41.5px;height:8.0px;background:linear-gradient(#f4f4f4,#e2e2e2);border-right:1px solid #a8a8a8;border-bottom:1px solid #9a9a9a"></div>
<span class="t" style="left:417px;width:41.5px;text-align:center;top:516.70px;color:#333;font-size:8.48px;transform:scaleX(0.81);transform-origin:50% 0;-webkit-text-stroke:.05px">D</span>
<div style="left:458.5px;top:516.5px;width:41.5px;height:8.0px;background:linear-gradient(#f4f4f4,#e2e2e2);border-right:1px solid #a8a8a8;border-bottom:1px solid #9a9a9a"></div>
<span class="t" style="left:458.5px;width:41.5px;text-align:center;top:516.70px;color:#333;font-size:8.48px;transform:scaleX(0.81);transform-origin:50% 0;-webkit-text-stroke:.05px">E</span>
<div style="left:500px;top:516.5px;width:41px;height:8.0px;background:linear-gradient(#f4f4f4,#e2e2e2);border-right:1px solid #a8a8a8;border-bottom:1px solid #9a9a9a"></div>
<span class="t" style="left:500px;width:41px;text-align:center;top:516.70px;color:#333;font-size:8.48px;transform:scaleX(0.81);transform-origin:50% 0;-webkit-text-stroke:.05px">F</span>
<div style="left:541px;top:516.5px;width:41px;height:8.0px;background:linear-gradient(#f4f4f4,#e2e2e2);border-right:1px solid #a8a8a8;border-bottom:1px solid #9a9a9a"></div>
<span class="t" style="left:541px;width:41px;text-align:center;top:516.70px;color:#333;font-size:8.48px;transform:scaleX(0.81);transform-origin:50% 0;-webkit-text-stroke:.05px">G</span>
<div style="left:582px;top:516.5px;width:41px;height:8.0px;background:linear-gradient(#f4f4f4,#e2e2e2);border-right:1px solid #a8a8a8;border-bottom:1px solid #9a9a9a"></div>
<span class="t" style="left:582px;width:41px;text-align:center;top:516.70px;color:#333;font-size:8.48px;transform:scaleX(0.81);transform-origin:50% 0;-webkit-text-stroke:.05px">H</span>
<div style="left:623px;top:516.5px;width:45px;height:8.0px;background:linear-gradient(#f4f4f4,#e2e2e2);border-right:1px solid #a8a8a8;border-bottom:1px solid #9a9a9a"></div>
<span class="t" style="left:623px;width:45px;text-align:center;top:516.70px;color:#333;font-size:8.48px;transform:scaleX(0.81);transform-origin:50% 0;-webkit-text-stroke:.05px">I</span>
<div style="left:668px;top:516.5px;width:45.5px;height:8.0px;background:linear-gradient(#f4f4f4,#e2e2e2);border-right:1px solid #a8a8a8;border-bottom:1px solid #9a9a9a"></div>
<span class="t" style="left:668px;width:45.5px;text-align:center;top:516.70px;color:#333;font-size:8.48px;transform:scaleX(0.81);transform-origin:50% 0;-webkit-text-stroke:.05px">J</span>
<div style="left:713.5px;top:516.5px;width:45.0px;height:8.0px;background:linear-gradient(#f4f4f4,#e2e2e2);border-right:1px solid #a8a8a8;border-bottom:1px solid #9a9a9a"></div>
<span class="t" style="left:713.5px;width:45.0px;text-align:center;top:516.70px;color:#333;font-size:8.48px;transform:scaleX(0.81);transform-origin:50% 0;-webkit-text-stroke:.05px">K</span>
<div style="left:758.5px;top:516.5px;width:45.0px;height:8.0px;background:linear-gradient(#f4f4f4,#e2e2e2);border-right:1px solid #a8a8a8;border-bottom:1px solid #9a9a9a"></div>
<span class="t" style="left:758.5px;width:45.0px;text-align:center;top:516.70px;color:#333;font-size:8.48px;transform:scaleX(0.81);transform-origin:50% 0;-webkit-text-stroke:.05px">L</span>
<div style="left:803.5px;top:516.5px;width:383.5px;height:8.0px;background:linear-gradient(#f4f4f4,#e2e2e2);border-right:1px solid #a8a8a8;border-bottom:1px solid #9a9a9a"></div>
<span class="t" style="left:803.5px;width:383.5px;text-align:center;top:516.70px;color:#333;font-size:8.48px;transform:scaleX(0.81);transform-origin:50% 0;-webkit-text-stroke:.05px">M</span>
<div style="left:174.5px;top:516.5px;width:28.5px;height:29.100000000000023px;background:#e9e9e9;border-right:1px solid #b4b4b4;border-bottom:1px solid #8a8a8a"></div>
<div style="left:203px;top:524.5px;width:984px;height:21.100000000000023px;background:#ebebeb;border-bottom:1px solid #8f8f8f"></div>
<span class="t" style="left:174.5px;width:28.5px;text-align:center;top:525.74px;color:#222;letter-spacing:-.3px;font-size:8.48px;transform:scaleX(0.81);transform-origin:50% 0;-webkit-text-stroke:.05px">Сечение</span>
<span class="t" style="left:174.5px;width:28.5px;text-align:center;top:535.04px;color:#222;font-size:8.48px;transform:scaleX(0.81);transform-origin:50% 0;-webkit-text-stroke:.05px">№</span>
<span class="t" style="left:203px;width:139px;text-align:center;top:525.54px;color:#222;font-size:8.48px;transform:scaleX(0.81);transform-origin:50% 0;-webkit-text-stroke:.05px">Обозначение</span>
<span class="t" style="left:203px;width:139px;text-align:center;top:535.54px;color:#222;font-size:8.48px;transform:scaleX(0.81);transform-origin:50% 0;-webkit-text-stroke:.05px">сечения [мм]</span>
<span class="t" style="left:342px;width:33.5px;text-align:center;top:525.54px;color:#222;letter-spacing:-.2px;font-size:8.48px;transform:scaleX(0.81);transform-origin:50% 0;-webkit-text-stroke:.05px">Материал</span>
<span class="t" style="left:342px;width:33.5px;text-align:center;top:535.54px;color:#222;font-size:8.48px;transform:scaleX(0.81);transform-origin:50% 0;-webkit-text-stroke:.05px">№</span>
<span class="t" style="left:375.5px;width:124.5px;text-align:center;top:525.54px;color:#222;font-size:8.48px;transform:scaleX(0.81);transform-origin:50% 0;-webkit-text-stroke:.05px">Моменты инерции [см&#8201;<sup style="font-size:5.99px;vertical-align:2px">4</sup>]</span>
<span class="t" style="left:500px;width:123px;text-align:center;top:525.54px;color:#222;font-size:8.48px;transform:scaleX(0.81);transform-origin:50% 0;-webkit-text-stroke:.05px">Площади сечений [см&#8201;<sup style="font-size:5.99px;vertical-align:2px">2</sup>]</span>
<span class="t" style="left:623px;width:45px;text-align:center;top:525.54px;color:#222;font-size:8.48px;transform:scaleX(0.81);transform-origin:50% 0;-webkit-text-stroke:.05px">Главные оси</span>
<span class="t" style="left:668px;width:45.5px;text-align:center;top:525.54px;color:#222;font-size:8.48px;transform:scaleX(0.81);transform-origin:50% 0;-webkit-text-stroke:.05px">Наклон</span>
<span class="t" style="left:713.5px;width:90.0px;text-align:center;top:525.54px;color:#222;font-size:8.48px;transform:scaleX(0.81);transform-origin:50% 0;-webkit-text-stroke:.05px">Общие размеры [мм]</span>
<span class="t" style="left:803.5px;width:383.5px;text-align:center;top:535.54px;color:#222;font-size:8.48px;transform:scaleX(0.81);transform-origin:50% 0;-webkit-text-stroke:.05px">Комментарий</span>
<span class="t" style="left:375.5px;width:41.5px;text-align:center;top:535.54px;color:#222;font-size:8.48px;transform:scaleX(0.81);transform-origin:50% 0;-webkit-text-stroke:.05px">Кручение J</span>
<span class="t" style="left:417px;width:41.5px;text-align:center;top:535.54px;color:#222;font-size:8.48px;transform:scaleX(0.81);transform-origin:50% 0;-webkit-text-stroke:.05px">Изгиб. I<sub style="font-size:5.44px;vertical-align:-1px">y</sub>:</span>
<span class="t" style="left:458.5px;width:41.5px;text-align:center;top:535.54px;color:#222;font-size:8.48px;transform:scaleX(0.81);transform-origin:50% 0;-webkit-text-stroke:.05px">Изгиб. I<sub style="font-size:5.44px;vertical-align:-1px">z</sub>:</span>
<span class="t" style="left:500px;width:41px;text-align:center;top:535.54px;color:#222;font-size:8.48px;transform:scaleX(0.81);transform-origin:50% 0;-webkit-text-stroke:.05px">Осевая A:</span>
<span class="t" style="left:541px;width:41px;text-align:center;top:535.54px;color:#222;font-size:8.48px;transform:scaleX(0.81);transform-origin:50% 0;-webkit-text-stroke:.05px">Сдвиг A<sub style="font-size:5.44px;vertical-align:-1px">y</sub>:</span>
<span class="t" style="left:582px;width:41px;text-align:center;top:535.54px;color:#222;font-size:8.48px;transform:scaleX(0.81);transform-origin:50% 0;-webkit-text-stroke:.05px">Сдвиг A<sub style="font-size:5.44px;vertical-align:-1px">z</sub>:</span>
<span class="t" style="left:623px;width:45px;text-align:center;top:535.54px;color:#222;font-size:8.48px;transform:scaleX(0.81);transform-origin:50% 0;-webkit-text-stroke:.05px">α [°]</span>
<span class="t" style="left:668px;width:45.5px;text-align:center;top:535.54px;color:#222;font-size:8.48px;transform:scaleX(0.81);transform-origin:50% 0;-webkit-text-stroke:.05px">α&#x27; [°]</span>
<span class="t" style="left:713.5px;width:45.0px;text-align:center;top:535.54px;color:#222;font-size:8.48px;transform:scaleX(0.81);transform-origin:50% 0;-webkit-text-stroke:.05px">Ширина b</span>
<span class="t" style="left:758.5px;width:45.0px;text-align:center;top:535.54px;color:#222;font-size:8.48px;transform:scaleX(0.81);transform-origin:50% 0;-webkit-text-stroke:.05px">Высота h</span>
<div style="left:341.5px;top:524.5px;width:1px;height:21.100000000000023px;background:#b4b4b4"></div>
<div style="left:375.0px;top:524.5px;width:1px;height:21.100000000000023px;background:#b4b4b4"></div>
<div style="left:499.5px;top:524.5px;width:1px;height:21.100000000000023px;background:#b4b4b4"></div>
<div style="left:622.5px;top:524.5px;width:1px;height:21.100000000000023px;background:#b4b4b4"></div>
<div style="left:667.5px;top:524.5px;width:1px;height:21.100000000000023px;background:#b4b4b4"></div>
<div style="left:713.0px;top:524.5px;width:1px;height:21.100000000000023px;background:#b4b4b4"></div>
<div style="left:803.0px;top:524.5px;width:1px;height:21.100000000000023px;background:#b4b4b4"></div>
<div style="left:416.5px;top:534px;width:1px;height:11.600000000000023px;background:#c4c4c4"></div>
<div style="left:458.0px;top:534px;width:1px;height:11.600000000000023px;background:#c4c4c4"></div>
<div style="left:540.5px;top:534px;width:1px;height:11.600000000000023px;background:#c4c4c4"></div>
<div style="left:581.5px;top:534px;width:1px;height:11.600000000000023px;background:#c4c4c4"></div>
<div style="left:758.0px;top:534px;width:1px;height:11.600000000000023px;background:#c4c4c4"></div>
<div style="left:203px;top:545.6px;width:984px;height:9.95px;background:#fff;border-bottom:1px solid #c8c8c8"></div>
<div style="left:174.5px;top:545.6px;width:28.5px;height:9.95px;background:linear-gradient(#eeeeee,#dcdcdc);border-bottom:1.3px solid #8a8a8a;border-right:1px solid #b0b0b0"></div>
<span class="t" style="left:174.5px;width:28.5px;text-align:center;top:546.51px;color:#222;font-size:8.48px;transform:scaleX(0.81);transform-origin:50% 0;-webkit-text-stroke:.05px">1</span>
<div style="left:623.5px;top:545.6px;width:44.5px;height:8.95px;background:#ececec"></div>
<div style="left:204.8px;top:546.9px;width:7.5px;height:7.8px;background:#5a96e8;border:1px solid rgba(0,0,0,.4);border-radius:1.2px"></div>
<svg style="left:214px;top:546.6px;" width="7" height="8" viewBox="0 0 7 8"><path d="M1.5 .8H5.5M3.5 .8V7.2M1.5 7.2H5.5" stroke="#333" stroke-width=".9" fill="none"/></svg>
<span class="t" style="left:223px;top:546.51px;color:#50509c;font-size:8.48px;transform:scaleX(0.81);transform-origin:0 0;-webkit-text-stroke:.05px">IP-B 20 B1 | ГОСТ, 1994</span>
<div style="left:343px;top:547.1px;width:8px;height:7.5px;background:#3a8ae0;border:1px solid #2a5a9a"></div>
<span class="t" style="left:342px;width:30.5px;text-align:right;top:546.51px;color:#333;font-size:8.48px;transform:scaleX(0.81);transform-origin:100% 0;-webkit-text-stroke:.05px">1</span>
<span class="t" style="left:375.5px;width:39.5px;text-align:right;top:546.51px;color:#50509c;font-size:8.48px;transform:scaleX(0.81);transform-origin:100% 0;-webkit-text-stroke:.05px">4.43</span>
<span class="t" style="left:417px;width:39.5px;text-align:right;top:546.51px;color:#50509c;font-size:8.48px;transform:scaleX(0.81);transform-origin:100% 0;-webkit-text-stroke:.05px">1844.00</span>
<span class="t" style="left:458.5px;width:39.5px;text-align:right;top:546.51px;color:#50509c;font-size:8.48px;transform:scaleX(0.81);transform-origin:100% 0;-webkit-text-stroke:.05px">133.90</span>
<span class="t" style="left:500px;width:39px;text-align:right;top:546.51px;color:#50509c;font-size:8.48px;transform:scaleX(0.81);transform-origin:100% 0;-webkit-text-stroke:.05px">27.16</span>
<span class="t" style="left:541px;width:39px;text-align:right;top:546.51px;color:#50509c;font-size:8.48px;transform:scaleX(0.81);transform-origin:100% 0;-webkit-text-stroke:.05px">13.39</span>
<span class="t" style="left:582px;width:39px;text-align:right;top:546.51px;color:#50509c;font-size:8.48px;transform:scaleX(0.81);transform-origin:100% 0;-webkit-text-stroke:.05px">10.17</span>
<span class="t" style="left:623px;width:43px;text-align:right;top:546.51px;color:#50509c;font-size:8.48px;transform:scaleX(0.81);transform-origin:100% 0;-webkit-text-stroke:.05px">0.00</span>
<span class="t" style="left:668px;width:43.5px;text-align:right;top:546.51px;color:#50509c;font-size:8.48px;transform:scaleX(0.81);transform-origin:100% 0;-webkit-text-stroke:.05px">0.00</span>
<span class="t" style="left:713.5px;width:43.0px;text-align:right;top:546.51px;color:#50509c;font-size:8.48px;transform:scaleX(0.81);transform-origin:100% 0;-webkit-text-stroke:.05px">100.0</span>
<span class="t" style="left:758.5px;width:43.0px;text-align:right;top:546.51px;color:#50509c;font-size:8.48px;transform:scaleX(0.81);transform-origin:100% 0;-webkit-text-stroke:.05px">200.0</span>
<span class="t" style="left:806.5px;top:546.51px;color:#50509c;font-size:8.48px;transform:scaleX(0.81);transform-origin:0 0;-webkit-text-stroke:.05px">Колонны. Угловые. Тип 1</span>
<div style="left:203px;top:555.5500000000001px;width:984px;height:9.95px;background:#fff;border-bottom:1px solid #c8c8c8"></div>
<div style="left:174.5px;top:555.5500000000001px;width:28.5px;height:9.95px;background:linear-gradient(#eeeeee,#dcdcdc);border-bottom:1.3px solid #8a8a8a;border-right:1px solid #b0b0b0"></div>
<span class="t" style="left:174.5px;width:28.5px;text-align:center;top:556.46px;color:#222;font-size:8.48px;transform:scaleX(0.81);transform-origin:50% 0;-webkit-text-stroke:.05px">2</span>
<div style="left:623.5px;top:555.5500000000001px;width:44.5px;height:8.95px;background:#ececec"></div>
<div style="left:204.8px;top:556.85px;width:7.5px;height:7.8px;background:#f08a1a;border:1px solid rgba(0,0,0,.4);border-radius:1.2px"></div>
<svg style="left:214px;top:556.5500000000001px;" width="7" height="8" viewBox="0 0 7 8"><path d="M1.5 .8H5.5M3.5 .8V7.2M1.5 7.2H5.5" stroke="#333" stroke-width=".9" fill="none"/></svg>
<span class="t" style="left:223px;top:556.46px;color:#50509c;font-size:8.48px;transform:scaleX(0.81);transform-origin:0 0;-webkit-text-stroke:.05px">IP-B 20 B1 | ГОСТ, 1994</span>
<div style="left:343px;top:557.0500000000001px;width:8px;height:7.5px;background:#3a8ae0;border:1px solid #2a5a9a"></div>
<span class="t" style="left:342px;width:30.5px;text-align:right;top:556.46px;color:#333;font-size:8.48px;transform:scaleX(0.81);transform-origin:100% 0;-webkit-text-stroke:.05px">1</span>
<span class="t" style="left:375.5px;width:39.5px;text-align:right;top:556.46px;color:#50509c;font-size:8.48px;transform:scaleX(0.81);transform-origin:100% 0;-webkit-text-stroke:.05px">4.43</span>
<span class="t" style="left:417px;width:39.5px;text-align:right;top:556.46px;color:#50509c;font-size:8.48px;transform:scaleX(0.81);transform-origin:100% 0;-webkit-text-stroke:.05px">1844.00</span>
<span class="t" style="left:458.5px;width:39.5px;text-align:right;top:556.46px;color:#50509c;font-size:8.48px;transform:scaleX(0.81);transform-origin:100% 0;-webkit-text-stroke:.05px">133.90</span>
<span class="t" style="left:500px;width:39px;text-align:right;top:556.46px;color:#50509c;font-size:8.48px;transform:scaleX(0.81);transform-origin:100% 0;-webkit-text-stroke:.05px">27.16</span>
<span class="t" style="left:541px;width:39px;text-align:right;top:556.46px;color:#50509c;font-size:8.48px;transform:scaleX(0.81);transform-origin:100% 0;-webkit-text-stroke:.05px">13.39</span>
<span class="t" style="left:582px;width:39px;text-align:right;top:556.46px;color:#50509c;font-size:8.48px;transform:scaleX(0.81);transform-origin:100% 0;-webkit-text-stroke:.05px">10.17</span>
<span class="t" style="left:623px;width:43px;text-align:right;top:556.46px;color:#50509c;font-size:8.48px;transform:scaleX(0.81);transform-origin:100% 0;-webkit-text-stroke:.05px">0.00</span>
<span class="t" style="left:668px;width:43.5px;text-align:right;top:556.46px;color:#50509c;font-size:8.48px;transform:scaleX(0.81);transform-origin:100% 0;-webkit-text-stroke:.05px">0.00</span>
<span class="t" style="left:713.5px;width:43.0px;text-align:right;top:556.46px;color:#50509c;font-size:8.48px;transform:scaleX(0.81);transform-origin:100% 0;-webkit-text-stroke:.05px">100.0</span>
<span class="t" style="left:758.5px;width:43.0px;text-align:right;top:556.46px;color:#50509c;font-size:8.48px;transform:scaleX(0.81);transform-origin:100% 0;-webkit-text-stroke:.05px">200.0</span>
<span class="t" style="left:806.5px;top:556.46px;color:#50509c;font-size:8.48px;transform:scaleX(0.81);transform-origin:0 0;-webkit-text-stroke:.05px">Колонны. Фахверковые. Тип 1</span>
<div style="left:203px;top:565.5px;width:984px;height:9.95px;background:#fff;border-bottom:1px solid #c8c8c8"></div>
<div style="left:174.5px;top:565.5px;width:28.5px;height:9.95px;background:linear-gradient(#eeeeee,#dcdcdc);border-bottom:1.3px solid #8a8a8a;border-right:1px solid #b0b0b0"></div>
<span class="t" style="left:174.5px;width:28.5px;text-align:center;top:566.41px;color:#222;font-size:8.48px;transform:scaleX(0.81);transform-origin:50% 0;-webkit-text-stroke:.05px">3</span>
<div style="left:623.5px;top:565.5px;width:44.5px;height:8.95px;background:#ececec"></div>
<div style="left:204.8px;top:566.8px;width:7.5px;height:7.8px;background:#c08070;border:1px solid rgba(0,0,0,.4);border-radius:1.2px"></div>
<svg style="left:214px;top:566.5px;" width="7" height="8" viewBox="0 0 7 8"><path d="M1.5 .8H5.5M3.5 .8V7.2M1.5 7.2H5.5" stroke="#333" stroke-width=".9" fill="none"/></svg>
<span class="t" style="left:223px;top:566.41px;color:#50509c;font-size:8.48px;transform:scaleX(0.81);transform-origin:0 0;-webkit-text-stroke:.05px">IP-B 20 B1 | ГОСТ, 1994</span>
<div style="left:343px;top:567.0px;width:8px;height:7.5px;background:#3a8ae0;border:1px solid #2a5a9a"></div>
<span class="t" style="left:342px;width:30.5px;text-align:right;top:566.41px;color:#333;font-size:8.48px;transform:scaleX(0.81);transform-origin:100% 0;-webkit-text-stroke:.05px">1</span>
<span class="t" style="left:375.5px;width:39.5px;text-align:right;top:566.41px;color:#50509c;font-size:8.48px;transform:scaleX(0.81);transform-origin:100% 0;-webkit-text-stroke:.05px">4.43</span>
<span class="t" style="left:417px;width:39.5px;text-align:right;top:566.41px;color:#50509c;font-size:8.48px;transform:scaleX(0.81);transform-origin:100% 0;-webkit-text-stroke:.05px">1844.00</span>
<span class="t" style="left:458.5px;width:39.5px;text-align:right;top:566.41px;color:#50509c;font-size:8.48px;transform:scaleX(0.81);transform-origin:100% 0;-webkit-text-stroke:.05px">133.90</span>
<span class="t" style="left:500px;width:39px;text-align:right;top:566.41px;color:#50509c;font-size:8.48px;transform:scaleX(0.81);transform-origin:100% 0;-webkit-text-stroke:.05px">27.16</span>
<span class="t" style="left:541px;width:39px;text-align:right;top:566.41px;color:#50509c;font-size:8.48px;transform:scaleX(0.81);transform-origin:100% 0;-webkit-text-stroke:.05px">13.39</span>
<span class="t" style="left:582px;width:39px;text-align:right;top:566.41px;color:#50509c;font-size:8.48px;transform:scaleX(0.81);transform-origin:100% 0;-webkit-text-stroke:.05px">10.17</span>
<span class="t" style="left:623px;width:43px;text-align:right;top:566.41px;color:#50509c;font-size:8.48px;transform:scaleX(0.81);transform-origin:100% 0;-webkit-text-stroke:.05px">0.00</span>
<span class="t" style="left:668px;width:43.5px;text-align:right;top:566.41px;color:#50509c;font-size:8.48px;transform:scaleX(0.81);transform-origin:100% 0;-webkit-text-stroke:.05px">0.00</span>
<span class="t" style="left:713.5px;width:43.0px;text-align:right;top:566.41px;color:#50509c;font-size:8.48px;transform:scaleX(0.81);transform-origin:100% 0;-webkit-text-stroke:.05px">100.0</span>
<span class="t" style="left:758.5px;width:43.0px;text-align:right;top:566.41px;color:#50509c;font-size:8.48px;transform:scaleX(0.81);transform-origin:100% 0;-webkit-text-stroke:.05px">200.0</span>
<span class="t" style="left:806.5px;top:566.41px;color:#50509c;font-size:8.48px;transform:scaleX(0.81);transform-origin:0 0;-webkit-text-stroke:.05px">Балки. Фахверковые. Тип 1</span>
<div style="left:203px;top:575.45px;width:984px;height:9.95px;background:#fff;border-bottom:1px solid #c8c8c8"></div>
<div style="left:174.5px;top:575.45px;width:28.5px;height:9.95px;background:linear-gradient(#eeeeee,#dcdcdc);border-bottom:1.3px solid #8a8a8a;border-right:1px solid #b0b0b0"></div>
<span class="t" style="left:174.5px;width:28.5px;text-align:center;top:576.36px;color:#222;font-size:8.48px;transform:scaleX(0.81);transform-origin:50% 0;-webkit-text-stroke:.05px">4</span>
<div style="left:623.5px;top:575.45px;width:44.5px;height:8.95px;background:#ececec"></div>
<div style="left:204.8px;top:576.75px;width:7.5px;height:7.8px;background:#70a820;border:1px solid rgba(0,0,0,.4);border-radius:1.2px"></div>
<svg style="left:214px;top:576.45px;" width="7" height="8" viewBox="0 0 7 8"><path d="M1.5 .8H5.5M3.5 .8V7.2M1.5 7.2H5.5" stroke="#333" stroke-width=".9" fill="none"/></svg>
<span class="t" style="left:223px;top:576.36px;color:#50509c;font-size:8.48px;transform:scaleX(0.81);transform-origin:0 0;-webkit-text-stroke:.05px">IP-B 20 B1 | ГОСТ, 1994</span>
<div style="left:343px;top:576.95px;width:8px;height:7.5px;background:#3a8ae0;border:1px solid #2a5a9a"></div>
<span class="t" style="left:342px;width:30.5px;text-align:right;top:576.36px;color:#333;font-size:8.48px;transform:scaleX(0.81);transform-origin:100% 0;-webkit-text-stroke:.05px">1</span>
<span class="t" style="left:375.5px;width:39.5px;text-align:right;top:576.36px;color:#50509c;font-size:8.48px;transform:scaleX(0.81);transform-origin:100% 0;-webkit-text-stroke:.05px">4.43</span>
<span class="t" style="left:417px;width:39.5px;text-align:right;top:576.36px;color:#50509c;font-size:8.48px;transform:scaleX(0.81);transform-origin:100% 0;-webkit-text-stroke:.05px">1844.00</span>
<span class="t" style="left:458.5px;width:39.5px;text-align:right;top:576.36px;color:#50509c;font-size:8.48px;transform:scaleX(0.81);transform-origin:100% 0;-webkit-text-stroke:.05px">133.90</span>
<span class="t" style="left:500px;width:39px;text-align:right;top:576.36px;color:#50509c;font-size:8.48px;transform:scaleX(0.81);transform-origin:100% 0;-webkit-text-stroke:.05px">27.16</span>
<span class="t" style="left:541px;width:39px;text-align:right;top:576.36px;color:#50509c;font-size:8.48px;transform:scaleX(0.81);transform-origin:100% 0;-webkit-text-stroke:.05px">13.39</span>
<span class="t" style="left:582px;width:39px;text-align:right;top:576.36px;color:#50509c;font-size:8.48px;transform:scaleX(0.81);transform-origin:100% 0;-webkit-text-stroke:.05px">10.17</span>
<span class="t" style="left:623px;width:43px;text-align:right;top:576.36px;color:#50509c;font-size:8.48px;transform:scaleX(0.81);transform-origin:100% 0;-webkit-text-stroke:.05px">0.00</span>
<span class="t" style="left:668px;width:43.5px;text-align:right;top:576.36px;color:#50509c;font-size:8.48px;transform:scaleX(0.81);transform-origin:100% 0;-webkit-text-stroke:.05px">0.00</span>
<span class="t" style="left:713.5px;width:43.0px;text-align:right;top:576.36px;color:#50509c;font-size:8.48px;transform:scaleX(0.81);transform-origin:100% 0;-webkit-text-stroke:.05px">100.0</span>
<span class="t" style="left:758.5px;width:43.0px;text-align:right;top:576.36px;color:#50509c;font-size:8.48px;transform:scaleX(0.81);transform-origin:100% 0;-webkit-text-stroke:.05px">200.0</span>
<span class="t" style="left:806.5px;top:576.36px;color:#50509c;font-size:8.48px;transform:scaleX(0.81);transform-origin:0 0;-webkit-text-stroke:.05px">Колонны. Рядовые. Тип 1</span>
<div style="left:203px;top:585.4px;width:984px;height:9.95px;background:#fff;border-bottom:1px solid #c8c8c8"></div>
<div style="left:174.5px;top:585.4px;width:28.5px;height:9.95px;background:linear-gradient(#eeeeee,#dcdcdc);border-bottom:1.3px solid #8a8a8a;border-right:1px solid #b0b0b0"></div>
<span class="t" style="left:174.5px;width:28.5px;text-align:center;top:586.31px;color:#222;font-size:8.48px;transform:scaleX(0.81);transform-origin:50% 0;-webkit-text-stroke:.05px">5</span>
<div style="left:623.5px;top:585.4px;width:44.5px;height:8.95px;background:#ececec"></div>
<div style="left:582.5px;top:585.4px;width:40.5px;height:8.95px;background:#ececec"></div>
<div style="left:204.8px;top:586.6999999999999px;width:7.5px;height:7.8px;background:#e81a10;border:1px solid rgba(0,0,0,.4);border-radius:1.2px"></div>
<svg style="left:214px;top:586.9px;" width="7" height="7" viewBox="0 0 7 7"><rect x=".5" y=".5" width="6" height="6" fill="#a8c8e8" stroke="#335" stroke-width=".7"/><rect x="2.3" y="2.3" width="2.4" height="2.4" fill="#fff" stroke="#335" stroke-width=".5"/></svg>
<span class="t" style="left:223px;top:586.31px;color:#50509c;font-size:8.48px;transform:scaleX(0.81);transform-origin:0 0;-webkit-text-stroke:.05px">QRO 140x4 | ГОСТ 30245-03</span>
<div style="left:343px;top:586.9px;width:8px;height:7.5px;background:#3a8ae0;border:1px solid #2a5a9a"></div>
<span class="t" style="left:342px;width:30.5px;text-align:right;top:586.31px;color:#333;font-size:8.48px;transform:scaleX(0.81);transform-origin:100% 0;-webkit-text-stroke:.05px">1</span>
<span class="t" style="left:375.5px;width:39.5px;text-align:right;top:586.31px;color:#50509c;font-size:8.48px;transform:scaleX(0.81);transform-origin:100% 0;-webkit-text-stroke:.05px">1022.18</span>
<span class="t" style="left:417px;width:39.5px;text-align:right;top:586.31px;color:#50509c;font-size:8.48px;transform:scaleX(0.81);transform-origin:100% 0;-webkit-text-stroke:.05px">651.50</span>
<span class="t" style="left:458.5px;width:39.5px;text-align:right;top:586.31px;color:#50509c;font-size:8.48px;transform:scaleX(0.81);transform-origin:100% 0;-webkit-text-stroke:.05px">651.50</span>
<span class="t" style="left:500px;width:39px;text-align:right;top:586.31px;color:#50509c;font-size:8.48px;transform:scaleX(0.81);transform-origin:100% 0;-webkit-text-stroke:.05px">21.35</span>
<span class="t" style="left:541px;width:39px;text-align:right;top:586.31px;color:#50509c;font-size:8.48px;transform:scaleX(0.81);transform-origin:100% 0;-webkit-text-stroke:.05px">9.14</span>
<span class="t" style="left:582px;width:39px;text-align:right;top:586.31px;color:#50509c;font-size:8.48px;transform:scaleX(0.81);transform-origin:100% 0;-webkit-text-stroke:.05px">9.14</span>
<span class="t" style="left:623px;width:43px;text-align:right;top:586.31px;color:#50509c;font-size:8.48px;transform:scaleX(0.81);transform-origin:100% 0;-webkit-text-stroke:.05px">0.00</span>
<span class="t" style="left:668px;width:43.5px;text-align:right;top:586.31px;color:#50509c;font-size:8.48px;transform:scaleX(0.81);transform-origin:100% 0;-webkit-text-stroke:.05px">0.00</span>
<span class="t" style="left:713.5px;width:43.0px;text-align:right;top:586.31px;color:#50509c;font-size:8.48px;transform:scaleX(0.81);transform-origin:100% 0;-webkit-text-stroke:.05px">140.0</span>
<span class="t" style="left:758.5px;width:43.0px;text-align:right;top:586.31px;color:#50509c;font-size:8.48px;transform:scaleX(0.81);transform-origin:100% 0;-webkit-text-stroke:.05px">140.0</span>
<span class="t" style="left:806.5px;top:586.31px;color:#50509c;font-size:8.48px;transform:scaleX(0.81);transform-origin:0 0;-webkit-text-stroke:.05px">Колонны. Внутренние. Тип 1</span>
<div style="left:203px;top:595.35px;width:984px;height:9.95px;background:#fff;border-bottom:1px solid #c8c8c8"></div>
<div style="left:174.5px;top:595.35px;width:28.5px;height:9.95px;background:linear-gradient(#eeeeee,#dcdcdc);border-bottom:1.3px solid #8a8a8a;border-right:1px solid #b0b0b0"></div>
<span class="t" style="left:174.5px;width:28.5px;text-align:center;top:596.26px;color:#222;font-size:8.48px;transform:scaleX(0.81);transform-origin:50% 0;-webkit-text-stroke:.05px">6</span>
<div style="left:623.5px;top:595.35px;width:44.5px;height:8.95px;background:#ececec"></div>
<div style="left:204.8px;top:596.65px;width:7.5px;height:7.8px;background:#9a9af0;border:1px solid rgba(0,0,0,.4);border-radius:1.2px"></div>
<svg style="left:214px;top:596.35px;" width="7" height="8" viewBox="0 0 7 8"><path d="M1.5 .8H5.5M3.5 .8V7.2M1.5 7.2H5.5" stroke="#333" stroke-width=".9" fill="none"/></svg>
<span class="t" style="left:223px;top:596.26px;color:#50509c;font-size:8.48px;transform:scaleX(0.81);transform-origin:0 0;-webkit-text-stroke:.05px">IP-B 20 B1 | ГОСТ, 1994</span>
<div style="left:343px;top:596.85px;width:8px;height:7.5px;background:#3a8ae0;border:1px solid #2a5a9a"></div>
<span class="t" style="left:342px;width:30.5px;text-align:right;top:596.26px;color:#333;font-size:8.48px;transform:scaleX(0.81);transform-origin:100% 0;-webkit-text-stroke:.05px">1</span>
<span class="t" style="left:375.5px;width:39.5px;text-align:right;top:596.26px;color:#50509c;font-size:8.48px;transform:scaleX(0.81);transform-origin:100% 0;-webkit-text-stroke:.05px">4.43</span>
<span class="t" style="left:417px;width:39.5px;text-align:right;top:596.26px;color:#50509c;font-size:8.48px;transform:scaleX(0.81);transform-origin:100% 0;-webkit-text-stroke:.05px">1844.00</span>
<span class="t" style="left:458.5px;width:39.5px;text-align:right;top:596.26px;color:#50509c;font-size:8.48px;transform:scaleX(0.81);transform-origin:100% 0;-webkit-text-stroke:.05px">133.90</span>
<span class="t" style="left:500px;width:39px;text-align:right;top:596.26px;color:#50509c;font-size:8.48px;transform:scaleX(0.81);transform-origin:100% 0;-webkit-text-stroke:.05px">27.16</span>
<span class="t" style="left:541px;width:39px;text-align:right;top:596.26px;color:#50509c;font-size:8.48px;transform:scaleX(0.81);transform-origin:100% 0;-webkit-text-stroke:.05px">13.39</span>
<span class="t" style="left:582px;width:39px;text-align:right;top:596.26px;color:#50509c;font-size:8.48px;transform:scaleX(0.81);transform-origin:100% 0;-webkit-text-stroke:.05px">10.17</span>
<span class="t" style="left:623px;width:43px;text-align:right;top:596.26px;color:#50509c;font-size:8.48px;transform:scaleX(0.81);transform-origin:100% 0;-webkit-text-stroke:.05px">0.00</span>
<span class="t" style="left:668px;width:43.5px;text-align:right;top:596.26px;color:#50509c;font-size:8.48px;transform:scaleX(0.81);transform-origin:100% 0;-webkit-text-stroke:.05px">0.00</span>
<span class="t" style="left:713.5px;width:43.0px;text-align:right;top:596.26px;color:#50509c;font-size:8.48px;transform:scaleX(0.81);transform-origin:100% 0;-webkit-text-stroke:.05px">100.0</span>
<span class="t" style="left:758.5px;width:43.0px;text-align:right;top:596.26px;color:#50509c;font-size:8.48px;transform:scaleX(0.81);transform-origin:100% 0;-webkit-text-stroke:.05px">200.0</span>
<span class="t" style="left:806.5px;top:596.26px;color:#50509c;font-size:8.48px;transform:scaleX(0.81);transform-origin:0 0;-webkit-text-stroke:.05px">Балки. Рядовые. Тип 1</span>
<div style="left:203px;top:605.3000000000001px;width:984px;height:9.95px;background:#fff;border-bottom:1px solid #c8c8c8"></div>
<div style="left:174.5px;top:605.3000000000001px;width:28.5px;height:9.95px;background:linear-gradient(#eeeeee,#dcdcdc);border-bottom:1.3px solid #8a8a8a;border-right:1px solid #b0b0b0"></div>
<span class="t" style="left:174.5px;width:28.5px;text-align:center;top:606.21px;color:#222;font-size:8.48px;transform:scaleX(0.81);transform-origin:50% 0;-webkit-text-stroke:.05px">7</span>
<div style="left:623.5px;top:605.3000000000001px;width:44.5px;height:8.95px;background:#ececec"></div>
<div style="left:204.8px;top:606.6px;width:7.5px;height:7.8px;background:#9a6a30;border:1px solid rgba(0,0,0,.4);border-radius:1.2px"></div>
<svg style="left:214.5px;top:606.50px" width="6" height="8" viewBox="0 0 6 8" shape-rendering="crispEdges"><path d="M5.5 .5H1V7.5H5.5" stroke="#3a3a3a" stroke-width="1" fill="none"/></svg>
<span class="t" style="left:223px;top:606.21px;color:#50509c;font-size:8.48px;transform:scaleX(0.81);transform-origin:0 0;-webkit-text-stroke:.05px">UP 20 | ГОСТ 8240-72</span>
<div style="left:343px;top:606.8000000000001px;width:8px;height:7.5px;background:#3a8ae0;border:1px solid #2a5a9a"></div>
<span class="t" style="left:342px;width:30.5px;text-align:right;top:606.21px;color:#333;font-size:8.48px;transform:scaleX(0.81);transform-origin:100% 0;-webkit-text-stroke:.05px">1</span>
<span class="t" style="left:375.5px;width:39.5px;text-align:right;top:606.21px;color:#50509c;font-size:8.48px;transform:scaleX(0.81);transform-origin:100% 0;-webkit-text-stroke:.05px">4.32</span>
<span class="t" style="left:417px;width:39.5px;text-align:right;top:606.21px;color:#50509c;font-size:8.48px;transform:scaleX(0.81);transform-origin:100% 0;-webkit-text-stroke:.05px">1530.00</span>
<span class="t" style="left:458.5px;width:39.5px;text-align:right;top:606.21px;color:#50509c;font-size:8.48px;transform:scaleX(0.81);transform-origin:100% 0;-webkit-text-stroke:.05px">134.00</span>
<span class="t" style="left:500px;width:39px;text-align:right;top:606.21px;color:#50509c;font-size:8.48px;transform:scaleX(0.81);transform-origin:100% 0;-webkit-text-stroke:.05px">23.40</span>
<span class="t" style="left:541px;width:39px;text-align:right;top:606.21px;color:#50509c;font-size:8.48px;transform:scaleX(0.81);transform-origin:100% 0;-webkit-text-stroke:.05px">6.28</span>
<span class="t" style="left:582px;width:39px;text-align:right;top:606.21px;color:#50509c;font-size:8.48px;transform:scaleX(0.81);transform-origin:100% 0;-webkit-text-stroke:.05px">9.10</span>
<span class="t" style="left:623px;width:43px;text-align:right;top:606.21px;color:#50509c;font-size:8.48px;transform:scaleX(0.81);transform-origin:100% 0;-webkit-text-stroke:.05px">0.00</span>
<span class="t" style="left:668px;width:43.5px;text-align:right;top:606.21px;color:#50509c;font-size:8.48px;transform:scaleX(0.81);transform-origin:100% 0;-webkit-text-stroke:.05px">0.00</span>
<span class="t" style="left:713.5px;width:43.0px;text-align:right;top:606.21px;color:#50509c;font-size:8.48px;transform:scaleX(0.81);transform-origin:100% 0;-webkit-text-stroke:.05px">76.0</span>
<span class="t" style="left:758.5px;width:43.0px;text-align:right;top:606.21px;color:#50509c;font-size:8.48px;transform:scaleX(0.81);transform-origin:100% 0;-webkit-text-stroke:.05px">200.0</span>
<span class="t" style="left:806.5px;top:606.21px;color:#50509c;font-size:8.48px;transform:scaleX(0.81);transform-origin:0 0;-webkit-text-stroke:.05px">Прогоны. Крайние. Тип 1</span>
<div style="left:203px;top:615.25px;width:984px;height:9.95px;background:#fff;border-bottom:1px solid #c8c8c8"></div>
<div style="left:174.5px;top:615.25px;width:28.5px;height:9.95px;background:linear-gradient(#eeeeee,#dcdcdc);border-bottom:1.3px solid #8a8a8a;border-right:1px solid #b0b0b0"></div>
<span class="t" style="left:174.5px;width:28.5px;text-align:center;top:616.16px;color:#222;font-size:8.48px;transform:scaleX(0.81);transform-origin:50% 0;-webkit-text-stroke:.05px">8</span>
<div style="left:623.5px;top:615.25px;width:44.5px;height:8.95px;background:#ececec"></div>
<div style="left:204.8px;top:616.55px;width:7.5px;height:7.8px;background:#2a5010;border:1px solid rgba(0,0,0,.4);border-radius:1.2px"></div>
<svg style="left:214.5px;top:616.45px" width="6" height="8" viewBox="0 0 6 8" shape-rendering="crispEdges"><path d="M5.5 .5H1V7.5H5.5" stroke="#3a3a3a" stroke-width="1" fill="none"/></svg>
<span class="t" style="left:223px;top:616.16px;color:#50509c;font-size:8.48px;transform:scaleX(0.81);transform-origin:0 0;-webkit-text-stroke:.05px">UP 24 | ГОСТ 8240-72</span>
<div style="left:343px;top:616.75px;width:8px;height:7.5px;background:#3a8ae0;border:1px solid #2a5a9a"></div>
<span class="t" style="left:342px;width:30.5px;text-align:right;top:616.16px;color:#333;font-size:8.48px;transform:scaleX(0.81);transform-origin:100% 0;-webkit-text-stroke:.05px">1</span>
<span class="t" style="left:375.5px;width:39.5px;text-align:right;top:616.16px;color:#50509c;font-size:8.48px;transform:scaleX(0.81);transform-origin:100% 0;-webkit-text-stroke:.05px">6.95</span>
<span class="t" style="left:417px;width:39.5px;text-align:right;top:616.16px;color:#50509c;font-size:8.48px;transform:scaleX(0.81);transform-origin:100% 0;-webkit-text-stroke:.05px">2910.00</span>
<span class="t" style="left:458.5px;width:39.5px;text-align:right;top:616.16px;color:#50509c;font-size:8.48px;transform:scaleX(0.81);transform-origin:100% 0;-webkit-text-stroke:.05px">248.00</span>
<span class="t" style="left:500px;width:39px;text-align:right;top:616.16px;color:#50509c;font-size:8.48px;transform:scaleX(0.81);transform-origin:100% 0;-webkit-text-stroke:.05px">30.60</span>
<span class="t" style="left:541px;width:39px;text-align:right;top:616.16px;color:#50509c;font-size:8.48px;transform:scaleX(0.81);transform-origin:100% 0;-webkit-text-stroke:.05px">8.15</span>
<span class="t" style="left:582px;width:39px;text-align:right;top:616.16px;color:#50509c;font-size:8.48px;transform:scaleX(0.81);transform-origin:100% 0;-webkit-text-stroke:.05px">11.83</span>
<span class="t" style="left:623px;width:43px;text-align:right;top:616.16px;color:#50509c;font-size:8.48px;transform:scaleX(0.81);transform-origin:100% 0;-webkit-text-stroke:.05px">0.00</span>
<span class="t" style="left:668px;width:43.5px;text-align:right;top:616.16px;color:#50509c;font-size:8.48px;transform:scaleX(0.81);transform-origin:100% 0;-webkit-text-stroke:.05px">0.00</span>
<span class="t" style="left:713.5px;width:43.0px;text-align:right;top:616.16px;color:#50509c;font-size:8.48px;transform:scaleX(0.81);transform-origin:100% 0;-webkit-text-stroke:.05px">90.0</span>
<span class="t" style="left:758.5px;width:43.0px;text-align:right;top:616.16px;color:#50509c;font-size:8.48px;transform:scaleX(0.81);transform-origin:100% 0;-webkit-text-stroke:.05px">240.0</span>
<span class="t" style="left:806.5px;top:616.16px;color:#50509c;font-size:8.48px;transform:scaleX(0.81);transform-origin:0 0;-webkit-text-stroke:.05px">Прогоны. Средние. Тип 1</span>
<div style="left:341.5px;top:545.6px;width:1px;height:79.6px;background:#c8c8c8"></div>
<div style="left:375.0px;top:545.6px;width:1px;height:79.6px;background:#c8c8c8"></div>
<div style="left:416.5px;top:545.6px;width:1px;height:79.6px;background:#c8c8c8"></div>
<div style="left:458.0px;top:545.6px;width:1px;height:79.6px;background:#c8c8c8"></div>
<div style="left:499.5px;top:545.6px;width:1px;height:79.6px;background:#c8c8c8"></div>
<div style="left:540.5px;top:545.6px;width:1px;height:79.6px;background:#c8c8c8"></div>
<div style="left:581.5px;top:545.6px;width:1px;height:79.6px;background:#c8c8c8"></div>
<div style="left:622.5px;top:545.6px;width:1px;height:79.6px;background:#c8c8c8"></div>
<div style="left:667.5px;top:545.6px;width:1px;height:79.6px;background:#c8c8c8"></div>
<div style="left:713.0px;top:545.6px;width:1px;height:79.6px;background:#c8c8c8"></div>
<div style="left:758.0px;top:545.6px;width:1px;height:79.6px;background:#c8c8c8"></div>
<div style="left:803.0px;top:545.6px;width:1px;height:79.6px;background:#c8c8c8"></div>
<div style="left:174.5px;top:625.2px;width:28.5px;height:9.95px;background:#3a8de4;border-bottom:1px solid #555"></div>
<span class="t" style="left:174.5px;width:28.5px;text-align:center;top:626.11px;color:#e8f4ff;font-size:8.48px;transform:scaleX(0.81);transform-origin:50% 0;-webkit-text-stroke:.05px">9</span>
<div style="left:203px;top:625.2px;width:984px;height:9.95px;background:#ececec"></div>
<div style="left:203.5px;top:625.7px;width:138px;height:8.95px;background:#e8e8e8;border:1px solid #8a8a8a"></div>
<div style="left:342px;top:625.2px;width:33.5px;height:9.95px;background:#f4f4f4;border-right:1px solid #c0c0c0"></div>
<span class="t" style="left:342px;width:33px;text-align:center;top:626.11px;color:#222;font-size:8.48px;transform:scaleX(0.81);transform-origin:50% 0;-webkit-text-stroke:.05px">1</span>
<div style="left:416.5px;top:625.2px;width:1px;height:9.95px;background:#d0d0d0"></div>
<div style="left:458.0px;top:625.2px;width:1px;height:9.95px;background:#d0d0d0"></div>
<div style="left:499.5px;top:625.2px;width:1px;height:9.95px;background:#d0d0d0"></div>
<div style="left:540.5px;top:625.2px;width:1px;height:9.95px;background:#d0d0d0"></div>
<div style="left:581.5px;top:625.2px;width:1px;height:9.95px;background:#d0d0d0"></div>
<div style="left:622.5px;top:625.2px;width:1px;height:9.95px;background:#d0d0d0"></div>
<div style="left:667.5px;top:625.2px;width:1px;height:9.95px;background:#d0d0d0"></div>
<div style="left:713.0px;top:625.2px;width:1px;height:9.95px;background:#d0d0d0"></div>
<div style="left:758.0px;top:625.2px;width:1px;height:9.95px;background:#d0d0d0"></div>
<div style="left:803.0px;top:625.2px;width:1px;height:9.95px;background:#d0d0d0"></div>
<div style="left:1187.5px;top:515px;width:10.5px;height:123px;background:#f0f0f0;border-left:1px solid #c8c8c8"></div>
<div style="left:1188px;top:516px;width:9.5px;height:9px;background:linear-gradient(90deg,#f8f8f8,#e4e4e4);border:1px solid #c8c8c8"></div>
<svg style="left:1190px;top:518.5px;" width="6" height="4" viewBox="0 0 6 4"><path d="M0 3.5L3 .5L6 3.5Z" fill="#222"/></svg>
<div style="left:1188.5px;top:526px;width:9px;height:100px;background:linear-gradient(90deg,#dcdcdc,#f2f2f2 45%,#d2d2d2);border:1px solid #b0b0b0;border-radius:2px"></div>
<div style="left:1191px;top:571.0px;width:4px;height:0.8px;background:#888"></div>
<div style="left:1191px;top:572.6px;width:4px;height:0.8px;background:#888"></div>
<div style="left:1191px;top:574.2px;width:4px;height:0.8px;background:#888"></div>
<svg style="left:1190px;top:628.5px;" width="6" height="4" viewBox="0 0 6 4"><path d="M0 .5L3 3.5L6 .5Z" fill="#222"/></svg>
<div style="left:174px;top:638.5px;width:1024px;height:22px;background:#f0f0f0"></div>
<div style="left:174px;top:638px;width:1024px;height:1.5px;background:#d8dadd"></div>
<div style="left:173.5px;top:639.5px;width:23.5px;height:10.5px;background:linear-gradient(#f6f6f6,#e4e4e4);border:1px solid #9a9a9a;border-top:none;border-radius:0 0 2px 2px"></div>
<span class="t" style="left:173.5px;width:23.5px;text-align:center;top:640.88px;color:#1a1a1a;font-size:8.00px;transform:scaleX(0.87);transform-origin:50% 0;-webkit-text-stroke:.14px">Узлы</span>
<div style="left:197.5px;top:639.5px;width:24.5px;height:10.5px;background:linear-gradient(#f6f6f6,#e4e4e4);border:1px solid #9a9a9a;border-top:none;border-radius:0 0 2px 2px"></div>
<span class="t" style="left:197.5px;width:24.5px;text-align:center;top:640.88px;color:#1a1a1a;font-size:8.00px;transform:scaleX(0.87);transform-origin:50% 0;-webkit-text-stroke:.14px">Линии</span>
<div style="left:224px;top:639.5px;width:41.5px;height:10.5px;background:linear-gradient(#f6f6f6,#e4e4e4);border:1px solid #9a9a9a;border-top:none;border-radius:0 0 2px 2px"></div>
<span class="t" style="left:224px;width:41.5px;text-align:center;top:640.88px;color:#1a1a1a;font-size:8.00px;transform:scaleX(0.87);transform-origin:50% 0;-webkit-text-stroke:.14px">Материалы</span>
<div style="left:266.5px;top:639.5px;width:46.5px;height:10.5px;background:linear-gradient(#f6f6f6,#e4e4e4);border:1px solid #9a9a9a;border-top:none;border-radius:0 0 2px 2px"></div>
<span class="t" style="left:266.5px;width:46.5px;text-align:center;top:640.88px;color:#1a1a1a;font-size:8.00px;transform:scaleX(0.87);transform-origin:50% 0;-webkit-text-stroke:.14px">Поверхности</span>
<div style="left:314px;top:639.5px;width:21.5px;height:10.5px;background:linear-gradient(#f6f6f6,#e4e4e4);border:1px solid #9a9a9a;border-top:none;border-radius:0 0 2px 2px"></div>
<span class="t" style="left:314px;width:21.5px;text-align:center;top:640.88px;color:#1a1a1a;font-size:8.00px;transform:scaleX(0.87);transform-origin:50% 0;-webkit-text-stroke:.14px">Тела</span>
<div style="left:336px;top:639.5px;width:39px;height:10.5px;background:linear-gradient(#f6f6f6,#e4e4e4);border:1px solid #9a9a9a;border-top:none;border-radius:0 0 2px 2px"></div>
<span class="t" style="left:336px;width:39px;text-align:center;top:640.88px;color:#1a1a1a;font-size:8.00px;transform:scaleX(0.87);transform-origin:50% 0;-webkit-text-stroke:.14px">Отверстия</span>
<div style="left:376px;top:639.5px;width:55.5px;height:10.5px;background:linear-gradient(#f6f6f6,#e4e4e4);border:1px solid #9a9a9a;border-top:none;border-radius:0 0 2px 2px"></div>
<span class="t" style="left:376px;width:55.5px;text-align:center;top:640.88px;color:#1a1a1a;font-size:8.00px;transform:scaleX(0.87);transform-origin:50% 0;-webkit-text-stroke:.14px">Узловые опоры</span>
<div style="left:432px;top:639.5px;width:60px;height:10.5px;background:linear-gradient(#f6f6f6,#e4e4e4);border:1px solid #9a9a9a;border-top:none;border-radius:0 0 2px 2px"></div>
<span class="t" style="left:432px;width:60px;text-align:center;top:640.88px;color:#1a1a1a;font-size:8.00px;transform:scaleX(0.87);transform-origin:50% 0;-webkit-text-stroke:.14px">Линейные опоры</span>
<div style="left:493px;top:639.5px;width:72px;height:10.5px;background:linear-gradient(#f6f6f6,#e4e4e4);border:1px solid #9a9a9a;border-top:none;border-radius:0 0 2px 2px"></div>
<span class="t" style="left:493px;width:72px;text-align:center;top:640.88px;color:#1a1a1a;font-size:8.00px;transform:scaleX(0.87);transform-origin:50% 0;-webkit-text-stroke:.14px">Опоры поверхностей</span>
<div style="left:566.5px;top:639.5px;width:67.5px;height:10.5px;background:linear-gradient(#f6f6f6,#e4e4e4);border:1px solid #9a9a9a;border-top:none;border-radius:0 0 2px 2px"></div>
<span class="t" style="left:566.5px;width:67.5px;text-align:center;top:640.88px;color:#1a1a1a;font-size:8.00px;transform:scaleX(0.87);transform-origin:50% 0;-webkit-text-stroke:.14px">Линейные шарниры</span>
<div style="left:635px;top:638.5px;width:32px;height:11.5px;background:#ffffff;border:1px solid #9a9a9a;border-top:none;border-radius:0 0 2px 2px"></div>
<span class="t" style="left:635px;width:32px;text-align:center;top:640.88px;color:#1a1a1a;font-size:8.00px;transform:scaleX(0.87);transform-origin:50% 0;-webkit-text-stroke:.14px">Сечения</span>
<div style="left:668px;top:639.5px;width:66px;height:10.5px;background:linear-gradient(#f6f6f6,#e4e4e4);border:1px solid #9a9a9a;border-top:none;border-radius:0 0 2px 2px"></div>
<span class="t" style="left:668px;width:66px;text-align:center;top:640.88px;color:#1a1a1a;font-size:8.00px;transform:scaleX(0.87);transform-origin:50% 0;-webkit-text-stroke:.14px">Шарниры стержней</span>
<div style="left:736px;top:639.5px;width:90px;height:10.5px;background:linear-gradient(#f6f6f6,#e4e4e4);border:1px solid #9a9a9a;border-top:none;border-radius:0 0 2px 2px"></div>
<span class="t" style="left:736px;width:90px;text-align:center;top:640.88px;color:#1a1a1a;font-size:8.00px;transform:scaleX(0.87);transform-origin:50% 0;-webkit-text-stroke:.14px">Эксцентриситеты стержня</span>
<div style="left:827px;top:639.5px;width:74px;height:10.5px;background:linear-gradient(#f6f6f6,#e4e4e4);border:1px solid #9a9a9a;border-top:none;border-radius:0 0 2px 2px"></div>
<span class="t" style="left:827px;width:74px;text-align:center;top:640.88px;color:#1a1a1a;font-size:8.00px;transform:scaleX(0.87);transform-origin:50% 0;-webkit-text-stroke:.14px">Дробления стержней</span>
<div style="left:902px;top:639.5px;width:33px;height:10.5px;background:linear-gradient(#f6f6f6,#e4e4e4);border:1px solid #9a9a9a;border-top:none;border-radius:0 0 2px 2px"></div>
<span class="t" style="left:902px;width:33px;text-align:center;top:640.88px;color:#1a1a1a;font-size:8.00px;transform:scaleX(0.87);transform-origin:50% 0;-webkit-text-stroke:.14px">Стержни</span>
<div style="left:936px;top:639.5px;width:94.5px;height:10.5px;background:linear-gradient(#f6f6f6,#e4e4e4);border:1px solid #9a9a9a;border-top:none;border-radius:0 0 2px 2px"></div>
<span class="t" style="left:936px;width:94.5px;text-align:center;top:640.88px;color:#1a1a1a;font-size:8.00px;transform:scaleX(0.87);transform-origin:50% 0;-webkit-text-stroke:.14px">Упругие основания стержня</span>
<div style="left:1031.5px;top:639.5px;width:80.5px;height:10.5px;background:linear-gradient(#f6f6f6,#e4e4e4);border:1px solid #9a9a9a;border-top:none;border-radius:0 0 2px 2px"></div>
<span class="t" style="left:1031.5px;width:80.5px;text-align:center;top:640.88px;color:#1a1a1a;font-size:8.00px;transform:scaleX(0.87);transform-origin:50% 0;-webkit-text-stroke:.14px">Нелинейности стержня</span>
<div style="left:1160.0px;top:640px;width:9px;height:9.5px;background:linear-gradient(#fafafa,#e6e6e6);border:1px solid #b8b8b8"></div>
<svg style="left:1162.0px;top:642px;" width="6" height="6" viewBox="0 0 6 6"><path d="M.5 0V6" stroke="#aaa"/><path d="M5 0L2 3L5 6Z" fill="#aaa"/></svg>
<div style="left:1169.5px;top:640px;width:9px;height:9.5px;background:linear-gradient(#fafafa,#e6e6e6);border:1px solid #b8b8b8"></div>
<svg style="left:1171.5px;top:642px;" width="6" height="6" viewBox="0 0 6 6"><path d="M4.5 0L1.5 3L4.5 6Z" fill="#aaa"/></svg>
<div style="left:1179.0px;top:640px;width:9px;height:9.5px;background:linear-gradient(#fafafa,#e6e6e6);border:1px solid #b8b8b8"></div>
<svg style="left:1181.0px;top:642px;" width="6" height="6" viewBox="0 0 6 6"><path d="M1.5 0L4.5 3L1.5 6Z" fill="#111"/></svg>
<div style="left:1188.5px;top:640px;width:9px;height:9.5px;background:linear-gradient(#fafafa,#e6e6e6);border:1px solid #b8b8b8"></div>
<svg style="left:1190.0px;top:642px;" width="6" height="6" viewBox="0 0 6 6"><path d="M5.5 0V6" stroke="#111"/><path d="M1 0L4 3L1 6Z" fill="#111"/></svg>
<div style="left:172px;top:650px;width:1026px;height:11px;background:#efefef"></div>
<div style="left:0px;top:661px;width:1200px;height:1px;background:#e8eaee"></div>
<div style="left:0px;top:662px;width:1200px;height:12px;background:linear-gradient(#d8dbe1,#c9cdd4 60%,#bcc0c7)"></div>
<div style="left:0px;top:674px;width:1200px;height:1px;background:#5e6268"></div>
<div style="left:1007.5px;top:662px;width:1px;height:12px;background:#a8acb3;border-right:1px solid #eceef2;width:2px"></div>
<div style="left:1062.5px;top:662px;width:1px;height:12px;background:#a8acb3;border-right:1px solid #eceef2;width:2px"></div>
<div style="left:1108.5px;top:662px;width:1px;height:12px;background:#a8acb3;border-right:1px solid #eceef2;width:2px"></div>
<div style="left:1155px;top:662px;width:1px;height:12px;background:#a8acb3;border-right:1px solid #eceef2;width:2px"></div>
<div style="left:728px;top:663.3px;width:41px;height:10.5px;background:linear-gradient(#b4b8c0,#c8ccd2);border:1px solid #6a6e76;border-right-color:#e0e2e6;border-bottom-color:#e0e2e6"></div>
<span class="t" style="left:728px;width:41px;text-align:center;top:664.57px;color:#2a2e36;font-size:7.62px;transform:scaleX(0.945);transform-origin:50% 0;-webkit-text-stroke:.14px">ФИКСАЦИЯ</span>
<div style="left:769px;top:663.3px;width:26.5px;height:10.5px;background:linear-gradient(#eceef2,#d8dbe0)"></div>
<span class="t" style="left:769px;width:26.5px;text-align:center;top:664.57px;color:#2a2e36;font-size:7.62px;transform:scaleX(0.945);transform-origin:50% 0;-webkit-text-stroke:.14px">СЕТКА</span>
<div style="left:796px;top:663.3px;width:39.5px;height:10.5px;background:linear-gradient(#b4b8c0,#c8ccd2);border:1px solid #6a6e76;border-right-color:#e0e2e6;border-bottom-color:#e0e2e6"></div>
<span class="t" style="left:796px;width:39.5px;text-align:center;top:664.57px;color:#2a2e36;font-size:7.62px;transform:scaleX(0.945);transform-origin:50% 0;-webkit-text-stroke:.14px">ДЕКАРТ</span>
<div style="left:836px;top:663.3px;width:28.5px;height:10.5px;background:linear-gradient(#b4b8c0,#c8ccd2);border:1px solid #6a6e76;border-right-color:#e0e2e6;border-bottom-color:#e0e2e6"></div>
<span class="t" style="left:836px;width:28.5px;text-align:center;top:664.57px;color:#2a2e36;font-size:7.62px;transform:scaleX(0.945);transform-origin:50% 0;-webkit-text-stroke:.14px">OSNAP</span>
<div style="left:865px;top:663.3px;width:28.5px;height:10.5px;background:linear-gradient(#b4b8c0,#c8ccd2);border:1px solid #6a6e76;border-right-color:#e0e2e6;border-bottom-color:#e0e2e6"></div>
<span class="t" style="left:865px;width:28.5px;text-align:center;top:664.57px;color:#2a2e36;font-size:7.62px;transform:scaleX(0.945);transform-origin:50% 0;-webkit-text-stroke:.14px">GLINES</span>
<div style="left:894px;top:663.3px;width:17px;height:10.5px;background:linear-gradient(#b4b8c0,#c8ccd2);border:1px solid #6a6e76;border-right-color:#e0e2e6;border-bottom-color:#e0e2e6"></div>
<span class="t" style="left:894px;width:17px;text-align:center;top:664.57px;color:#2a2e36;font-size:7.62px;transform:scaleX(0.945);transform-origin:50% 0;-webkit-text-stroke:.14px">DXF</span>
<div style="left:1092px;top:398px;width:108px;height:100px;background:#e6e8ed"></div>
<svg style="left:1095.4px;top:401.2px" width="102" height="94" viewBox="0 0 102 94"><defs><filter id="bl" x="-20%" y="-20%" width="140%" height="140%"><feGaussianBlur stdDeviation="1.1"/></filter><filter id="bl2"><feGaussianBlur stdDeviation="2.5"/></filter><linearGradient id="bg" x1="0" y1="0" x2="1" y2="0"><stop offset="0" stop-color="#b6aeb6"/><stop offset=".5" stop-color="#c0b8bf"/><stop offset="1" stop-color="#cbc4c8"/></linearGradient></defs><rect width="102" height="94" fill="url(#bg)"/><g filter="url(#bl)"><path d="M13.2 94.1Q17.9 81 25.7 71.5Q35 66.9 45.9 66.1L48.2 77.8Q56.8 83.2 63 82.4Q73.9 77.8 77 72.3L78.5 60.6Q90.9 65.3 101.9 71.5L102 95H13Z" fill="#1e1d20"/><path d="M45 64L48.2 77.8Q56 83 63 82.4Q73 78 77 72.3L78.5 60.6L74 44L66 54Z" fill="#b6968a"/><path d="M33.4 24.9Q31.6 34.2 32.7 43.5Q35 56 41.2 63.8Q45.9 68.1 50.5 67.7Q63 63.8 69.2 52.9L73.1 48.2L75.4 35L67.7 22.6Q56.8 17.1 44.3 20.2Q36.5 22.6 33.4 24.9Z" fill="#c7a797"/><path d="M33.4 26Q31.6 34 32.7 43.5Q35 56 41.2 63.8L40 50Q37 38 38 28Z" fill="#b39486" opacity=".6"/><path d="M44 22Q56 19 66 24L70 34Q60 28 46 29Z" fill="#d6bcac" opacity=".6"/><ellipse cx="73.9" cy="41.2" rx="3.6" ry="7" fill="#bb9a8c"/><path d="M33.4 24.9C34.2 10.9 45.9 3.1 56.8 2.8C69.2 2.8 77 10.9 77 21.8L76.7 32.7L73.1 35Q70.8 24.9 67.7 22.6Q56.8 17.1 44.3 20.2Q36.5 22.6 33.4 24.9Z" fill="#2b2725"/><path d="M35.8 35Q39 33.5 42.5 34.5M45.9 33.9Q51 32.5 55.2 35" stroke="#4e3a32" stroke-width="1.3" fill="none"/><ellipse cx="39.6" cy="38.9" rx="2.8" ry="1.1" fill="#4a3630"/><ellipse cx="50.2" cy="38.3" rx="3.2" ry="1.2" fill="#4a3630"/><path d="M41.2 39L39 50.5L41.5 51.5" stroke="#a88676" stroke-width=".9" fill="none"/><path d="M38.9 57.5Q43.5 56.3 48.2 56.8" stroke="#9a6e64" stroke-width="1.2" fill="none"/></g></svg>
</div></body></html>
